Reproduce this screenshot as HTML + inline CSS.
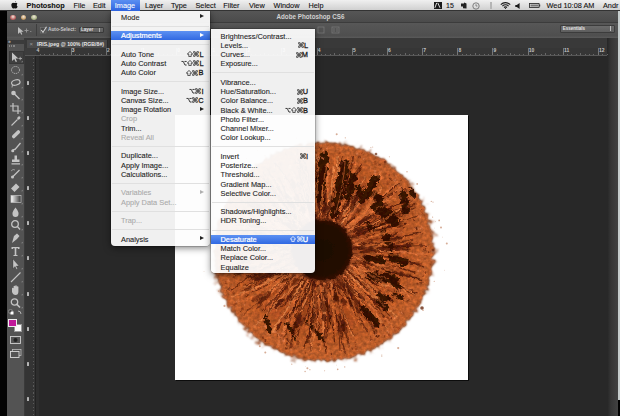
<!DOCTYPE html><html><head><meta charset="utf-8"><style>
*{margin:0;padding:0;box-sizing:border-box}
html,body{width:620px;height:416px;overflow:hidden;background:#282828;font-family:"Liberation Sans",sans-serif}
.a{position:absolute}
.mi{position:absolute;left:0;right:0;height:9.25px;line-height:9.25px;font-size:7.4px;color:#1e1e1e;white-space:nowrap;-webkit-text-stroke:0.1px #222}
.mi .t{position:absolute;left:10px;top:0.3px}
.mi .k{position:absolute;right:6.5px;top:0.3px;text-align:right}
.dis{color:#a9a9a9;-webkit-text-stroke:0.1px #b0b0b0}
.hl{background:linear-gradient(#5d91f2,#3169e2);color:#fff;-webkit-text-stroke:0.22px #fff}
.sep{position:absolute;left:1px;right:1px;height:1px;background:#e0e0e0}
.arr{position:absolute;right:5.8px;top:2.1px;width:0;height:0;border-left:4.3px solid #222;border-top:2.5px solid transparent;border-bottom:2.5px solid transparent}
.mb{position:absolute;top:0.6px;height:10px;line-height:10px;font-size:7.3px;color:#111;white-space:nowrap;-webkit-text-stroke:0.1px #111}
.ti{position:absolute;left:9px;width:14px;height:12px;filter:blur(0.25px)}
</style></head><body><div class="a" style="left:0;top:10px;width:7px;height:406px;background:#030303"></div>
<div class="a" style="left:607px;top:37px;width:11px;height:379px;background:linear-gradient(90deg,#262626,#353535 35%,#424242 100%)"></div>
<div class="a" style="left:617.5px;top:10px;width:2.5px;height:390px;background:#c6cdcd"></div>
<div class="a" style="left:617.5px;top:400px;width:2.5px;height:16px;background:#000"></div>
<div class="a" style="left:7px;top:10.5px;width:610.5px;height:12px;background:linear-gradient(#565656,#4a4a4a)"></div>
<div class="a" style="left:7px;top:22.3px;width:610.5px;height:15.7px;background:linear-gradient(#575757,#4f4f4f 85%,#5a5a5a);border-top:1px solid #3c3c3c"></div>
<div class="a" style="left:9.799999999999999px;top:14.5px;width:5.8px;height:5.8px;border-radius:50%;background:radial-gradient(circle at 50% 35%,#f4e8dc 0,#b86060 60%,#5a4a40 100%)"></div>
<div class="a" style="left:20.5px;top:14.5px;width:5.8px;height:5.8px;border-radius:50%;background:radial-gradient(circle at 50% 35%,#f4e8dc 0,#c8a06a 60%,#5a4a40 100%)"></div>
<div class="a" style="left:31.1px;top:14.5px;width:5.8px;height:5.8px;border-radius:50%;background:radial-gradient(circle at 50% 35%,#f4e8dc 0,#a8b486 60%,#5a4a40 100%)"></div>
<div class="a" style="left:276.5px;top:10.5px;height:12px;line-height:12px;font-size:6.27px;color:#d2d2d2;font-weight:bold;white-space:nowrap">Adobe Photoshop CS6</div>
<svg class="a" style="left:16px;top:25.5px" width="16" height="9" viewBox="0 0 16 9"><path d="M2,1V8L4,6.3L5.3,8.8L6.3,8.3L5.2,5.8H7.6Z" fill="#bdbdbd"/><path d="M8.5,4.5H12.5M10.5,2.5V6.5" stroke="#9a9a9a" stroke-width="0.9"/><path d="M14,5L15.6,5L14.8,6Z" fill="#aaa"/></svg>
<div class="a" style="left:36px;top:24px;width:1px;height:12px;background:#3e3e3e"></div>
<svg class="a" style="left:40px;top:25.5px" width="7" height="8" viewBox="0 0 7 8"><rect x="0.5" y="1.5" width="5.5" height="5.5" fill="#4a4a4a" stroke="#777" stroke-width="0.6"/><path d="M1.2,4L3,6.3L6.5,0.8" fill="none" stroke="#d0d0d0" stroke-width="1.1"/></svg>
<div class="a" style="left:48px;top:25.8px;line-height:8px;font-size:4.75px;color:#c8c8c8;white-space:nowrap;font-weight:bold">Auto-Select:</div>
<div class="a" style="left:78.5px;top:26.5px;width:25px;height:6.3px;background:linear-gradient(#6a6a6a,#5c5c5c);border:0.6px solid #3a3a3a;border-radius:1px"></div>
<div class="a" style="left:81px;top:26.5px;line-height:6.5px;font-size:4.6px;color:#dedede;white-space:nowrap;font-weight:bold">Layer</div>
<div class="a" style="left:98.5px;top:27.5px;width:1px;height:4.5px;background:#aaa"></div>
<svg class="a" style="left:316px;top:25px" width="40" height="10" viewBox="0 0 40 10"><rect x="2" y="2" width="6" height="6" fill="none" stroke="#777" stroke-width="0.8"/><rect x="16" y="2" width="7" height="6" fill="none" stroke="#777" stroke-width="0.8"/><path d="M18,3v4M21,3v4" stroke="#777" stroke-width="0.8"/></svg>
<div class="a" style="left:560.3px;top:24.8px;width:55px;height:8px;background:linear-gradient(#6b6b6b,#5e5e5e);border:0.6px solid #3c3c3c;border-radius:1px"></div>
<div class="a" style="left:562.7px;top:24.8px;line-height:8px;font-size:4.5px;color:#e6e6e6;font-weight:bold;white-space:nowrap">Essentials</div>
<div class="a" style="left:610px;top:26.3px;width:1px;height:5px;background:#bbb"></div>
<div class="a" style="left:25px;top:38px;width:582px;height:10px;background:#393939"></div>
<div class="a" style="left:27px;top:39.5px;width:80.5px;height:8.2px;background:#4b4b4b;border-right:1px solid #2e2e2e"></div>
<div class="a" style="left:37px;top:39.5px;height:8.2px;line-height:8.2px;font-size:5.2px;color:#e4e4e4;font-weight:bold;white-space:nowrap">IRIS.jpeg @ 100% (RGB/8#)</div>
<div class="a" style="left:29.6px;top:39.6px;height:8px;line-height:8px;font-size:6px;color:#9a9a9a">×</div>
<div class="a" style="left:25px;top:47.7px;width:582px;height:8.3px;background:#363636;border-bottom:1px solid #585858"></div>
<div class="a" style="left:36.6px;top:47.9px;font-size:5px;line-height:5px;color:#c4c4c4;font-weight:bold">4</div><div class="a" style="left:35.4px;top:48px;width:0.8px;height:7px;background:#777"></div><div class="a" style="left:39.8px;top:53.6px;width:0.8px;height:1.4px;background:#686868"></div><div class="a" style="left:44.2px;top:53.6px;width:0.8px;height:1.4px;background:#686868"></div><div class="a" style="left:48.6px;top:53.6px;width:0.8px;height:1.4px;background:#686868"></div><div class="a" style="left:53.0px;top:52.8px;width:0.8px;height:2.2px;background:#686868"></div><div class="a" style="left:57.4px;top:53.6px;width:0.8px;height:1.4px;background:#686868"></div><div class="a" style="left:61.8px;top:53.6px;width:0.8px;height:1.4px;background:#686868"></div><div class="a" style="left:66.2px;top:53.6px;width:0.8px;height:1.4px;background:#686868"></div><div class="a" style="left:71.8px;top:47.9px;font-size:5px;line-height:5px;color:#c4c4c4;font-weight:bold">3</div><div class="a" style="left:70.6px;top:48px;width:0.8px;height:7px;background:#777"></div><div class="a" style="left:74.9px;top:53.6px;width:0.8px;height:1.4px;background:#686868"></div><div class="a" style="left:79.3px;top:53.6px;width:0.8px;height:1.4px;background:#686868"></div><div class="a" style="left:83.7px;top:53.6px;width:0.8px;height:1.4px;background:#686868"></div><div class="a" style="left:88.1px;top:52.8px;width:0.8px;height:2.2px;background:#686868"></div><div class="a" style="left:92.5px;top:53.6px;width:0.8px;height:1.4px;background:#686868"></div><div class="a" style="left:96.9px;top:53.6px;width:0.8px;height:1.4px;background:#686868"></div><div class="a" style="left:101.3px;top:53.6px;width:0.8px;height:1.4px;background:#686868"></div><div class="a" style="left:106.9px;top:47.9px;font-size:5px;line-height:5px;color:#c4c4c4;font-weight:bold">2</div><div class="a" style="left:105.7px;top:48px;width:0.8px;height:7px;background:#777"></div><div class="a" style="left:110.1px;top:53.6px;width:0.8px;height:1.4px;background:#686868"></div><div class="a" style="left:114.5px;top:53.6px;width:0.8px;height:1.4px;background:#686868"></div><div class="a" style="left:118.9px;top:53.6px;width:0.8px;height:1.4px;background:#686868"></div><div class="a" style="left:123.3px;top:52.8px;width:0.8px;height:2.2px;background:#686868"></div><div class="a" style="left:127.7px;top:53.6px;width:0.8px;height:1.4px;background:#686868"></div><div class="a" style="left:132.1px;top:53.6px;width:0.8px;height:1.4px;background:#686868"></div><div class="a" style="left:136.5px;top:53.6px;width:0.8px;height:1.4px;background:#686868"></div><div class="a" style="left:142.0px;top:47.9px;font-size:5px;line-height:5px;color:#c4c4c4;font-weight:bold">1</div><div class="a" style="left:140.8px;top:48px;width:0.8px;height:7px;background:#777"></div><div class="a" style="left:145.2px;top:53.6px;width:0.8px;height:1.4px;background:#686868"></div><div class="a" style="left:149.6px;top:53.6px;width:0.8px;height:1.4px;background:#686868"></div><div class="a" style="left:154.0px;top:53.6px;width:0.8px;height:1.4px;background:#686868"></div><div class="a" style="left:158.4px;top:52.8px;width:0.8px;height:2.2px;background:#686868"></div><div class="a" style="left:162.8px;top:53.6px;width:0.8px;height:1.4px;background:#686868"></div><div class="a" style="left:167.2px;top:53.6px;width:0.8px;height:1.4px;background:#686868"></div><div class="a" style="left:171.6px;top:53.6px;width:0.8px;height:1.4px;background:#686868"></div><div class="a" style="left:177.2px;top:47.9px;font-size:5px;line-height:5px;color:#c4c4c4;font-weight:bold">0</div><div class="a" style="left:176.0px;top:48px;width:0.8px;height:7px;background:#777"></div><div class="a" style="left:180.4px;top:53.6px;width:0.8px;height:1.4px;background:#686868"></div><div class="a" style="left:184.8px;top:53.6px;width:0.8px;height:1.4px;background:#686868"></div><div class="a" style="left:189.2px;top:53.6px;width:0.8px;height:1.4px;background:#686868"></div><div class="a" style="left:193.6px;top:52.8px;width:0.8px;height:2.2px;background:#686868"></div><div class="a" style="left:198.0px;top:53.6px;width:0.8px;height:1.4px;background:#686868"></div><div class="a" style="left:202.4px;top:53.6px;width:0.8px;height:1.4px;background:#686868"></div><div class="a" style="left:206.8px;top:53.6px;width:0.8px;height:1.4px;background:#686868"></div><div class="a" style="left:212.3px;top:47.9px;font-size:5px;line-height:5px;color:#c4c4c4;font-weight:bold">1</div><div class="a" style="left:211.2px;top:48px;width:0.8px;height:7px;background:#777"></div><div class="a" style="left:215.5px;top:53.6px;width:0.8px;height:1.4px;background:#686868"></div><div class="a" style="left:219.9px;top:53.6px;width:0.8px;height:1.4px;background:#686868"></div><div class="a" style="left:224.3px;top:53.6px;width:0.8px;height:1.4px;background:#686868"></div><div class="a" style="left:228.7px;top:52.8px;width:0.8px;height:2.2px;background:#686868"></div><div class="a" style="left:233.1px;top:53.6px;width:0.8px;height:1.4px;background:#686868"></div><div class="a" style="left:237.5px;top:53.6px;width:0.8px;height:1.4px;background:#686868"></div><div class="a" style="left:241.9px;top:53.6px;width:0.8px;height:1.4px;background:#686868"></div><div class="a" style="left:247.5px;top:47.9px;font-size:5px;line-height:5px;color:#c4c4c4;font-weight:bold">2</div><div class="a" style="left:246.3px;top:48px;width:0.8px;height:7px;background:#777"></div><div class="a" style="left:250.7px;top:53.6px;width:0.8px;height:1.4px;background:#686868"></div><div class="a" style="left:255.1px;top:53.6px;width:0.8px;height:1.4px;background:#686868"></div><div class="a" style="left:259.5px;top:53.6px;width:0.8px;height:1.4px;background:#686868"></div><div class="a" style="left:263.9px;top:52.8px;width:0.8px;height:2.2px;background:#686868"></div><div class="a" style="left:268.3px;top:53.6px;width:0.8px;height:1.4px;background:#686868"></div><div class="a" style="left:272.7px;top:53.6px;width:0.8px;height:1.4px;background:#686868"></div><div class="a" style="left:277.1px;top:53.6px;width:0.8px;height:1.4px;background:#686868"></div><div class="a" style="left:282.6px;top:47.9px;font-size:5px;line-height:5px;color:#c4c4c4;font-weight:bold">3</div><div class="a" style="left:281.4px;top:48px;width:0.8px;height:7px;background:#777"></div><div class="a" style="left:285.8px;top:53.6px;width:0.8px;height:1.4px;background:#686868"></div><div class="a" style="left:290.2px;top:53.6px;width:0.8px;height:1.4px;background:#686868"></div><div class="a" style="left:294.6px;top:53.6px;width:0.8px;height:1.4px;background:#686868"></div><div class="a" style="left:299.0px;top:52.8px;width:0.8px;height:2.2px;background:#686868"></div><div class="a" style="left:303.4px;top:53.6px;width:0.8px;height:1.4px;background:#686868"></div><div class="a" style="left:307.8px;top:53.6px;width:0.8px;height:1.4px;background:#686868"></div><div class="a" style="left:312.2px;top:53.6px;width:0.8px;height:1.4px;background:#686868"></div><div class="a" style="left:317.8px;top:47.9px;font-size:5px;line-height:5px;color:#c4c4c4;font-weight:bold">4</div><div class="a" style="left:316.6px;top:48px;width:0.8px;height:7px;background:#777"></div><div class="a" style="left:321.0px;top:53.6px;width:0.8px;height:1.4px;background:#686868"></div><div class="a" style="left:325.4px;top:53.6px;width:0.8px;height:1.4px;background:#686868"></div><div class="a" style="left:329.8px;top:53.6px;width:0.8px;height:1.4px;background:#686868"></div><div class="a" style="left:334.2px;top:52.8px;width:0.8px;height:2.2px;background:#686868"></div><div class="a" style="left:338.6px;top:53.6px;width:0.8px;height:1.4px;background:#686868"></div><div class="a" style="left:343.0px;top:53.6px;width:0.8px;height:1.4px;background:#686868"></div><div class="a" style="left:347.4px;top:53.6px;width:0.8px;height:1.4px;background:#686868"></div><div class="a" style="left:352.9px;top:47.9px;font-size:5px;line-height:5px;color:#c4c4c4;font-weight:bold">5</div><div class="a" style="left:351.8px;top:48px;width:0.8px;height:7px;background:#777"></div><div class="a" style="left:356.1px;top:53.6px;width:0.8px;height:1.4px;background:#686868"></div><div class="a" style="left:360.5px;top:53.6px;width:0.8px;height:1.4px;background:#686868"></div><div class="a" style="left:364.9px;top:53.6px;width:0.8px;height:1.4px;background:#686868"></div><div class="a" style="left:369.3px;top:52.8px;width:0.8px;height:2.2px;background:#686868"></div><div class="a" style="left:373.7px;top:53.6px;width:0.8px;height:1.4px;background:#686868"></div><div class="a" style="left:378.1px;top:53.6px;width:0.8px;height:1.4px;background:#686868"></div><div class="a" style="left:382.5px;top:53.6px;width:0.8px;height:1.4px;background:#686868"></div><div class="a" style="left:388.1px;top:47.9px;font-size:5px;line-height:5px;color:#c4c4c4;font-weight:bold">6</div><div class="a" style="left:386.9px;top:48px;width:0.8px;height:7px;background:#777"></div><div class="a" style="left:391.3px;top:53.6px;width:0.8px;height:1.4px;background:#686868"></div><div class="a" style="left:395.7px;top:53.6px;width:0.8px;height:1.4px;background:#686868"></div><div class="a" style="left:400.1px;top:53.6px;width:0.8px;height:1.4px;background:#686868"></div><div class="a" style="left:404.5px;top:52.8px;width:0.8px;height:2.2px;background:#686868"></div><div class="a" style="left:408.9px;top:53.6px;width:0.8px;height:1.4px;background:#686868"></div><div class="a" style="left:413.3px;top:53.6px;width:0.8px;height:1.4px;background:#686868"></div><div class="a" style="left:417.7px;top:53.6px;width:0.8px;height:1.4px;background:#686868"></div><div class="a" style="left:423.2px;top:47.9px;font-size:5px;line-height:5px;color:#c4c4c4;font-weight:bold">7</div><div class="a" style="left:422.0px;top:48px;width:0.8px;height:7px;background:#777"></div><div class="a" style="left:426.4px;top:53.6px;width:0.8px;height:1.4px;background:#686868"></div><div class="a" style="left:430.8px;top:53.6px;width:0.8px;height:1.4px;background:#686868"></div><div class="a" style="left:435.2px;top:53.6px;width:0.8px;height:1.4px;background:#686868"></div><div class="a" style="left:439.6px;top:52.8px;width:0.8px;height:2.2px;background:#686868"></div><div class="a" style="left:444.0px;top:53.6px;width:0.8px;height:1.4px;background:#686868"></div><div class="a" style="left:448.4px;top:53.6px;width:0.8px;height:1.4px;background:#686868"></div><div class="a" style="left:452.8px;top:53.6px;width:0.8px;height:1.4px;background:#686868"></div><div class="a" style="left:458.4px;top:47.9px;font-size:5px;line-height:5px;color:#c4c4c4;font-weight:bold">8</div><div class="a" style="left:457.2px;top:48px;width:0.8px;height:7px;background:#777"></div><div class="a" style="left:461.6px;top:53.6px;width:0.8px;height:1.4px;background:#686868"></div><div class="a" style="left:466.0px;top:53.6px;width:0.8px;height:1.4px;background:#686868"></div><div class="a" style="left:470.4px;top:53.6px;width:0.8px;height:1.4px;background:#686868"></div><div class="a" style="left:474.8px;top:52.8px;width:0.8px;height:2.2px;background:#686868"></div><div class="a" style="left:479.2px;top:53.6px;width:0.8px;height:1.4px;background:#686868"></div><div class="a" style="left:483.6px;top:53.6px;width:0.8px;height:1.4px;background:#686868"></div><div class="a" style="left:488.0px;top:53.6px;width:0.8px;height:1.4px;background:#686868"></div><div class="a" style="left:493.5px;top:47.9px;font-size:5px;line-height:5px;color:#c4c4c4;font-weight:bold">9</div><div class="a" style="left:492.3px;top:48px;width:0.8px;height:7px;background:#777"></div><div class="a" style="left:496.7px;top:53.6px;width:0.8px;height:1.4px;background:#686868"></div><div class="a" style="left:501.1px;top:53.6px;width:0.8px;height:1.4px;background:#686868"></div><div class="a" style="left:505.5px;top:53.6px;width:0.8px;height:1.4px;background:#686868"></div><div class="a" style="left:509.9px;top:52.8px;width:0.8px;height:2.2px;background:#686868"></div><div class="a" style="left:514.3px;top:53.6px;width:0.8px;height:1.4px;background:#686868"></div><div class="a" style="left:518.7px;top:53.6px;width:0.8px;height:1.4px;background:#686868"></div><div class="a" style="left:523.1px;top:53.6px;width:0.8px;height:1.4px;background:#686868"></div><div class="a" style="left:528.7px;top:47.9px;font-size:5px;line-height:5px;color:#c4c4c4;font-weight:bold">10</div><div class="a" style="left:527.5px;top:48px;width:0.8px;height:7px;background:#777"></div><div class="a" style="left:531.9px;top:53.6px;width:0.8px;height:1.4px;background:#686868"></div><div class="a" style="left:536.3px;top:53.6px;width:0.8px;height:1.4px;background:#686868"></div><div class="a" style="left:540.7px;top:53.6px;width:0.8px;height:1.4px;background:#686868"></div><div class="a" style="left:545.1px;top:52.8px;width:0.8px;height:2.2px;background:#686868"></div><div class="a" style="left:549.5px;top:53.6px;width:0.8px;height:1.4px;background:#686868"></div><div class="a" style="left:553.9px;top:53.6px;width:0.8px;height:1.4px;background:#686868"></div><div class="a" style="left:558.3px;top:53.6px;width:0.8px;height:1.4px;background:#686868"></div><div class="a" style="left:563.9px;top:47.9px;font-size:5px;line-height:5px;color:#c4c4c4;font-weight:bold">11</div><div class="a" style="left:562.6px;top:48px;width:0.8px;height:7px;background:#777"></div><div class="a" style="left:567.0px;top:53.6px;width:0.8px;height:1.4px;background:#686868"></div><div class="a" style="left:571.4px;top:53.6px;width:0.8px;height:1.4px;background:#686868"></div><div class="a" style="left:575.8px;top:53.6px;width:0.8px;height:1.4px;background:#686868"></div><div class="a" style="left:580.2px;top:52.8px;width:0.8px;height:2.2px;background:#686868"></div><div class="a" style="left:584.6px;top:53.6px;width:0.8px;height:1.4px;background:#686868"></div><div class="a" style="left:589.0px;top:53.6px;width:0.8px;height:1.4px;background:#686868"></div><div class="a" style="left:593.4px;top:53.6px;width:0.8px;height:1.4px;background:#686868"></div><div class="a" style="left:599.0px;top:47.9px;font-size:5px;line-height:5px;color:#c4c4c4;font-weight:bold">12</div><div class="a" style="left:597.8px;top:48px;width:0.8px;height:7px;background:#777"></div><div class="a" style="left:602.2px;top:53.6px;width:0.8px;height:1.4px;background:#686868"></div><div class="a" style="left:606.6px;top:53.6px;width:0.8px;height:1.4px;background:#686868"></div>
<div class="a" style="left:25px;top:47.7px;width:10.5px;height:368.3px;background:#343434;border-right:0.8px solid #222"></div>
<div class="a" style="left:35.5px;top:56px;width:3px;height:360px;background:#2e2e2e"></div>
<div class="a" style="left:25px;top:47.7px;width:10.5px;height:8.3px;background:#3c3c3c;border-bottom:1px solid #585858"></div>
<div class="a" style="left:27px;top:80.7px;width:2.2px;height:4px;background:#b4b4b4;border-radius:0.5px"></div><div class="a" style="left:27px;top:115.8px;width:2.2px;height:4px;background:#b4b4b4;border-radius:0.5px"></div><div class="a" style="left:27px;top:150.9px;width:2.2px;height:4px;background:#b4b4b4;border-radius:0.5px"></div><div class="a" style="left:27px;top:186.1px;width:2.2px;height:4px;background:#b4b4b4;border-radius:0.5px"></div><div class="a" style="left:27px;top:221.2px;width:2.2px;height:4px;background:#b4b4b4;border-radius:0.5px"></div><div class="a" style="left:27px;top:256.4px;width:2.2px;height:4px;background:#b4b4b4;border-radius:0.5px"></div><div class="a" style="left:27px;top:291.6px;width:2.2px;height:4px;background:#b4b4b4;border-radius:0.5px"></div><div class="a" style="left:27px;top:326.7px;width:2.2px;height:4px;background:#b4b4b4;border-radius:0.5px"></div><div class="a" style="left:27px;top:361.8px;width:2.2px;height:4px;background:#b4b4b4;border-radius:0.5px"></div><div class="a" style="left:27px;top:397.0px;width:2.2px;height:4px;background:#b4b4b4;border-radius:0.5px"></div><div class="a" style="left:32.6px;top:58.0px;width:1px;height:1.2px;background:#5a5a5a"></div><div class="a" style="left:32.6px;top:61.5px;width:1px;height:1.2px;background:#5a5a5a"></div><div class="a" style="left:32.6px;top:65.0px;width:1px;height:1.2px;background:#5a5a5a"></div><div class="a" style="left:32.6px;top:68.6px;width:1px;height:1.2px;background:#5a5a5a"></div><div class="a" style="left:32.6px;top:72.1px;width:1px;height:1.2px;background:#5a5a5a"></div><div class="a" style="left:32.6px;top:75.6px;width:1px;height:1.2px;background:#5a5a5a"></div><div class="a" style="left:32.6px;top:79.1px;width:1px;height:1.2px;background:#5a5a5a"></div><div class="a" style="left:32.6px;top:82.6px;width:1px;height:1.2px;background:#5a5a5a"></div><div class="a" style="left:32.6px;top:86.2px;width:1px;height:1.2px;background:#5a5a5a"></div><div class="a" style="left:32.6px;top:89.7px;width:1px;height:1.2px;background:#5a5a5a"></div><div class="a" style="left:32.6px;top:93.2px;width:1px;height:1.2px;background:#5a5a5a"></div><div class="a" style="left:32.6px;top:96.7px;width:1px;height:1.2px;background:#5a5a5a"></div><div class="a" style="left:32.6px;top:100.2px;width:1px;height:1.2px;background:#5a5a5a"></div><div class="a" style="left:32.6px;top:103.8px;width:1px;height:1.2px;background:#5a5a5a"></div><div class="a" style="left:32.6px;top:107.3px;width:1px;height:1.2px;background:#5a5a5a"></div><div class="a" style="left:32.6px;top:110.8px;width:1px;height:1.2px;background:#5a5a5a"></div><div class="a" style="left:32.6px;top:114.3px;width:1px;height:1.2px;background:#5a5a5a"></div><div class="a" style="left:32.6px;top:117.8px;width:1px;height:1.2px;background:#5a5a5a"></div><div class="a" style="left:32.6px;top:121.4px;width:1px;height:1.2px;background:#5a5a5a"></div><div class="a" style="left:32.6px;top:124.9px;width:1px;height:1.2px;background:#5a5a5a"></div><div class="a" style="left:32.6px;top:128.4px;width:1px;height:1.2px;background:#5a5a5a"></div><div class="a" style="left:32.6px;top:131.9px;width:1px;height:1.2px;background:#5a5a5a"></div><div class="a" style="left:32.6px;top:135.4px;width:1px;height:1.2px;background:#5a5a5a"></div><div class="a" style="left:32.6px;top:139.0px;width:1px;height:1.2px;background:#5a5a5a"></div><div class="a" style="left:32.6px;top:142.5px;width:1px;height:1.2px;background:#5a5a5a"></div><div class="a" style="left:32.6px;top:146.0px;width:1px;height:1.2px;background:#5a5a5a"></div><div class="a" style="left:32.6px;top:149.5px;width:1px;height:1.2px;background:#5a5a5a"></div><div class="a" style="left:32.6px;top:153.0px;width:1px;height:1.2px;background:#5a5a5a"></div><div class="a" style="left:32.6px;top:156.6px;width:1px;height:1.2px;background:#5a5a5a"></div><div class="a" style="left:32.6px;top:160.1px;width:1px;height:1.2px;background:#5a5a5a"></div><div class="a" style="left:32.6px;top:163.6px;width:1px;height:1.2px;background:#5a5a5a"></div><div class="a" style="left:32.6px;top:167.1px;width:1px;height:1.2px;background:#5a5a5a"></div><div class="a" style="left:32.6px;top:170.6px;width:1px;height:1.2px;background:#5a5a5a"></div><div class="a" style="left:32.6px;top:174.2px;width:1px;height:1.2px;background:#5a5a5a"></div><div class="a" style="left:32.6px;top:177.7px;width:1px;height:1.2px;background:#5a5a5a"></div><div class="a" style="left:32.6px;top:181.2px;width:1px;height:1.2px;background:#5a5a5a"></div><div class="a" style="left:32.6px;top:184.7px;width:1px;height:1.2px;background:#5a5a5a"></div><div class="a" style="left:32.6px;top:188.2px;width:1px;height:1.2px;background:#5a5a5a"></div><div class="a" style="left:32.6px;top:191.8px;width:1px;height:1.2px;background:#5a5a5a"></div><div class="a" style="left:32.6px;top:195.3px;width:1px;height:1.2px;background:#5a5a5a"></div><div class="a" style="left:32.6px;top:198.8px;width:1px;height:1.2px;background:#5a5a5a"></div><div class="a" style="left:32.6px;top:202.3px;width:1px;height:1.2px;background:#5a5a5a"></div><div class="a" style="left:32.6px;top:205.8px;width:1px;height:1.2px;background:#5a5a5a"></div><div class="a" style="left:32.6px;top:209.4px;width:1px;height:1.2px;background:#5a5a5a"></div><div class="a" style="left:32.6px;top:212.9px;width:1px;height:1.2px;background:#5a5a5a"></div><div class="a" style="left:32.6px;top:216.4px;width:1px;height:1.2px;background:#5a5a5a"></div><div class="a" style="left:32.6px;top:219.9px;width:1px;height:1.2px;background:#5a5a5a"></div><div class="a" style="left:32.6px;top:223.4px;width:1px;height:1.2px;background:#5a5a5a"></div><div class="a" style="left:32.6px;top:227.0px;width:1px;height:1.2px;background:#5a5a5a"></div><div class="a" style="left:32.6px;top:230.5px;width:1px;height:1.2px;background:#5a5a5a"></div><div class="a" style="left:32.6px;top:234.0px;width:1px;height:1.2px;background:#5a5a5a"></div><div class="a" style="left:32.6px;top:237.5px;width:1px;height:1.2px;background:#5a5a5a"></div><div class="a" style="left:32.6px;top:241.0px;width:1px;height:1.2px;background:#5a5a5a"></div><div class="a" style="left:32.6px;top:244.6px;width:1px;height:1.2px;background:#5a5a5a"></div><div class="a" style="left:32.6px;top:248.1px;width:1px;height:1.2px;background:#5a5a5a"></div><div class="a" style="left:32.6px;top:251.6px;width:1px;height:1.2px;background:#5a5a5a"></div><div class="a" style="left:32.6px;top:255.1px;width:1px;height:1.2px;background:#5a5a5a"></div><div class="a" style="left:32.6px;top:258.6px;width:1px;height:1.2px;background:#5a5a5a"></div><div class="a" style="left:32.6px;top:262.2px;width:1px;height:1.2px;background:#5a5a5a"></div><div class="a" style="left:32.6px;top:265.7px;width:1px;height:1.2px;background:#5a5a5a"></div><div class="a" style="left:32.6px;top:269.2px;width:1px;height:1.2px;background:#5a5a5a"></div><div class="a" style="left:32.6px;top:272.7px;width:1px;height:1.2px;background:#5a5a5a"></div><div class="a" style="left:32.6px;top:276.2px;width:1px;height:1.2px;background:#5a5a5a"></div><div class="a" style="left:32.6px;top:279.8px;width:1px;height:1.2px;background:#5a5a5a"></div><div class="a" style="left:32.6px;top:283.3px;width:1px;height:1.2px;background:#5a5a5a"></div><div class="a" style="left:32.6px;top:286.8px;width:1px;height:1.2px;background:#5a5a5a"></div><div class="a" style="left:32.6px;top:290.3px;width:1px;height:1.2px;background:#5a5a5a"></div><div class="a" style="left:32.6px;top:293.8px;width:1px;height:1.2px;background:#5a5a5a"></div><div class="a" style="left:32.6px;top:297.4px;width:1px;height:1.2px;background:#5a5a5a"></div><div class="a" style="left:32.6px;top:300.9px;width:1px;height:1.2px;background:#5a5a5a"></div><div class="a" style="left:32.6px;top:304.4px;width:1px;height:1.2px;background:#5a5a5a"></div><div class="a" style="left:32.6px;top:307.9px;width:1px;height:1.2px;background:#5a5a5a"></div><div class="a" style="left:32.6px;top:311.4px;width:1px;height:1.2px;background:#5a5a5a"></div><div class="a" style="left:32.6px;top:315.0px;width:1px;height:1.2px;background:#5a5a5a"></div><div class="a" style="left:32.6px;top:318.5px;width:1px;height:1.2px;background:#5a5a5a"></div><div class="a" style="left:32.6px;top:322.0px;width:1px;height:1.2px;background:#5a5a5a"></div><div class="a" style="left:32.6px;top:325.5px;width:1px;height:1.2px;background:#5a5a5a"></div><div class="a" style="left:32.6px;top:329.0px;width:1px;height:1.2px;background:#5a5a5a"></div><div class="a" style="left:32.6px;top:332.6px;width:1px;height:1.2px;background:#5a5a5a"></div><div class="a" style="left:32.6px;top:336.1px;width:1px;height:1.2px;background:#5a5a5a"></div><div class="a" style="left:32.6px;top:339.6px;width:1px;height:1.2px;background:#5a5a5a"></div><div class="a" style="left:32.6px;top:343.1px;width:1px;height:1.2px;background:#5a5a5a"></div><div class="a" style="left:32.6px;top:346.6px;width:1px;height:1.2px;background:#5a5a5a"></div><div class="a" style="left:32.6px;top:350.2px;width:1px;height:1.2px;background:#5a5a5a"></div><div class="a" style="left:32.6px;top:353.7px;width:1px;height:1.2px;background:#5a5a5a"></div><div class="a" style="left:32.6px;top:357.2px;width:1px;height:1.2px;background:#5a5a5a"></div><div class="a" style="left:32.6px;top:360.7px;width:1px;height:1.2px;background:#5a5a5a"></div><div class="a" style="left:32.6px;top:364.2px;width:1px;height:1.2px;background:#5a5a5a"></div><div class="a" style="left:32.6px;top:367.8px;width:1px;height:1.2px;background:#5a5a5a"></div><div class="a" style="left:32.6px;top:371.3px;width:1px;height:1.2px;background:#5a5a5a"></div><div class="a" style="left:32.6px;top:374.8px;width:1px;height:1.2px;background:#5a5a5a"></div><div class="a" style="left:32.6px;top:378.3px;width:1px;height:1.2px;background:#5a5a5a"></div><div class="a" style="left:32.6px;top:381.8px;width:1px;height:1.2px;background:#5a5a5a"></div><div class="a" style="left:32.6px;top:385.4px;width:1px;height:1.2px;background:#5a5a5a"></div><div class="a" style="left:32.6px;top:388.9px;width:1px;height:1.2px;background:#5a5a5a"></div><div class="a" style="left:32.6px;top:392.4px;width:1px;height:1.2px;background:#5a5a5a"></div><div class="a" style="left:32.6px;top:395.9px;width:1px;height:1.2px;background:#5a5a5a"></div><div class="a" style="left:32.6px;top:399.4px;width:1px;height:1.2px;background:#5a5a5a"></div><div class="a" style="left:32.6px;top:403.0px;width:1px;height:1.2px;background:#5a5a5a"></div><div class="a" style="left:32.6px;top:406.5px;width:1px;height:1.2px;background:#5a5a5a"></div><div class="a" style="left:32.6px;top:410.0px;width:1px;height:1.2px;background:#5a5a5a"></div><div class="a" style="left:32.6px;top:413.5px;width:1px;height:1.2px;background:#5a5a5a"></div><div class="a" style="left:32.6px;top:417.0px;width:1px;height:1.2px;background:#5a5a5a"></div><div class="a" style="left:32.6px;top:420.6px;width:1px;height:1.2px;background:#5a5a5a"></div>
<div class="a" style="left:7px;top:38px;width:18px;height:378px;background:#535353;border-right:1px solid #3a3a3a"></div>
<div class="a" style="left:7px;top:39.5px;width:18px;height:4.6px;background:#3b3b3b"></div>
<div class="a" style="left:8px;top:39px;font-size:5px;line-height:5px;color:#bbb;font-weight:bold">»</div>
<div class="a" style="left:8.5px;top:45.2px;width:6px;height:1.6px;background:repeating-linear-gradient(90deg,#9a9a9a 0 1.2px,transparent 1.2px 2.2px);opacity:0.7"></div>
<div class="a" style="left:8.5px;top:50.5px;width:15.5px;height:13px;background:#404040;border:0.5px solid #383838"></div><svg width="0" height="0" style="position:absolute"><defs><linearGradient id="gr"><stop offset="0" stop-color="#fff"/><stop offset="1" stop-color="#333"/></linearGradient></defs></svg><svg class="ti" style="top:51.0px" width="14" height="12" viewBox="0 0 14 12"><path d="M3,1.5V10L5.2,8L6.8,11L8,10.4L6.6,7.4H9.4Z" fill="#c4c4c4"/><path d="M9.5,7.5H13M11.2,5.8V9.2" stroke="#aaa" stroke-width="0.9"/><path d="M12.2,11.2H13.6V9.8Z" fill="#999"/></svg><svg class="ti" style="top:64.0px" width="14" height="12" viewBox="0 0 14 12"><ellipse cx="6.5" cy="6" rx="4" ry="3.5" fill="none" stroke="#c4c4c4" stroke-width="0.9" stroke-dasharray="1.2 0.8"/><path d="M12.2,11.2H13.6V9.8Z" fill="#999"/></svg><svg class="ti" style="top:76.5px" width="14" height="12" viewBox="0 0 14 12"><ellipse cx="6.8" cy="5.5" rx="4.3" ry="2.6" fill="none" stroke="#c4c4c4" stroke-width="1.2" transform="rotate(-15 6.8 5.5)"/><path d="M3.5,7.5L3,10.5" stroke="#c4c4c4" stroke-width="0.8"/><path d="M12.2,11.2H13.6V9.8Z" fill="#999"/></svg><svg class="ti" style="top:89.0px" width="14" height="12" viewBox="0 0 14 12"><circle cx="4.5" cy="4" r="2.3" fill="#c4c4c4"/><path d="M5.5,5L10.5,10" stroke="#c4c4c4" stroke-width="1.4"/><path d="M12.2,11.2H13.6V9.8Z" fill="#999"/></svg><svg class="ti" style="top:102.0px" width="14" height="12" viewBox="0 0 14 12"><path d="M4,1V9H12M1,4H9V12" fill="none" stroke="#c4c4c4" stroke-width="1.2"/><path d="M12.2,11.2H13.6V9.8Z" fill="#999"/></svg><svg class="ti" style="top:115.0px" width="14" height="12" viewBox="0 0 14 12"><path d="M2.5,10.5L8.5,4.5" stroke="#c4c4c4" stroke-width="1.1"/><ellipse cx="9.8" cy="3" rx="1.8" ry="1.4" fill="#c4c4c4" transform="rotate(-45 9.8 3)"/><path d="M12.2,11.2H13.6V9.8Z" fill="#999"/></svg><svg class="ti" style="top:128.0px" width="14" height="12" viewBox="0 0 14 12"><rect x="2" y="4.5" width="10" height="3.5" rx="1.7" fill="#c4c4c4" transform="rotate(-45 7 6.2)"/><path d="M12.2,11.2H13.6V9.8Z" fill="#999"/></svg><svg class="ti" style="top:141.0px" width="14" height="12" viewBox="0 0 14 12"><path d="M3,10.5Q4.5,8 6,8.5L11.5,2" stroke="#c4c4c4" stroke-width="1.3" fill="none"/><circle cx="3.8" cy="9.8" r="1.5" fill="#c4c4c4"/><path d="M12.2,11.2H13.6V9.8Z" fill="#999"/></svg><svg class="ti" style="top:154.0px" width="14" height="12" viewBox="0 0 14 12"><path d="M5.5,1.5H8V5.5H10.5V8H3V5.5H5.5Z M2.5,9.2H11V10.5H2.5Z" fill="#c4c4c4"/><path d="M12.2,11.2H13.6V9.8Z" fill="#999"/></svg><svg class="ti" style="top:167.0px" width="14" height="12" viewBox="0 0 14 12"><path d="M3,10.5L10.5,3" stroke="#c4c4c4" stroke-width="1.3"/><circle cx="3.5" cy="10" r="1.5" fill="#c4c4c4"/><path d="M2,4Q4,1.5 6,3" stroke="#aaa" stroke-width="0.8" fill="none"/><path d="M12.2,11.2H13.6V9.8Z" fill="#999"/></svg><svg class="ti" style="top:180.0px" width="14" height="12" viewBox="0 0 14 12"><path d="M2,8.5L7,3.5L10.5,7L5.5,12Z" fill="#c4c4c4"/><path d="M12.2,11.2H13.6V9.8Z" fill="#999"/></svg><svg class="ti" style="top:193.0px" width="14" height="12" viewBox="0 0 14 12"><rect x="2" y="2.5" width="10" height="7" fill="url(#gr)" stroke="#c4c4c4" stroke-width="0.7"/><path d="M12.2,11.2H13.6V9.8Z" fill="#999"/></svg><svg class="ti" style="top:206.0px" width="14" height="12" viewBox="0 0 14 12"><path d="M6.5,1.5Q10,6 9.5,8A3,3 0 0 1 3.5,8Q3,6 6.5,1.5Z" fill="#c4c4c4"/><path d="M12.2,11.2H13.6V9.8Z" fill="#999"/></svg><svg class="ti" style="top:219.0px" width="14" height="12" viewBox="0 0 14 12"><circle cx="6" cy="5" r="3.3" fill="none" stroke="#c4c4c4" stroke-width="1.3"/><path d="M8.3,7.3L11,10.5" stroke="#c4c4c4" stroke-width="1.3"/><path d="M12.2,11.2H13.6V9.8Z" fill="#999"/></svg><svg class="ti" style="top:232.0px" width="14" height="12" viewBox="0 0 14 12"><path d="M3,11L5,4L8,1.5L10.5,4L8,7Z" fill="#c4c4c4"/><path d="M12.2,11.2H13.6V9.8Z" fill="#999"/></svg><svg class="ti" style="top:245.0px" width="14" height="12" viewBox="0 0 14 12"><path d="M2.5,2H10.5V4H9V3.2H7.3V10H8.5V11H4.5V10H5.7V3.2H4V4H2.5Z" fill="#c4c4c4"/><path d="M12.2,11.2H13.6V9.8Z" fill="#999"/></svg><svg class="ti" style="top:258.0px" width="14" height="12" viewBox="0 0 14 12"><path d="M4,1V10.5L6,8.5L7.5,11.5L8.7,11L7.3,8H10Z" fill="#c4c4c4" stroke="#222" stroke-width="0.3"/><path d="M12.2,11.2H13.6V9.8Z" fill="#999"/></svg><svg class="ti" style="top:271.0px" width="14" height="12" viewBox="0 0 14 12"><path d="M2,11L11.5,1.5" stroke="#c4c4c4" stroke-width="1.1"/><path d="M12.2,11.2H13.6V9.8Z" fill="#999"/></svg><svg class="ti" style="top:284.0px" width="14" height="12" viewBox="0 0 14 12"><path d="M3,6V4.5A0.8,0.8 0 0 1 4.6,4.5V6V2.5A0.8,0.8 0 0 1 6.2,2.5V6V2A0.8,0.8 0 0 1 7.8,2V6V3A0.8,0.8 0 0 1 9.4,3V7.5Q9.4,11 6.5,11Q4,11 3,8Z" fill="#c4c4c4"/><path d="M12.2,11.2H13.6V9.8Z" fill="#999"/></svg><svg class="ti" style="top:297.0px" width="14" height="12" viewBox="0 0 14 12"><circle cx="5.5" cy="5" r="3.2" fill="none" stroke="#c4c4c4" stroke-width="1.3"/><path d="M7.8,7.3L11,10.5" stroke="#c4c4c4" stroke-width="1.6"/><path d="M12.2,11.2H13.6V9.8Z" fill="#999"/></svg><svg class="a" style="left:8px;top:309px" width="15" height="8" viewBox="0 0 15 8"><rect x="1" y="1" width="3" height="3" fill="#111" stroke="#ddd" stroke-width="0.5"/><rect x="2.5" y="2.5" width="3" height="3" fill="#fff"/><path d="M10,2Q13,2 13,5" fill="none" stroke="#ccc" stroke-width="0.8"/></svg><div class="a" style="left:14.3px;top:324px;width:8px;height:8px;background:#fafafa;border:0.5px solid #999"></div><div class="a" style="left:8.4px;top:318.8px;width:8.2px;height:8.4px;background:#c0189a;border:0.6px solid #eee"></div><svg class="a" style="left:10px;top:335.5px" width="11" height="8" viewBox="0 0 11 8"><rect x="0.5" y="0.5" width="10" height="7" fill="none" stroke="#cfcfcf" stroke-width="0.9"/><circle cx="5.5" cy="4" r="2" fill="#222"/></svg><svg class="a" style="left:10px;top:349px" width="12" height="9" viewBox="0 0 12 9"><rect x="2.5" y="0.5" width="8.5" height="6" fill="none" stroke="#bbb" stroke-width="0.8"/><rect x="0.5" y="2.5" width="8.5" height="6" fill="#535353" stroke="#d8d8d8" stroke-width="0.9"/></svg>
<div class="a" style="left:175.2px;top:114.6px;width:293.2px;height:265.6px;background:#fff;box-shadow:1px 1px 0 #0c0c0c"></div>
<svg class="a" style="left:0;top:0" width="620" height="416" viewBox="0 0 620 416"><defs><radialGradient id="ig" cx="322.0" cy="250.0" r="108.5" gradientUnits="userSpaceOnUse"><stop offset="0" stop-color="#2a0c04"/><stop offset="0.27" stop-color="#3a1206"/><stop offset="0.3" stop-color="#9a4620"/><stop offset="0.42" stop-color="#a2461c"/><stop offset="0.72" stop-color="#ac4e20"/><stop offset="0.82" stop-color="#b45624"/><stop offset="0.9" stop-color="#b85a28"/><stop offset="1" stop-color="#bc5e2c"/></radialGradient><radialGradient id="pg" cx="322.0" cy="250.0" r="32.0" gradientUnits="userSpaceOnUse"><stop offset="0" stop-color="#1c0703"/><stop offset="0.8" stop-color="#240a04"/><stop offset="1" stop-color="#3a1407"/></radialGradient><filter id="rough" x="-10%" y="-10%" width="120%" height="120%"><feTurbulence type="fractalNoise" baseFrequency="0.22" numOctaves="2" seed="4" result="n"/><feDisplacementMap in="SourceGraphic" in2="n" scale="4" xChannelSelector="R" yChannelSelector="G"/><feGaussianBlur stdDeviation="0.6"/></filter><filter id="edge" x="-10%" y="-10%" width="120%" height="120%"><feTurbulence type="fractalNoise" baseFrequency="0.3" numOctaves="3" seed="2" result="n"/><feDisplacementMap in="SourceGraphic" in2="n" scale="8" xChannelSelector="R" yChannelSelector="G"/><feGaussianBlur stdDeviation="1.0"/></filter><filter id="tex" x="0" y="0" width="100%" height="100%" color-interpolation-filters="sRGB"><feTurbulence type="fractalNoise" baseFrequency="0.3" numOctaves="2" seed="8" result="n"/><feColorMatrix in="n" type="matrix" values="1 0 0 0 0  1 0 0 0 0  1 0 0 0 0  0 0 0 0 1" result="g"/><feComposite in="SourceGraphic" in2="g" operator="arithmetic" k1="0.55" k2="0.73" k3="0" k4="0" result="m"/><feComposite in="m" in2="SourceGraphic" operator="in"/></filter><filter id="cry" x="-20%" y="-20%" width="140%" height="140%"><feTurbulence type="fractalNoise" baseFrequency="0.28" numOctaves="2" seed="12" result="n"/><feDisplacementMap in="SourceGraphic" in2="n" scale="6" xChannelSelector="R" yChannelSelector="G"/><feGaussianBlur stdDeviation="0.6"/></filter><clipPath id="cc"><rect x="175.2" y="114.6" width="293.2" height="265.6"/></clipPath></defs><g clip-path="url(#cc)"><g filter="url(#tex)"><g filter="url(#edge)"><circle cx="324.0" cy="251.6" r="110.0" fill="#b65828"/><circle cx="243.8" cy="173.5" r="2.2" fill="#c46232" opacity="0.77"/><circle cx="316.8" cy="138.8" r="0.9" fill="#c46232" opacity="0.53"/><circle cx="428.4" cy="212.8" r="2.4" fill="#c46232" opacity="0.36"/><circle cx="217.1" cy="272.6" r="1.8" fill="#c46232" opacity="0.59"/><circle cx="432.4" cy="260.6" r="1.3" fill="#c46232" opacity="0.76"/><circle cx="334.7" cy="143.7" r="2.2" fill="#c46232" opacity="0.37"/><circle cx="243.9" cy="178.8" r="0.8" fill="#c46232" opacity="0.74"/><circle cx="351.4" cy="356.9" r="2.6" fill="#c46232" opacity="0.74"/><circle cx="296.3" cy="361.4" r="1.8" fill="#c46232" opacity="0.64"/><circle cx="355.7" cy="360.2" r="2.0" fill="#c46232" opacity="0.78"/><circle cx="409.8" cy="183.9" r="1.5" fill="#c46232" opacity="0.38"/><circle cx="389.8" cy="337.1" r="1.3" fill="#c46232" opacity="0.60"/><circle cx="435.5" cy="254.0" r="1.4" fill="#c46232" opacity="0.45"/><circle cx="370.1" cy="151.3" r="1.4" fill="#c46232" opacity="0.54"/><circle cx="293.7" cy="148.1" r="2.6" fill="#c46232" opacity="0.31"/><circle cx="323.9" cy="139.0" r="0.8" fill="#c46232" opacity="0.69"/><circle cx="250.0" cy="334.3" r="0.8" fill="#c46232" opacity="0.32"/><circle cx="371.6" cy="354.3" r="1.2" fill="#c46232" opacity="0.68"/><circle cx="426.3" cy="203.2" r="1.4" fill="#c46232" opacity="0.48"/><circle cx="213.2" cy="234.3" r="1.0" fill="#c46232" opacity="0.67"/><circle cx="356.9" cy="143.9" r="0.9" fill="#c46232" opacity="0.77"/><circle cx="416.1" cy="311.0" r="1.9" fill="#c46232" opacity="0.76"/><circle cx="263.5" cy="347.1" r="1.8" fill="#c46232" opacity="0.46"/><circle cx="279.8" cy="350.7" r="0.9" fill="#c46232" opacity="0.37"/><circle cx="281.7" cy="146.3" r="1.1" fill="#c46232" opacity="0.32"/><circle cx="434.3" cy="242.4" r="1.5" fill="#c46232" opacity="0.42"/><circle cx="230.6" cy="189.0" r="1.6" fill="#c46232" opacity="0.51"/><circle cx="430.1" cy="290.3" r="0.9" fill="#c46232" opacity="0.55"/><circle cx="381.1" cy="159.6" r="2.1" fill="#c46232" opacity="0.77"/><circle cx="247.4" cy="169.6" r="1.0" fill="#c46232" opacity="0.52"/><circle cx="390.6" cy="342.4" r="1.3" fill="#c46232" opacity="0.53"/><circle cx="436.6" cy="251.1" r="2.6" fill="#c46232" opacity="0.53"/><circle cx="212.4" cy="259.9" r="1.7" fill="#c46232" opacity="0.45"/><circle cx="234.8" cy="313.2" r="1.5" fill="#c46232" opacity="0.79"/><circle cx="431.7" cy="223.8" r="1.7" fill="#c46232" opacity="0.47"/><circle cx="416.5" cy="309.6" r="2.2" fill="#c46232" opacity="0.73"/><circle cx="251.8" cy="337.5" r="2.2" fill="#c46232" opacity="0.65"/><circle cx="266.4" cy="155.5" r="1.5" fill="#c46232" opacity="0.65"/><circle cx="302.7" cy="359.9" r="2.2" fill="#c46232" opacity="0.65"/><circle cx="293.2" cy="360.5" r="2.0" fill="#c46232" opacity="0.59"/><circle cx="434.5" cy="259.7" r="1.3" fill="#c46232" opacity="0.64"/><circle cx="214.6" cy="277.5" r="2.0" fill="#c46232" opacity="0.70"/><circle cx="259.7" cy="342.6" r="2.1" fill="#c46232" opacity="0.71"/><circle cx="257.8" cy="342.6" r="2.4" fill="#c46232" opacity="0.64"/><circle cx="436.0" cy="234.7" r="1.7" fill="#c46232" opacity="0.56"/><circle cx="380.6" cy="348.9" r="2.5" fill="#c46232" opacity="0.54"/><circle cx="283.8" cy="147.3" r="2.1" fill="#c46232" opacity="0.39"/><circle cx="345.1" cy="142.6" r="2.0" fill="#c46232" opacity="0.51"/><circle cx="244.1" cy="172.9" r="1.9" fill="#c46232" opacity="0.66"/><circle cx="430.8" cy="270.3" r="1.6" fill="#c46232" opacity="0.63"/><circle cx="345.6" cy="361.1" r="1.9" fill="#c46232" opacity="0.32"/><circle cx="216.9" cy="270.9" r="0.9" fill="#c46232" opacity="0.37"/><circle cx="279.4" cy="350.6" r="1.1" fill="#c46232" opacity="0.32"/><circle cx="216.8" cy="275.3" r="1.9" fill="#c46232" opacity="0.60"/><circle cx="332.6" cy="364.2" r="0.8" fill="#c46232" opacity="0.50"/><circle cx="304.4" cy="359.8" r="1.0" fill="#c46232" opacity="0.72"/><circle cx="248.4" cy="328.3" r="1.9" fill="#c46232" opacity="0.35"/><circle cx="218.9" cy="220.9" r="1.8" fill="#c46232" opacity="0.78"/><circle cx="369.9" cy="151.6" r="2.3" fill="#c46232" opacity="0.62"/><circle cx="250.1" cy="330.8" r="1.9" fill="#c46232" opacity="0.58"/><circle cx="433.2" cy="221.5" r="1.9" fill="#c46232" opacity="0.48"/><circle cx="408.3" cy="184.9" r="1.0" fill="#c46232" opacity="0.58"/><circle cx="242.8" cy="179.9" r="1.9" fill="#c46232" opacity="0.75"/><circle cx="245.7" cy="329.0" r="1.2" fill="#c46232" opacity="0.45"/><circle cx="432.1" cy="232.7" r="2.5" fill="#c46232" opacity="0.76"/><circle cx="234.1" cy="189.8" r="2.6" fill="#c46232" opacity="0.55"/><circle cx="229.7" cy="307.0" r="2.6" fill="#c46232" opacity="0.55"/><circle cx="299.0" cy="359.1" r="1.0" fill="#c46232" opacity="0.61"/><circle cx="221.6" cy="289.6" r="2.2" fill="#c46232" opacity="0.71"/><circle cx="434.3" cy="260.8" r="1.3" fill="#c46232" opacity="0.77"/><circle cx="345.7" cy="144.8" r="1.3" fill="#c46232" opacity="0.38"/><circle cx="433.0" cy="243.9" r="1.9" fill="#c46232" opacity="0.54"/><circle cx="255.8" cy="163.8" r="2.1" fill="#c46232" opacity="0.36"/><circle cx="331.1" cy="142.5" r="1.8" fill="#c46232" opacity="0.47"/><circle cx="291.9" cy="357.5" r="1.6" fill="#c46232" opacity="0.48"/><circle cx="320.5" cy="140.6" r="0.9" fill="#c46232" opacity="0.43"/><circle cx="215.4" cy="282.7" r="2.4" fill="#c46232" opacity="0.57"/><circle cx="435.7" cy="261.8" r="1.6" fill="#c46232" opacity="0.59"/><circle cx="295.1" cy="144.1" r="1.7" fill="#c46232" opacity="0.76"/><circle cx="241.4" cy="324.0" r="2.3" fill="#c46232" opacity="0.40"/><circle cx="291.6" cy="359.3" r="0.9" fill="#c46232" opacity="0.72"/><circle cx="286.5" cy="148.1" r="1.3" fill="#c46232" opacity="0.69"/><circle cx="415.7" cy="193.9" r="1.7" fill="#c46232" opacity="0.57"/><circle cx="214.5" cy="253.2" r="1.1" fill="#c46232" opacity="0.59"/><circle cx="364.9" cy="151.7" r="1.2" fill="#c46232" opacity="0.71"/><circle cx="352.9" cy="143.9" r="0.8" fill="#c46232" opacity="0.66"/><circle cx="436.5" cy="236.4" r="2.1" fill="#c46232" opacity="0.32"/><circle cx="383.5" cy="160.5" r="2.0" fill="#c46232" opacity="0.78"/><circle cx="298.7" cy="146.3" r="1.3" fill="#c46232" opacity="0.76"/><circle cx="389.5" cy="341.4" r="1.5" fill="#c46232" opacity="0.38"/><circle cx="246.6" cy="176.7" r="1.0" fill="#c46232" opacity="0.49"/><circle cx="421.0" cy="298.7" r="1.8" fill="#c46232" opacity="0.67"/><circle cx="402.2" cy="176.7" r="1.6" fill="#c46232" opacity="0.46"/><circle cx="234.7" cy="186.6" r="2.5" fill="#c46232" opacity="0.49"/><circle cx="428.9" cy="289.9" r="1.1" fill="#c46232" opacity="0.62"/><circle cx="211.1" cy="247.5" r="1.8" fill="#c46232" opacity="0.61"/><circle cx="314.8" cy="362.0" r="1.3" fill="#c46232" opacity="0.68"/><circle cx="216.3" cy="240.1" r="1.2" fill="#c46232" opacity="0.49"/><circle cx="315.0" cy="143.4" r="2.1" fill="#c46232" opacity="0.63"/><circle cx="419.9" cy="308.5" r="1.0" fill="#c46232" opacity="0.36"/><circle cx="233.5" cy="191.0" r="2.4" fill="#c46232" opacity="0.54"/><circle cx="274.1" cy="352.2" r="0.9" fill="#c46232" opacity="0.66"/><circle cx="426.3" cy="287.5" r="2.5" fill="#c46232" opacity="0.64"/><circle cx="342.2" cy="358.3" r="2.6" fill="#c46232" opacity="0.63"/><circle cx="370.5" cy="153.7" r="1.9" fill="#c46232" opacity="0.48"/><circle cx="334.3" cy="360.6" r="1.9" fill="#c46232" opacity="0.47"/><circle cx="242.4" cy="322.8" r="2.3" fill="#c46232" opacity="0.62"/><circle cx="361.0" cy="147.9" r="2.3" fill="#c46232" opacity="0.56"/><circle cx="231.3" cy="190.6" r="2.1" fill="#c46232" opacity="0.50"/><circle cx="412.3" cy="313.2" r="1.2" fill="#c46232" opacity="0.32"/><circle cx="408.7" cy="180.8" r="2.2" fill="#c46232" opacity="0.30"/><circle cx="213.1" cy="272.6" r="1.9" fill="#c46232" opacity="0.51"/><circle cx="218.4" cy="274.8" r="1.1" fill="#c46232" opacity="0.38"/><circle cx="246.5" cy="329.4" r="2.4" fill="#c46232" opacity="0.38"/><circle cx="321.2" cy="360.7" r="1.1" fill="#c46232" opacity="0.44"/><circle cx="334.3" cy="361.5" r="0.9" fill="#c46232" opacity="0.76"/><circle cx="247.1" cy="334.6" r="2.0" fill="#c46232" opacity="0.64"/><circle cx="212.6" cy="271.6" r="1.0" fill="#c46232" opacity="0.63"/><circle cx="295.5" cy="359.4" r="2.1" fill="#c46232" opacity="0.38"/><circle cx="356.6" cy="354.2" r="1.2" fill="#c46232" opacity="0.34"/><circle cx="231.9" cy="317.6" r="1.5" fill="#c46232" opacity="0.46"/><circle cx="217.0" cy="273.4" r="2.1" fill="#c46232" opacity="0.66"/><circle cx="380.4" cy="344.8" r="2.0" fill="#c46232" opacity="0.77"/><circle cx="257.0" cy="164.2" r="2.6" fill="#c46232" opacity="0.30"/><circle cx="428.1" cy="293.5" r="1.5" fill="#c46232" opacity="0.32"/><circle cx="215.8" cy="217.6" r="1.7" fill="#c46232" opacity="0.48"/><circle cx="413.7" cy="311.6" r="2.4" fill="#c46232" opacity="0.55"/><circle cx="423.2" cy="209.2" r="1.2" fill="#c46232" opacity="0.33"/><circle cx="237.8" cy="316.5" r="1.3" fill="#c46232" opacity="0.50"/><circle cx="286.9" cy="352.8" r="0.9" fill="#c46232" opacity="0.79"/><circle cx="371.5" cy="351.4" r="1.5" fill="#c46232" opacity="0.57"/><circle cx="418.4" cy="306.9" r="1.0" fill="#c46232" opacity="0.57"/><circle cx="421.8" cy="198.9" r="2.3" fill="#c46232" opacity="0.41"/><circle cx="434.1" cy="263.7" r="1.7" fill="#c46232" opacity="0.59"/><circle cx="244.5" cy="329.5" r="2.1" fill="#c46232" opacity="0.76"/><circle cx="285.0" cy="354.7" r="2.3" fill="#c46232" opacity="0.41"/><circle cx="405.7" cy="324.3" r="1.0" fill="#c46232" opacity="0.69"/><circle cx="370.2" cy="152.5" r="1.0" fill="#c46232" opacity="0.34"/><circle cx="327.5" cy="359.5" r="1.6" fill="#c46232" opacity="0.59"/><circle cx="327.1" cy="359.4" r="2.1" fill="#c46232" opacity="0.32"/><circle cx="357.8" cy="355.4" r="1.5" fill="#c46232" opacity="0.35"/><circle cx="228.0" cy="303.9" r="2.2" fill="#c46232" opacity="0.58"/><circle cx="412.5" cy="183.9" r="2.2" fill="#c46232" opacity="0.59"/><circle cx="218.9" cy="291.5" r="2.0" fill="#c46232" opacity="0.78"/><circle cx="308.6" cy="141.0" r="1.3" fill="#c46232" opacity="0.71"/><circle cx="244.0" cy="324.5" r="0.9" fill="#c46232" opacity="0.38"/><circle cx="315.2" cy="362.8" r="1.3" fill="#c46232" opacity="0.33"/><circle cx="333.6" cy="141.2" r="0.8" fill="#c46232" opacity="0.33"/><circle cx="399.0" cy="331.6" r="2.3" fill="#c46232" opacity="0.77"/><circle cx="241.0" cy="181.1" r="1.6" fill="#c46232" opacity="0.48"/><circle cx="272.0" cy="345.7" r="1.9" fill="#c46232" opacity="0.71"/><circle cx="308.3" cy="144.7" r="1.8" fill="#c46232" opacity="0.39"/><circle cx="296.2" cy="145.0" r="2.5" fill="#c46232" opacity="0.70"/><circle cx="404.6" cy="325.6" r="2.4" fill="#c46232" opacity="0.53"/><circle cx="223.1" cy="295.9" r="2.2" fill="#c46232" opacity="0.77"/><circle cx="213.1" cy="228.6" r="1.9" fill="#c46232" opacity="0.35"/><circle cx="367.2" cy="150.4" r="0.9" fill="#c46232" opacity="0.79"/><circle cx="432.6" cy="274.4" r="1.7" fill="#c46232" opacity="0.74"/><circle cx="239.0" cy="319.5" r="1.3" fill="#c46232" opacity="0.40"/><circle cx="222.7" cy="209.7" r="2.2" fill="#c46232" opacity="0.42"/></g><g filter="url(#rough)"><circle cx="324.0" cy="251.6" r="106.5" fill="url(#ig)"/><path d="M302.3,276.5Q277.9,301.7 253.8,327.2" stroke="#e4864a" stroke-width="1.4" fill="none" opacity="0.67"/><path d="M342.5,275.7Q361.1,291.2 378.4,304.1" stroke="#4a1606" stroke-width="1.4" fill="none" opacity="0.60"/><path d="M356.8,231.1Q381.9,219.6 405.2,206.8" stroke="#e4864a" stroke-width="1.5" fill="none" opacity="0.83"/><path d="M300.5,271.1Q285.4,291.9 264.3,307.1" stroke="#4a1606" stroke-width="1.1" fill="none" opacity="0.61"/><path d="M355.3,255.7Q377.6,262.2 398.6,263.8" stroke="#c8622c" stroke-width="1.3" fill="none" opacity="0.83"/><path d="M285.8,230.3Q266.0,228.5 245.7,222.3" stroke="#4a1606" stroke-width="1.1" fill="none" opacity="0.84"/><path d="M360.9,255.0Q377.4,253.0 391.4,255.5" stroke="#c8622c" stroke-width="1.5" fill="none" opacity="0.85"/><path d="M354.6,237.3Q387.6,225.6 412.7,200.1" stroke="#4a1606" stroke-width="1.0" fill="none" opacity="0.51"/><path d="M357.3,271.9Q371.6,282.4 386.8,286.5" stroke="#e4864a" stroke-width="1.5" fill="none" opacity="0.75"/><path d="M291.1,253.3Q276.9,255.9 261.2,261.5" stroke="#4a1606" stroke-width="1.1" fill="none" opacity="0.84"/><path d="M305.6,219.6Q291.8,196.8 280.8,169.8" stroke="#e4864a" stroke-width="1.5" fill="none" opacity="0.69"/><path d="M351.7,274.2Q370.5,290.9 384.9,308.7" stroke="#4a1606" stroke-width="1.5" fill="none" opacity="0.57"/><path d="M310.6,281.2Q302.5,307.5 284.3,328.6" stroke="#e4864a" stroke-width="1.3" fill="none" opacity="0.61"/><path d="M301.5,219.4Q291.0,199.3 278.9,177.4" stroke="#4a1606" stroke-width="1.1" fill="none" opacity="0.58"/><path d="M285.1,253.9Q271.6,260.9 255.4,260.7" stroke="#c8622c" stroke-width="1.1" fill="none" opacity="0.56"/><path d="M349.5,274.4Q373.4,287.8 393.5,301.8" stroke="#4a1606" stroke-width="1.3" fill="none" opacity="0.73"/><path d="M307.8,214.0Q307.8,204.5 301.4,195.1" stroke="#d8703a" stroke-width="1.2" fill="none" opacity="0.85"/><path d="M296.8,217.5Q294.0,205.7 285.5,194.9" stroke="#4a1606" stroke-width="1.2" fill="none" opacity="0.54"/><path d="M333.1,279.9Q342.1,295.1 352.0,307.2" stroke="#d8703a" stroke-width="1.5" fill="none" opacity="0.70"/><path d="M304.7,285.2Q297.4,297.3 287.4,307.0" stroke="#4a1606" stroke-width="1.3" fill="none" opacity="0.80"/><path d="M345.6,225.0Q365.0,201.3 382.5,176.2" stroke="#d8703a" stroke-width="1.4" fill="none" opacity="0.79"/><path d="M320.6,219.0Q321.0,197.9 321.7,175.1" stroke="#4a1606" stroke-width="0.9" fill="none" opacity="0.71"/><path d="M295.1,277.1Q276.7,287.7 259.2,299.9" stroke="#d8703a" stroke-width="1.4" fill="none" opacity="0.88"/><path d="M314.9,220.7Q316.4,189.3 316.7,156.6" stroke="#4a1606" stroke-width="1.0" fill="none" opacity="0.62"/><path d="M347.7,281.8Q365.2,300.9 373.1,324.1" stroke="#d8703a" stroke-width="1.2" fill="none" opacity="0.67"/><path d="M342.9,220.4Q349.9,210.9 357.6,201.5" stroke="#4a1606" stroke-width="1.3" fill="none" opacity="0.53"/><path d="M317.9,280.9Q312.1,305.9 301.3,328.3" stroke="#c8622c" stroke-width="1.8" fill="none" opacity="0.64"/><path d="M291.8,259.3Q279.4,265.3 263.3,263.7" stroke="#4a1606" stroke-width="1.4" fill="none" opacity="0.51"/><path d="M283.7,234.2Q259.5,225.1 229.3,226.7" stroke="#d8703a" stroke-width="1.9" fill="none" opacity="0.70"/><path d="M291.5,255.5Q273.2,255.6 253.2,253.8" stroke="#4a1606" stroke-width="1.2" fill="none" opacity="0.52"/><path d="M291.3,274.6Q275.7,284.9 261.6,298.4" stroke="#e4864a" stroke-width="1.5" fill="none" opacity="0.76"/><path d="M329.5,284.2Q331.6,314.3 334.6,342.3" stroke="#4a1606" stroke-width="1.1" fill="none" opacity="0.81"/><path d="M361.6,253.7Q376.7,253.7 389.6,254.4" stroke="#d8703a" stroke-width="1.3" fill="none" opacity="0.89"/><path d="M354.6,248.8Q378.8,247.3 400.9,243.1" stroke="#4a1606" stroke-width="1.0" fill="none" opacity="0.73"/><path d="M344.9,272.4Q366.8,287.0 387.5,298.7" stroke="#c8622c" stroke-width="1.8" fill="none" opacity="0.62"/><path d="M361.7,254.6Q394.8,257.4 425.1,266.6" stroke="#4a1606" stroke-width="1.0" fill="none" opacity="0.82"/><path d="M350.1,238.4Q367.9,231.1 384.9,224.8" stroke="#e4864a" stroke-width="1.3" fill="none" opacity="0.82"/><path d="M342.9,279.6Q365.6,307.3 377.9,339.2" stroke="#4a1606" stroke-width="0.9" fill="none" opacity="0.73"/><path d="M297.7,274.3Q280.5,288.8 266.0,306.7" stroke="#d8703a" stroke-width="1.9" fill="none" opacity="0.60"/><path d="M352.0,253.3Q376.7,256.4 399.7,253.6" stroke="#4a1606" stroke-width="0.8" fill="none" opacity="0.51"/><path d="M329.9,281.8Q343.0,310.5 353.3,337.7" stroke="#e4864a" stroke-width="1.1" fill="none" opacity="0.79"/><path d="M351.3,223.8Q367.1,207.8 385.4,194.7" stroke="#4a1606" stroke-width="0.9" fill="none" opacity="0.82"/><path d="M291.7,236.1Q270.3,226.9 248.1,213.8" stroke="#c8622c" stroke-width="1.2" fill="none" opacity="0.61"/><path d="M350.1,237.2Q374.8,231.0 397.8,224.5" stroke="#4a1606" stroke-width="1.1" fill="none" opacity="0.82"/><path d="M310.9,284.9Q308.8,316.2 305.5,346.0" stroke="#c8622c" stroke-width="0.9" fill="none" opacity="0.75"/><path d="M294.1,237.6Q267.8,227.0 235.9,224.6" stroke="#4a1606" stroke-width="1.1" fill="none" opacity="0.62"/><path d="M336.2,217.1Q339.5,203.8 342.4,189.7" stroke="#d8703a" stroke-width="1.5" fill="none" opacity="0.69"/><path d="M299.3,226.2Q290.4,212.5 282.1,195.4" stroke="#4a1606" stroke-width="1.5" fill="none" opacity="0.56"/><path d="M341.9,273.3Q366.6,295.8 382.5,322.7" stroke="#d8703a" stroke-width="1.6" fill="none" opacity="0.76"/><path d="M304.6,216.4Q300.6,209.1 295.3,199.8" stroke="#4a1606" stroke-width="1.2" fill="none" opacity="0.65"/><path d="M289.8,233.0Q270.0,218.7 247.3,204.5" stroke="#e4864a" stroke-width="1.0" fill="none" opacity="0.57"/><path d="M285.4,259.3Q258.1,270.1 226.5,269.2" stroke="#4a1606" stroke-width="1.3" fill="none" opacity="0.80"/><path d="M350.4,276.8Q367.2,284.8 377.8,296.2" stroke="#c8622c" stroke-width="1.4" fill="none" opacity="0.87"/><path d="M290.9,256.8Q275.0,261.1 258.9,271.2" stroke="#4a1606" stroke-width="1.0" fill="none" opacity="0.53"/><path d="M303.4,274.7Q289.6,293.6 275.0,311.7" stroke="#d8703a" stroke-width="1.1" fill="none" opacity="0.87"/><path d="M339.4,281.5Q362.5,308.3 377.1,337.5" stroke="#4a1606" stroke-width="1.1" fill="none" opacity="0.70"/><path d="M280.6,249.3Q269.5,255.5 256.2,256.1" stroke="#e4864a" stroke-width="1.7" fill="none" opacity="0.84"/><path d="M313.5,280.1Q308.8,299.9 308.2,319.7" stroke="#4a1606" stroke-width="1.0" fill="none" opacity="0.72"/><path d="M295.7,217.9Q291.6,210.4 288.2,199.3" stroke="#d8703a" stroke-width="1.8" fill="none" opacity="0.65"/><path d="M323.2,217.9Q323.8,188.7 328.7,158.0" stroke="#4a1606" stroke-width="1.1" fill="none" opacity="0.77"/><path d="M354.6,273.7Q382.5,289.0 407.2,304.6" stroke="#c8622c" stroke-width="1.3" fill="none" opacity="0.85"/><path d="M353.0,262.9Q367.7,275.8 381.0,285.4" stroke="#4a1606" stroke-width="1.5" fill="none" opacity="0.68"/><path d="M349.8,271.3Q367.0,280.3 383.9,284.6" stroke="#c8622c" stroke-width="1.6" fill="none" opacity="0.79"/><path d="M306.7,280.8Q305.6,295.8 298.8,307.7" stroke="#4a1606" stroke-width="1.0" fill="none" opacity="0.72"/><path d="M353.3,271.3Q378.7,283.2 399.1,298.6" stroke="#c8622c" stroke-width="1.5" fill="none" opacity="0.89"/><path d="M292.8,264.2Q271.5,274.0 246.5,277.2" stroke="#4a1606" stroke-width="1.3" fill="none" opacity="0.82"/><path d="M303.8,285.3Q302.8,308.8 295.0,328.7" stroke="#e4864a" stroke-width="1.4" fill="none" opacity="0.71"/><path d="M354.1,231.7Q375.2,222.4 391.5,206.7" stroke="#4a1606" stroke-width="1.0" fill="none" opacity="0.66"/><path d="M324.0,212.8Q325.7,200.9 321.3,187.5" stroke="#e4864a" stroke-width="1.7" fill="none" opacity="0.71"/><path d="M325.3,282.8Q330.0,311.6 326.7,339.1" stroke="#4a1606" stroke-width="1.2" fill="none" opacity="0.74"/><path d="M333.5,216.1Q345.2,202.2 355.1,187.0" stroke="#e4864a" stroke-width="1.0" fill="none" opacity="0.80"/><path d="M350.2,277.2Q363.1,292.1 375.3,304.2" stroke="#4a1606" stroke-width="1.2" fill="none" opacity="0.81"/><path d="M351.2,233.8Q370.9,226.1 392.0,224.0" stroke="#c8622c" stroke-width="1.2" fill="none" opacity="0.68"/><path d="M326.8,216.9Q331.6,202.0 343.1,187.4" stroke="#4a1606" stroke-width="1.2" fill="none" opacity="0.56"/><path d="M356.1,242.1Q376.3,242.9 394.4,242.7" stroke="#c8622c" stroke-width="1.2" fill="none" opacity="0.81"/><path d="M283.5,248.8Q261.6,249.6 238.4,240.7" stroke="#4a1606" stroke-width="1.2" fill="none" opacity="0.50"/><path d="M332.0,212.0Q336.7,184.9 334.6,155.7" stroke="#c8622c" stroke-width="1.9" fill="none" opacity="0.81"/><path d="M337.6,278.0Q351.0,301.4 359.8,324.6" stroke="#4a1606" stroke-width="0.9" fill="none" opacity="0.65"/><path d="M346.7,221.4Q364.6,195.8 382.2,169.8" stroke="#d8703a" stroke-width="1.6" fill="none" opacity="0.73"/><path d="M291.1,263.4Q266.6,277.0 241.3,291.5" stroke="#4a1606" stroke-width="1.4" fill="none" opacity="0.66"/><path d="M310.0,221.7Q304.6,205.1 303.8,184.6" stroke="#d8703a" stroke-width="1.4" fill="none" opacity="0.62"/><path d="M333.8,279.8Q344.5,313.8 348.5,347.4" stroke="#4a1606" stroke-width="1.0" fill="none" opacity="0.53"/><path d="M326.6,211.9Q332.2,189.9 333.5,165.9" stroke="#e4864a" stroke-width="1.6" fill="none" opacity="0.85"/><path d="M299.6,229.7Q277.9,206.5 262.2,174.7" stroke="#4a1606" stroke-width="0.9" fill="none" opacity="0.62"/><path d="M349.8,270.3Q366.0,275.4 377.3,283.5" stroke="#c8622c" stroke-width="1.0" fill="none" opacity="0.62"/><path d="M346.0,224.9Q364.6,202.0 379.9,176.6" stroke="#4a1606" stroke-width="1.0" fill="none" opacity="0.55"/><path d="M347.7,231.3Q376.9,210.5 402.2,185.8" stroke="#d8703a" stroke-width="1.6" fill="none" opacity="0.85"/><path d="M306.0,214.3Q302.8,186.3 296.2,157.6" stroke="#4a1606" stroke-width="1.1" fill="none" opacity="0.73"/><path d="M299.9,216.0Q285.4,198.5 273.1,176.4" stroke="#c8622c" stroke-width="1.5" fill="none" opacity="0.80"/><path d="M342.5,227.3Q367.6,205.9 398.1,191.0" stroke="#4a1606" stroke-width="1.3" fill="none" opacity="0.75"/><path d="M285.7,266.3Q267.4,280.0 248.7,295.0" stroke="#e4864a" stroke-width="1.3" fill="none" opacity="0.59"/><path d="M358.6,251.4Q393.2,256.2 425.0,266.3" stroke="#4a1606" stroke-width="1.5" fill="none" opacity="0.53"/><path d="M339.6,274.4Q348.6,289.7 357.9,301.9" stroke="#c8622c" stroke-width="1.2" fill="none" opacity="0.75"/><path d="M347.6,227.7Q374.2,205.3 399.5,182.1" stroke="#4a1606" stroke-width="1.2" fill="none" opacity="0.84"/><path d="M357.6,253.7Q372.9,258.7 386.7,258.4" stroke="#c8622c" stroke-width="1.1" fill="none" opacity="0.78"/><path d="M296.2,232.6Q271.8,219.4 246.6,202.7" stroke="#4a1606" stroke-width="1.5" fill="none" opacity="0.77"/><path d="M308.1,285.5Q308.1,299.9 300.4,310.7" stroke="#e4864a" stroke-width="1.8" fill="none" opacity="0.79"/><path d="M352.8,268.3Q384.1,281.5 412.9,293.9" stroke="#4a1606" stroke-width="1.1" fill="none" opacity="0.72"/><path d="M284.6,231.7Q271.8,218.7 255.5,207.0" stroke="#e4864a" stroke-width="1.2" fill="none" opacity="0.88"/><path d="M313.9,280.1Q309.7,302.1 294.9,319.5" stroke="#4a1606" stroke-width="1.1" fill="none" opacity="0.57"/><path d="M307.2,217.7Q305.2,206.3 304.8,192.1" stroke="#e4864a" stroke-width="1.9" fill="none" opacity="0.80"/><path d="M355.7,234.3Q384.6,220.7 411.0,204.5" stroke="#4a1606" stroke-width="1.5" fill="none" opacity="0.68"/><path d="M291.0,247.4Q268.2,244.1 244.2,234.9" stroke="#d8703a" stroke-width="1.5" fill="none" opacity="0.69"/><path d="M293.7,264.1Q274.1,274.5 250.3,277.8" stroke="#4a1606" stroke-width="1.1" fill="none" opacity="0.71"/><path d="M294.9,232.7Q276.6,223.1 261.2,204.5" stroke="#d8703a" stroke-width="1.5" fill="none" opacity="0.79"/><path d="M361.2,262.1Q378.5,265.9 393.6,268.2" stroke="#4a1606" stroke-width="1.0" fill="none" opacity="0.65"/><path d="M310.9,286.7Q301.6,307.6 288.1,325.6" stroke="#c8622c" stroke-width="1.7" fill="none" opacity="0.77"/><path d="M340.5,223.7Q355.7,205.4 366.1,183.8" stroke="#4a1606" stroke-width="0.9" fill="none" opacity="0.81"/><path d="M294.9,278.6Q272.9,300.0 244.7,314.8" stroke="#c8622c" stroke-width="1.9" fill="none" opacity="0.60"/><path d="M321.4,211.3Q318.3,193.0 317.1,172.8" stroke="#4a1606" stroke-width="1.1" fill="none" opacity="0.83"/><path d="M295.0,269.1Q275.0,285.8 254.4,303.0" stroke="#c8622c" stroke-width="1.0" fill="none" opacity="0.68"/><path d="M333.1,280.3Q338.4,304.1 345.9,325.1" stroke="#4a1606" stroke-width="1.3" fill="none" opacity="0.51"/><path d="M349.7,274.0Q363.0,282.2 373.4,290.0" stroke="#d8703a" stroke-width="0.9" fill="none" opacity="0.72"/><path d="M316.7,285.9Q315.8,299.1 320.5,311.6" stroke="#4a1606" stroke-width="1.4" fill="none" opacity="0.58"/><path d="M292.8,258.3Q278.6,263.6 264.8,274.9" stroke="#c8622c" stroke-width="1.0" fill="none" opacity="0.86"/><path d="M295.9,220.7Q281.9,196.7 260.1,175.7" stroke="#4a1606" stroke-width="1.1" fill="none" opacity="0.62"/><path d="M288.7,270.9Q278.5,283.7 264.3,292.0" stroke="#c8622c" stroke-width="1.7" fill="none" opacity="0.82"/><path d="M289.8,256.2Q277.6,256.9 263.8,258.3" stroke="#4a1606" stroke-width="1.6" fill="none" opacity="0.58"/><path d="M306.2,223.2Q293.8,204.8 287.4,180.1" stroke="#d8703a" stroke-width="1.0" fill="none" opacity="0.58"/><path d="M322.6,284.4Q322.1,319.8 326.2,353.6" stroke="#4a1606" stroke-width="1.4" fill="none" opacity="0.71"/><path d="M306.8,281.2Q297.1,298.0 289.4,315.4" stroke="#e4864a" stroke-width="1.2" fill="none" opacity="0.60"/><path d="M359.0,252.1Q376.7,248.9 392.1,244.6" stroke="#4a1606" stroke-width="1.0" fill="none" opacity="0.57"/><path d="M303.0,218.2Q296.1,205.4 292.2,188.1" stroke="#d8703a" stroke-width="1.0" fill="none" opacity="0.76"/><path d="M311.2,212.8Q311.8,193.3 310.8,172.3" stroke="#4a1606" stroke-width="1.4" fill="none" opacity="0.53"/><path d="M335.8,282.8Q348.7,305.6 365.8,323.4" stroke="#c8622c" stroke-width="1.5" fill="none" opacity="0.88"/><path d="M352.1,248.4Q367.9,244.8 381.9,242.3" stroke="#4a1606" stroke-width="1.4" fill="none" opacity="0.63"/><path d="M343.2,215.8Q353.4,195.8 365.3,176.3" stroke="#e4864a" stroke-width="1.5" fill="none" opacity="0.62"/><path d="M355.0,274.6Q364.9,280.4 371.2,286.9" stroke="#4a1606" stroke-width="0.8" fill="none" opacity="0.59"/><path d="M340.4,279.6Q364.5,305.4 387.6,328.5" stroke="#e4864a" stroke-width="1.0" fill="none" opacity="0.64"/><path d="M289.1,224.9Q270.8,209.0 246.2,196.9" stroke="#4a1606" stroke-width="0.9" fill="none" opacity="0.64"/><path d="M356.6,245.4Q390.9,252.2 423.0,254.0" stroke="#d8703a" stroke-width="1.7" fill="none" opacity="0.88"/><path d="M298.8,230.1Q281.7,215.1 265.2,195.6" stroke="#4a1606" stroke-width="1.3" fill="none" opacity="0.63"/><path d="M294.2,225.0Q281.4,205.1 266.6,183.8" stroke="#e4864a" stroke-width="1.8" fill="none" opacity="0.87"/><path d="M285.9,234.1Q266.4,224.0 240.9,221.7" stroke="#4a1606" stroke-width="1.1" fill="none" opacity="0.67"/><path d="M340.9,224.1Q361.3,200.0 379.7,174.3" stroke="#e4864a" stroke-width="1.5" fill="none" opacity="0.90"/><path d="M304.8,284.5Q294.3,315.3 290.9,348.1" stroke="#4a1606" stroke-width="1.3" fill="none" opacity="0.69"/><path d="M331.9,210.9Q337.6,200.9 339.7,188.8" stroke="#e4864a" stroke-width="1.0" fill="none" opacity="0.59"/><path d="M359.5,261.4Q390.0,267.8 417.1,277.9" stroke="#4a1606" stroke-width="0.9" fill="none" opacity="0.51"/><path d="M330.4,215.8Q343.2,184.9 349.4,151.3" stroke="#c8622c" stroke-width="1.6" fill="none" opacity="0.89"/><path d="M286.1,251.5Q262.2,257.4 235.8,253.4" stroke="#4a1606" stroke-width="1.6" fill="none" opacity="0.61"/><path d="M291.5,250.1Q275.4,249.9 257.8,242.6" stroke="#c8622c" stroke-width="1.1" fill="none" opacity="0.78"/><path d="M293.1,260.7Q271.1,269.5 245.1,269.3" stroke="#4a1606" stroke-width="1.1" fill="none" opacity="0.58"/><path d="M290.9,263.2Q266.9,280.8 240.5,295.6" stroke="#d8703a" stroke-width="1.8" fill="none" opacity="0.67"/><path d="M322.0,283.5Q327.5,311.7 324.7,338.5" stroke="#4a1606" stroke-width="1.2" fill="none" opacity="0.59"/><path d="M346.4,281.0Q354.5,292.7 363.8,300.3" stroke="#e4864a" stroke-width="1.8" fill="none" opacity="0.63"/><path d="M307.2,278.6Q298.3,300.3 284.9,318.9" stroke="#4a1606" stroke-width="0.9" fill="none" opacity="0.79"/><path d="M287.8,244.5Q275.8,248.2 262.0,249.7" stroke="#e4864a" stroke-width="1.4" fill="none" opacity="0.87"/><path d="M348.6,232.6Q379.9,213.6 411.6,196.6" stroke="#4a1606" stroke-width="0.9" fill="none" opacity="0.65"/><path d="M286.9,245.4Q271.2,241.0 254.4,232.1" stroke="#c8622c" stroke-width="1.4" fill="none" opacity="0.58"/><path d="M353.3,248.4Q382.0,250.0 408.8,251.1" stroke="#4a1606" stroke-width="1.1" fill="none" opacity="0.57"/><path d="M305.3,218.5Q295.5,200.1 278.9,183.1" stroke="#d8703a" stroke-width="1.0" fill="none" opacity="0.69"/><path d="M360.0,252.4Q379.8,251.3 397.5,250.1" stroke="#4a1606" stroke-width="1.2" fill="none" opacity="0.57"/><path d="M343.5,221.4Q352.6,212.5 353.9,198.2" stroke="#e4864a" stroke-width="1.4" fill="none" opacity="0.90"/><path d="M287.3,265.7Q273.6,281.9 256.9,294.3" stroke="#4a1606" stroke-width="1.0" fill="none" opacity="0.68"/><path d="M343.9,226.9Q363.0,215.7 378.1,200.9" stroke="#c8622c" stroke-width="1.1" fill="none" opacity="0.71"/><path d="M354.3,225.1Q371.9,214.3 392.1,208.4" stroke="#4a1606" stroke-width="1.6" fill="none" opacity="0.80"/><path d="M281.6,254.4Q267.9,254.8 252.4,248.4" stroke="#c8622c" stroke-width="1.7" fill="none" opacity="0.88"/><path d="M317.5,219.4Q320.8,200.8 317.3,181.1" stroke="#4a1606" stroke-width="1.3" fill="none" opacity="0.51"/><path d="M302.3,277.9Q296.9,293.7 291.0,308.6" stroke="#c8622c" stroke-width="1.5" fill="none" opacity="0.70"/><path d="M338.8,222.0Q353.3,211.7 361.9,197.2" stroke="#4a1606" stroke-width="1.1" fill="none" opacity="0.52"/><path d="M328.9,209.7Q337.4,193.8 337.7,175.2" stroke="#e4864a" stroke-width="1.6" fill="none" opacity="0.70"/><path d="M333.2,280.7Q340.9,296.4 354.2,307.1" stroke="#4a1606" stroke-width="1.6" fill="none" opacity="0.62"/><path d="M293.6,267.4Q271.4,287.4 244.0,300.9" stroke="#d8703a" stroke-width="1.7" fill="none" opacity="0.66"/><path d="M352.7,268.7Q386.8,280.6 417.7,293.0" stroke="#4a1606" stroke-width="1.1" fill="none" opacity="0.74"/><path d="M324.9,218.1Q331.0,202.6 327.9,184.6" stroke="#c8622c" stroke-width="1.8" fill="none" opacity="0.77"/><path d="M288.6,229.0Q266.9,220.3 242.8,211.0" stroke="#4a1606" stroke-width="0.9" fill="none" opacity="0.51"/><path d="M309.0,218.7Q297.5,207.1 287.8,192.0" stroke="#e4864a" stroke-width="1.5" fill="none" opacity="0.88"/><path d="M306.3,212.5Q305.3,203.1 300.1,193.0" stroke="#4a1606" stroke-width="1.4" fill="none" opacity="0.74"/><path d="M355.6,246.4Q385.1,241.2 412.3,233.6" stroke="#d8703a" stroke-width="1.0" fill="none" opacity="0.84"/><path d="M313.3,286.4Q312.9,315.3 307.8,342.1" stroke="#4a1606" stroke-width="1.1" fill="none" opacity="0.84"/><path d="M302.4,220.2Q290.8,201.9 281.5,179.3" stroke="#d8703a" stroke-width="1.7" fill="none" opacity="0.58"/><path d="M349.7,271.2Q375.6,284.8 399.8,295.8" stroke="#4a1606" stroke-width="0.9" fill="none" opacity="0.81"/><path d="M358.2,258.5Q377.7,263.7 393.9,271.8" stroke="#e4864a" stroke-width="1.7" fill="none" opacity="0.77"/><path d="M336.0,288.9Q342.8,314.9 354.8,336.9" stroke="#4a1606" stroke-width="0.9" fill="none" opacity="0.60"/><path d="M295.8,223.6Q282.3,219.0 269.1,210.2" stroke="#c8622c" stroke-width="1.7" fill="none" opacity="0.63"/><path d="M303.1,216.6Q294.1,206.1 280.0,196.4" stroke="#4a1606" stroke-width="1.4" fill="none" opacity="0.71"/><path d="M354.6,246.8Q385.9,245.6 415.0,240.7" stroke="#c8622c" stroke-width="1.0" fill="none" opacity="0.60"/><path d="M287.7,253.3Q263.2,258.3 236.1,250.4" stroke="#4a1606" stroke-width="0.9" fill="none" opacity="0.80"/><path d="M300.4,226.9Q293.9,217.4 287.1,204.9" stroke="#c8622c" stroke-width="1.5" fill="none" opacity="0.71"/><path d="M287.2,254.4Q272.4,255.6 255.6,253.2" stroke="#4a1606" stroke-width="1.6" fill="none" opacity="0.84"/><path d="M350.2,276.5Q371.8,302.8 392.3,326.5" stroke="#d8703a" stroke-width="1.1" fill="none" opacity="0.83"/><path d="M281.7,241.5Q268.7,237.2 253.4,232.8" stroke="#4a1606" stroke-width="1.6" fill="none" opacity="0.62"/><path d="M297.8,270.1Q278.3,291.2 263.7,317.7" stroke="#d8703a" stroke-width="1.0" fill="none" opacity="0.86"/><path d="M353.0,233.1Q381.7,219.8 406.9,202.3" stroke="#4a1606" stroke-width="1.0" fill="none" opacity="0.85"/><path d="M354.8,269.1Q387.9,281.1 415.8,297.9" stroke="#c8622c" stroke-width="1.8" fill="none" opacity="0.76"/><path d="M329.0,286.7Q339.4,319.5 340.2,352.3" stroke="#4a1606" stroke-width="1.0" fill="none" opacity="0.72"/><path d="M350.7,258.9Q374.8,265.2 397.3,268.3" stroke="#d8703a" stroke-width="1.4" fill="none" opacity="0.58"/><path d="M344.0,226.7Q366.8,204.5 378.5,173.7" stroke="#4a1606" stroke-width="0.9" fill="none" opacity="0.51"/><path d="M302.8,287.1Q289.2,311.0 280.6,337.1" stroke="#d8703a" stroke-width="1.4" fill="none" opacity="0.63"/><path d="M292.6,257.3Q277.1,267.7 258.0,271.2" stroke="#4a1606" stroke-width="0.9" fill="none" opacity="0.57"/><path d="M308.1,279.6Q293.9,312.1 278.5,343.5" stroke="#d8703a" stroke-width="1.9" fill="none" opacity="0.89"/><path d="M336.4,279.0Q352.7,306.5 367.6,332.1" stroke="#4a1606" stroke-width="1.3" fill="none" opacity="0.60"/><path d="M295.1,231.9Q282.2,223.6 268.0,212.7" stroke="#d8703a" stroke-width="1.0" fill="none" opacity="0.87"/><path d="M319.5,284.0Q318.6,299.8 323.0,314.5" stroke="#4a1606" stroke-width="1.1" fill="none" opacity="0.79"/><path d="M359.9,244.3Q375.3,240.9 389.5,240.3" stroke="#d8703a" stroke-width="1.7" fill="none" opacity="0.57"/><path d="M362.7,242.4Q386.2,247.6 407.2,249.3" stroke="#4a1606" stroke-width="1.6" fill="none" opacity="0.82"/><path d="M352.9,243.9Q370.9,243.2 387.3,244.0" stroke="#d8703a" stroke-width="1.8" fill="none" opacity="0.88"/><path d="M351.6,236.0Q385.6,226.1 414.7,207.7" stroke="#4a1606" stroke-width="1.2" fill="none" opacity="0.69"/><path d="M319.9,289.0Q315.7,308.0 310.8,325.3" stroke="#c8622c" stroke-width="1.8" fill="none" opacity="0.57"/><path d="M304.4,277.6Q294.7,289.5 283.8,300.3" stroke="#4a1606" stroke-width="1.4" fill="none" opacity="0.70"/><path d="M305.9,282.3Q299.2,313.8 291.3,343.7" stroke="#c8622c" stroke-width="1.6" fill="none" opacity="0.69"/><path d="M325.8,219.3Q335.4,191.6 344.7,162.8" stroke="#4a1606" stroke-width="1.5" fill="none" opacity="0.57"/><path d="M292.4,264.7Q264.9,277.8 233.0,283.0" stroke="#c8622c" stroke-width="1.7" fill="none" opacity="0.75"/><path d="M320.7,281.2Q327.4,301.8 329.3,320.9" stroke="#4a1606" stroke-width="1.4" fill="none" opacity="0.57"/><path d="M340.7,282.5Q346.0,297.3 349.8,310.2" stroke="#c8622c" stroke-width="1.6" fill="none" opacity="0.81"/><path d="M318.2,284.9Q315.8,306.3 318.4,326.9" stroke="#4a1606" stroke-width="1.1" fill="none" opacity="0.78"/><path d="M300.9,227.3Q292.4,213.7 279.2,200.9" stroke="#d8703a" stroke-width="1.4" fill="none" opacity="0.64"/><path d="M339.8,279.2Q361.7,304.7 377.0,331.7" stroke="#4a1606" stroke-width="1.4" fill="none" opacity="0.53"/><path d="M303.2,283.0Q288.2,308.0 271.8,331.7" stroke="#e4864a" stroke-width="1.8" fill="none" opacity="0.76"/><path d="M294.5,274.3Q280.9,293.5 267.5,313.2" stroke="#4a1606" stroke-width="1.2" fill="none" opacity="0.57"/><path d="M284.5,264.1Q265.9,277.8 243.9,286.8" stroke="#e4864a" stroke-width="1.3" fill="none" opacity="0.55"/><path d="M339.1,276.1Q358.6,303.5 379.1,327.2" stroke="#4a1606" stroke-width="1.5" fill="none" opacity="0.55"/><path d="M346.6,227.9Q368.9,211.7 382.4,187.2" stroke="#e4864a" stroke-width="1.6" fill="none" opacity="0.64"/><path d="M286.6,252.0Q271.8,253.9 255.9,262.5" stroke="#4a1606" stroke-width="0.8" fill="none" opacity="0.55"/><path d="M319.6,215.6Q326.1,200.9 325.2,184.6" stroke="#d8703a" stroke-width="1.8" fill="none" opacity="0.89"/><path d="M292.2,220.7Q277.3,207.8 268.0,185.9" stroke="#4a1606" stroke-width="1.3" fill="none" opacity="0.59"/><path d="M344.4,215.9Q358.5,195.5 372.9,174.9" stroke="#d8703a" stroke-width="1.0" fill="none" opacity="0.80"/><path d="M361.3,247.2Q389.0,247.6 414.5,243.5" stroke="#4a1606" stroke-width="1.5" fill="none" opacity="0.67"/><path d="M350.3,264.3Q380.5,287.2 411.6,303.5" stroke="#d8703a" stroke-width="1.0" fill="none" opacity="0.58"/><path d="M319.4,290.3Q314.1,305.1 310.3,318.6" stroke="#4a1606" stroke-width="1.3" fill="none" opacity="0.67"/><path d="M334.5,221.8Q346.0,191.5 357.8,160.6" stroke="#d8703a" stroke-width="1.9" fill="none" opacity="0.83"/><path d="M347.1,278.6Q366.6,303.1 390.7,320.3" stroke="#4a1606" stroke-width="1.6" fill="none" opacity="0.52"/><path d="M297.6,225.5Q286.1,209.0 268.7,194.5" stroke="#e4864a" stroke-width="1.7" fill="none" opacity="0.72"/><path d="M304.1,280.4Q300.1,297.2 292.4,311.6" stroke="#4a1606" stroke-width="1.5" fill="none" opacity="0.82"/><path d="M333.1,284.6Q334.6,299.3 334.1,312.2" stroke="#c8622c" stroke-width="1.4" fill="none" opacity="0.65"/><path d="M281.4,241.2Q259.5,238.4 234.8,239.1" stroke="#4a1606" stroke-width="1.3" fill="none" opacity="0.63"/><path d="M305.6,219.6Q295.1,194.3 276.4,170.6" stroke="#c8622c" stroke-width="1.8" fill="none" opacity="0.55"/><path d="M309.8,279.2Q297.3,313.4 289.4,348.5" stroke="#4a1606" stroke-width="1.1" fill="none" opacity="0.64"/><path d="M322.7,286.8Q319.7,320.6 310.1,352.2" stroke="#e4864a" stroke-width="1.3" fill="none" opacity="0.59"/><path d="M344.9,279.4Q351.7,298.6 360.3,313.6" stroke="#4a1606" stroke-width="1.3" fill="none" opacity="0.60"/><path d="M324.1,216.0Q329.0,185.7 327.6,153.6" stroke="#d8703a" stroke-width="1.6" fill="none" opacity="0.81"/><path d="M304.6,276.6Q294.4,296.0 274.2,307.6" stroke="#4a1606" stroke-width="1.0" fill="none" opacity="0.61"/><path d="M284.4,264.8Q277.5,277.4 266.2,283.3" stroke="#c8622c" stroke-width="1.5" fill="none" opacity="0.70"/><path d="M289.5,242.4Q266.9,235.7 240.4,234.8" stroke="#4a1606" stroke-width="1.4" fill="none" opacity="0.60"/><path d="M345.0,227.7Q363.6,215.2 383.0,204.5" stroke="#d8703a" stroke-width="1.7" fill="none" opacity="0.60"/><path d="M336.3,220.9Q348.8,210.1 356.8,196.2" stroke="#4a1606" stroke-width="1.0" fill="none" opacity="0.63"/><path d="M318.7,216.6Q320.0,195.8 328.6,173.3" stroke="#d8703a" stroke-width="1.8" fill="none" opacity="0.90"/><path d="M323.0,282.4Q325.3,306.8 334.5,329.0" stroke="#4a1606" stroke-width="1.3" fill="none" opacity="0.79"/><path d="M286.1,251.9Q255.8,262.1 223.6,269.3" stroke="#e4864a" stroke-width="1.7" fill="none" opacity="0.60"/><path d="M315.9,210.4Q311.6,184.8 303.6,158.0" stroke="#4a1606" stroke-width="1.5" fill="none" opacity="0.69"/><path d="M293.2,264.6Q266.8,283.3 241.0,304.8" stroke="#c8622c" stroke-width="1.4" fill="none" opacity="0.71"/><path d="M296.5,222.6Q289.2,204.0 277.2,186.1" stroke="#4a1606" stroke-width="1.4" fill="none" opacity="0.75"/><path d="M315.7,218.3Q308.7,197.3 302.4,174.0" stroke="#d8703a" stroke-width="1.1" fill="none" opacity="0.67"/><path d="M335.9,282.7Q350.8,299.5 361.0,315.8" stroke="#4a1606" stroke-width="1.3" fill="none" opacity="0.74"/><path d="M294.3,271.4Q280.4,280.2 267.6,291.7" stroke="#e4864a" stroke-width="1.5" fill="none" opacity="0.55"/><path d="M318.4,284.7Q319.3,299.5 326.0,312.9" stroke="#4a1606" stroke-width="1.3" fill="none" opacity="0.70"/><path d="M307.0,212.5Q298.7,193.0 289.7,171.4" stroke="#c8622c" stroke-width="1.1" fill="none" opacity="0.84"/><path d="M300.7,223.3Q285.2,203.2 262.9,185.6" stroke="#4a1606" stroke-width="1.2" fill="none" opacity="0.70"/><path d="M360.3,264.2Q390.6,277.3 416.3,294.9" stroke="#e4864a" stroke-width="1.0" fill="none" opacity="0.60"/><path d="M362.2,238.6Q389.9,224.9 417.7,215.6" stroke="#4a1606" stroke-width="1.0" fill="none" opacity="0.68"/><path d="M351.7,224.6Q359.9,218.2 363.2,207.6" stroke="#c8622c" stroke-width="1.8" fill="none" opacity="0.70"/><path d="M347.5,274.2Q368.8,288.8 390.4,298.5" stroke="#4a1606" stroke-width="0.8" fill="none" opacity="0.60"/><path d="M312.3,211.1Q313.6,199.5 306.0,187.9" stroke="#c8622c" stroke-width="1.3" fill="none" opacity="0.74"/><path d="M337.0,212.5Q340.9,201.6 346.8,190.5" stroke="#4a1606" stroke-width="1.5" fill="none" opacity="0.68"/><path d="M320.6,285.4Q324.6,312.6 323.0,338.1" stroke="#c8622c" stroke-width="1.4" fill="none" opacity="0.83"/><path d="M289.7,248.6Q263.5,253.6 235.2,254.2" stroke="#4a1606" stroke-width="1.1" fill="none" opacity="0.67"/><path d="M355.6,256.9Q391.1,264.2 424.1,272.5" stroke="#c8622c" stroke-width="1.5" fill="none" opacity="0.87"/><path d="M361.1,244.6Q388.1,243.2 413.0,240.3" stroke="#4a1606" stroke-width="1.2" fill="none" opacity="0.60"/><path d="M352.9,224.2Q374.4,210.0 396.2,197.1" stroke="#d8703a" stroke-width="1.0" fill="none" opacity="0.71"/><path d="M325.8,210.4Q338.2,184.8 342.6,156.6" stroke="#4a1606" stroke-width="1.0" fill="none" opacity="0.55"/><path d="M347.4,280.2Q361.3,289.4 369.9,300.0" stroke="#c8622c" stroke-width="1.1" fill="none" opacity="0.63"/><path d="M290.1,228.5Q283.8,223.5 275.3,216.9" stroke="#4a1606" stroke-width="1.2" fill="none" opacity="0.68"/><path d="M333.8,211.9Q338.2,184.4 347.7,156.9" stroke="#c8622c" stroke-width="1.8" fill="none" opacity="0.62"/><path d="M350.5,238.0Q378.8,229.6 406.6,223.4" stroke="#4a1606" stroke-width="1.4" fill="none" opacity="0.79"/><path d="M338.1,213.0Q342.6,203.7 349.7,194.7" stroke="#d8703a" stroke-width="1.4" fill="none" opacity="0.78"/><path d="M302.4,226.5Q285.9,197.8 266.6,168.1" stroke="#4a1606" stroke-width="1.2" fill="none" opacity="0.62"/><path d="M332.6,220.5Q339.9,205.1 339.8,186.5" stroke="#c8622c" stroke-width="1.3" fill="none" opacity="0.67"/><path d="M324.2,289.2Q326.0,313.6 317.4,336.1" stroke="#4a1606" stroke-width="1.1" fill="none" opacity="0.72"/><path d="M327.0,215.2Q330.8,201.2 331.1,185.4" stroke="#e4864a" stroke-width="1.6" fill="none" opacity="0.57"/><path d="M302.7,217.0Q288.0,200.8 270.4,183.9" stroke="#4a1606" stroke-width="0.9" fill="none" opacity="0.67"/><path d="M294.8,227.7Q278.9,214.4 257.7,203.6" stroke="#e4864a" stroke-width="1.8" fill="none" opacity="0.76"/><path d="M281.6,254.2Q271.5,252.7 259.8,256.4" stroke="#4a1606" stroke-width="1.1" fill="none" opacity="0.55"/><path d="M344.9,269.9Q368.8,293.0 394.9,309.7" stroke="#d8703a" stroke-width="1.6" fill="none" opacity="0.59"/><path d="M283.7,233.1Q263.3,217.0 241.0,199.9" stroke="#4a1606" stroke-width="1.0" fill="none" opacity="0.75"/><path d="M280.6,255.6Q261.9,259.6 242.3,268.4" stroke="#c8622c" stroke-width="1.2" fill="none" opacity="0.86"/><path d="M355.7,235.2Q369.6,232.1 380.0,224.3" stroke="#4a1606" stroke-width="1.3" fill="none" opacity="0.60"/><path d="M297.5,268.5Q280.1,282.4 258.5,291.2" stroke="#c8622c" stroke-width="1.6" fill="none" opacity="0.89"/><path d="M361.2,259.9Q392.8,262.7 422.3,263.1" stroke="#4a1606" stroke-width="1.5" fill="none" opacity="0.51"/><path d="M346.0,225.5Q363.9,214.7 380.8,203.4" stroke="#d8703a" stroke-width="1.0" fill="none" opacity="0.65"/><path d="M287.0,228.7Q270.9,214.6 256.1,194.8" stroke="#4a1606" stroke-width="0.9" fill="none" opacity="0.62"/><path d="M301.5,272.8Q289.2,282.0 277.1,291.8" stroke="#d8703a" stroke-width="1.9" fill="none" opacity="0.60"/><path d="M330.3,212.1Q335.9,194.1 348.5,177.0" stroke="#4a1606" stroke-width="1.4" fill="none" opacity="0.59"/><path d="M350.5,223.8Q370.2,211.5 387.1,196.9" stroke="#d8703a" stroke-width="1.4" fill="none" opacity="0.60"/><path d="M315.7,219.8Q312.7,190.4 299.0,161.3" stroke="#4a1606" stroke-width="1.0" fill="none" opacity="0.76"/><path d="M289.1,251.0Q267.5,256.6 243.5,255.8" stroke="#e4864a" stroke-width="1.3" fill="none" opacity="0.71"/><path d="M282.3,242.8Q258.2,247.6 232.6,244.9" stroke="#4a1606" stroke-width="1.5" fill="none" opacity="0.75"/><path d="M287.4,239.3Q277.5,239.1 265.1,239.8" stroke="#e4864a" stroke-width="1.0" fill="none" opacity="0.86"/><path d="M309.9,280.3Q299.4,300.2 288.1,319.0" stroke="#4a1606" stroke-width="1.5" fill="none" opacity="0.69"/><path d="M303.7,281.0Q296.3,291.3 290.2,302.0" stroke="#e4864a" stroke-width="1.7" fill="none" opacity="0.78"/><path d="M333.2,218.4Q344.0,196.4 343.3,170.0" stroke="#4a1606" stroke-width="1.2" fill="none" opacity="0.56"/><path d="M359.3,246.3Q376.6,250.2 391.8,252.4" stroke="#e4864a" stroke-width="1.3" fill="none" opacity="0.71"/><path d="M311.9,209.5Q306.1,192.0 302.0,171.9" stroke="#4a1606" stroke-width="1.0" fill="none" opacity="0.63"/><path d="M342.9,216.4Q346.1,201.5 352.1,187.4" stroke="#e4864a" stroke-width="1.5" fill="none" opacity="0.83"/><path d="M305.4,280.1Q292.9,310.9 282.7,342.2" stroke="#4a1606" stroke-width="1.3" fill="none" opacity="0.52"/><path d="M285.8,234.0Q261.9,220.9 232.5,214.0" stroke="#d8703a" stroke-width="1.2" fill="none" opacity="0.69"/><path d="M352.7,232.0Q371.3,220.1 386.4,204.7" stroke="#4a1606" stroke-width="0.9" fill="none" opacity="0.83"/><path d="M324.0,289.7Q324.7,320.7 320.3,350.0" stroke="#d8703a" stroke-width="1.2" fill="none" opacity="0.82"/><path d="M295.0,266.6Q271.2,292.9 243.5,314.6" stroke="#4a1606" stroke-width="0.8" fill="none" opacity="0.62"/><path d="M353.4,255.3Q389.7,262.1 424.9,260.6" stroke="#d8703a" stroke-width="1.4" fill="none" opacity="0.64"/><path d="M354.1,249.6Q381.3,248.1 406.5,246.7" stroke="#4a1606" stroke-width="1.5" fill="none" opacity="0.62"/><path d="M292.5,222.2Q270.7,204.6 253.9,178.2" stroke="#c8622c" stroke-width="1.1" fill="none" opacity="0.75"/><path d="M361.6,260.8Q392.3,270.7 420.5,280.3" stroke="#4a1606" stroke-width="1.1" fill="none" opacity="0.76"/><path d="M288.1,231.7Q273.0,223.1 253.8,216.7" stroke="#d8703a" stroke-width="1.4" fill="none" opacity="0.63"/><path d="M283.7,258.4Q266.6,267.9 249.3,280.6" stroke="#4a1606" stroke-width="1.3" fill="none" opacity="0.51"/><path d="M308.4,215.4Q305.4,186.4 296.5,157.1" stroke="#d8703a" stroke-width="1.4" fill="none" opacity="0.77"/><path d="M336.2,222.5Q345.3,210.5 348.7,195.1" stroke="#4a1606" stroke-width="0.8" fill="none" opacity="0.66"/><path d="M300.8,227.1Q284.1,202.0 267.7,173.8" stroke="#d8703a" stroke-width="1.1" fill="none" opacity="0.81"/><path d="M357.0,231.8Q379.2,226.3 395.4,211.2" stroke="#4a1606" stroke-width="1.6" fill="none" opacity="0.78"/><path d="M281.3,248.3Q254.5,252.3 225.9,247.5" stroke="#e4864a" stroke-width="1.6" fill="none" opacity="0.78"/><path d="M361.2,252.7Q388.5,265.3 414.3,272.3" stroke="#4a1606" stroke-width="1.4" fill="none" opacity="0.83"/><path d="M289.6,232.6Q274.8,227.0 257.8,220.5" stroke="#d8703a" stroke-width="1.7" fill="none" opacity="0.66"/><path d="M291.5,222.3Q286.6,218.2 275.9,217.5" stroke="#4a1606" stroke-width="1.3" fill="none" opacity="0.65"/><path d="M331.5,216.0Q338.0,203.7 338.3,188.8" stroke="#e4864a" stroke-width="1.1" fill="none" opacity="0.86"/><path d="M319.5,219.5Q318.0,194.8 322.3,167.9" stroke="#4a1606" stroke-width="1.1" fill="none" opacity="0.77"/><path d="M285.2,233.4Q259.4,228.1 234.3,214.8" stroke="#e4864a" stroke-width="1.4" fill="none" opacity="0.64"/><path d="M327.4,219.2Q330.1,205.2 337.3,190.7" stroke="#4a1606" stroke-width="1.5" fill="none" opacity="0.57"/><path d="M289.6,256.8Q268.9,264.6 245.0,265.1" stroke="#e4864a" stroke-width="1.6" fill="none" opacity="0.64"/><path d="M294.9,223.4Q275.0,206.4 255.6,185.3" stroke="#4a1606" stroke-width="1.4" fill="none" opacity="0.52"/><path d="M363.1,247.4Q388.2,247.2 410.0,235.1" stroke="#c8622c" stroke-width="1.5" fill="none" opacity="0.79"/><path d="M311.6,218.8Q308.2,205.4 306.1,189.3" stroke="#4a1606" stroke-width="1.3" fill="none" opacity="0.76"/><path d="M359.9,257.8Q393.5,265.6 425.5,269.4" stroke="#c8622c" stroke-width="1.8" fill="none" opacity="0.80"/><path d="M316.4,209.6Q308.8,183.6 298.7,156.5" stroke="#4a1606" stroke-width="0.8" fill="none" opacity="0.78"/><path d="M303.5,216.6Q289.8,198.5 274.5,178.6" stroke="#e4864a" stroke-width="1.2" fill="none" opacity="0.71"/><path d="M360.3,259.6Q391.4,274.5 422.9,279.6" stroke="#4a1606" stroke-width="1.2" fill="none" opacity="0.80"/><path d="M344.8,215.8Q354.1,199.6 368.1,185.9" stroke="#c8622c" stroke-width="1.0" fill="none" opacity="0.75"/><path d="M296.4,230.7Q278.6,224.1 262.1,210.9" stroke="#4a1606" stroke-width="1.1" fill="none" opacity="0.63"/><path d="M314.4,212.4Q311.8,182.7 315.8,150.3" stroke="#e4864a" stroke-width="1.2" fill="none" opacity="0.73"/><path d="M336.2,221.1Q350.3,193.4 361.4,163.8" stroke="#4a1606" stroke-width="1.4" fill="none" opacity="0.70"/><path d="M339.7,213.1Q350.5,187.9 356.3,160.0" stroke="#c8622c" stroke-width="1.7" fill="none" opacity="0.89"/><path d="M346.2,269.2Q370.3,289.4 383.8,316.9" stroke="#4a1606" stroke-width="1.5" fill="none" opacity="0.73"/><path d="M290.7,255.0Q268.6,262.8 243.7,264.3" stroke="#c8622c" stroke-width="1.6" fill="none" opacity="0.61"/><path d="M295.1,224.3Q280.7,197.6 262.5,171.3" stroke="#4a1606" stroke-width="0.8" fill="none" opacity="0.65"/><path d="M344.2,282.1Q349.8,294.9 353.6,305.8" stroke="#e4864a" stroke-width="1.4" fill="none" opacity="0.66"/><path d="M334.8,288.8Q339.8,319.3 349.9,346.4" stroke="#4a1606" stroke-width="1.6" fill="none" opacity="0.54"/><path d="M349.7,265.6Q374.7,273.3 395.4,284.4" stroke="#e4864a" stroke-width="1.7" fill="none" opacity="0.63"/><path d="M294.2,227.7Q273.1,219.3 251.2,207.7" stroke="#4a1606" stroke-width="1.0" fill="none" opacity="0.77"/><path d="M329.2,216.2Q336.2,192.6 340.2,167.3" stroke="#c8622c" stroke-width="1.7" fill="none" opacity="0.79"/><path d="M290.7,226.7Q282.8,216.1 273.6,203.3" stroke="#4a1606" stroke-width="1.2" fill="none" opacity="0.57"/><path d="M361.0,264.0Q379.9,269.8 398.6,267.0" stroke="#c8622c" stroke-width="1.0" fill="none" opacity="0.65"/><path d="M282.5,246.3Q262.3,243.8 241.8,231.1" stroke="#4a1606" stroke-width="1.1" fill="none" opacity="0.70"/><path d="M289.7,229.3Q272.9,220.5 250.6,216.8" stroke="#c8622c" stroke-width="1.0" fill="none" opacity="0.83"/><path d="M360.2,251.4Q386.3,248.3 410.6,249.2" stroke="#4a1606" stroke-width="1.0" fill="none" opacity="0.72"/><path d="M283.1,241.6Q272.3,240.9 260.2,235.3" stroke="#d8703a" stroke-width="1.2" fill="none" opacity="0.79"/><path d="M356.3,259.8Q381.4,275.0 404.5,288.3" stroke="#4a1606" stroke-width="1.3" fill="none" opacity="0.52"/><path d="M331.0,290.6Q338.5,305.9 341.9,320.2" stroke="#c8622c" stroke-width="1.8" fill="none" opacity="0.58"/><path d="M359.7,246.8Q385.0,246.7 408.5,246.4" stroke="#4a1606" stroke-width="1.6" fill="none" opacity="0.84"/><path d="M352.3,240.6Q378.3,234.1 404.1,232.4" stroke="#d8703a" stroke-width="1.0" fill="none" opacity="0.65"/><path d="M304.9,213.2Q294.3,185.8 273.5,160.8" stroke="#4a1606" stroke-width="1.3" fill="none" opacity="0.63"/><path d="M323.9,281.2Q329.7,296.7 329.0,311.0" stroke="#d8703a" stroke-width="1.2" fill="none" opacity="0.67"/><path d="M291.7,261.6Q270.5,277.3 244.4,285.1" stroke="#4a1606" stroke-width="1.1" fill="none" opacity="0.63"/><path d="M352.0,276.3Q375.1,298.0 397.2,317.0" stroke="#e4864a" stroke-width="1.2" fill="none" opacity="0.76"/><path d="M302.0,285.9Q294.8,299.0 280.4,306.8" stroke="#4a1606" stroke-width="1.1" fill="none" opacity="0.76"/><path d="M292.7,235.8Q281.0,229.7 270.3,217.0" stroke="#e4864a" stroke-width="1.8" fill="none" opacity="0.80"/><path d="M350.9,270.3Q371.8,297.0 393.1,319.0" stroke="#4a1606" stroke-width="1.5" fill="none" opacity="0.69"/><path d="M289.9,233.5Q269.3,225.6 248.9,211.6" stroke="#e4864a" stroke-width="1.4" fill="none" opacity="0.78"/><path d="M356.6,234.9Q388.8,224.3 414.8,203.1" stroke="#4a1606" stroke-width="1.4" fill="none" opacity="0.70"/><path d="M295.2,232.4Q285.6,227.4 270.6,227.0" stroke="#c8622c" stroke-width="1.7" fill="none" opacity="0.87"/><path d="M296.0,223.7Q287.8,218.6 281.7,207.6" stroke="#4a1606" stroke-width="1.4" fill="none" opacity="0.78"/><path d="M319.4,284.7Q319.6,298.5 314.9,310.3" stroke="#e4864a" stroke-width="0.9" fill="none" opacity="0.81"/><path d="M345.4,272.5Q369.7,286.0 389.7,300.6" stroke="#4a1606" stroke-width="1.3" fill="none" opacity="0.63"/><path d="M284.8,238.8Q261.4,223.5 234.4,210.9" stroke="#c8622c" stroke-width="0.9" fill="none" opacity="0.80"/><path d="M362.9,250.7Q376.0,254.0 387.1,251.3" stroke="#4a1606" stroke-width="0.9" fill="none" opacity="0.62"/><path d="M291.9,267.4Q264.4,286.8 230.8,297.1" stroke="#e4864a" stroke-width="1.3" fill="none" opacity="0.73"/><path d="M353.0,255.9Q373.1,256.2 390.7,257.5" stroke="#4a1606" stroke-width="0.9" fill="none" opacity="0.82"/><path d="M291.4,231.3Q273.4,219.5 249.6,212.9" stroke="#e4864a" stroke-width="1.5" fill="none" opacity="0.66"/><path d="M355.5,275.0Q369.0,281.2 379.7,286.9" stroke="#4a1606" stroke-width="0.9" fill="none" opacity="0.74"/><path d="M284.9,261.9Q268.9,269.7 252.8,281.0" stroke="#d8703a" stroke-width="1.9" fill="none" opacity="0.80"/><path d="M325.8,281.5Q333.5,298.9 339.7,314.4" stroke="#4a1606" stroke-width="1.3" fill="none" opacity="0.57"/><path d="M351.7,266.7Q369.8,284.8 387.7,298.4" stroke="#d8703a" stroke-width="1.2" fill="none" opacity="0.84"/><path d="M314.9,286.3Q314.7,310.7 315.1,333.7" stroke="#4a1606" stroke-width="1.0" fill="none" opacity="0.78"/><path d="M325.7,289.2Q333.5,303.8 340.5,316.2" stroke="#c8622c" stroke-width="1.5" fill="none" opacity="0.64"/><path d="M288.0,248.8Q262.8,254.3 235.6,254.4" stroke="#4a1606" stroke-width="1.6" fill="none" opacity="0.51"/><path d="M344.2,275.5Q358.9,292.3 371.2,307.7" stroke="#d8703a" stroke-width="1.4" fill="none" opacity="0.74"/><path d="M283.4,247.5Q262.9,252.1 240.5,250.8" stroke="#4a1606" stroke-width="1.0" fill="none" opacity="0.70"/><path d="M298.6,230.8Q286.1,222.7 275.3,208.5" stroke="#e4864a" stroke-width="1.6" fill="none" opacity="0.57"/><path d="M294.6,222.8Q286.3,220.6 277.7,215.1" stroke="#4a1606" stroke-width="1.2" fill="none" opacity="0.80"/><path d="M332.4,216.9Q336.4,206.7 342.4,196.0" stroke="#c8622c" stroke-width="1.0" fill="none" opacity="0.59"/><path d="M322.6,213.7Q330.7,204.7 333.8,193.9" stroke="#4a1606" stroke-width="0.8" fill="none" opacity="0.73"/><path d="M326.0,287.5Q326.0,309.0 322.2,328.7" stroke="#e4864a" stroke-width="1.4" fill="none" opacity="0.57"/><path d="M314.9,280.8Q309.2,316.3 310.1,351.8" stroke="#4a1606" stroke-width="1.1" fill="none" opacity="0.74"/><path d="M352.7,255.9Q369.4,261.7 383.5,267.9" stroke="#d8703a" stroke-width="1.8" fill="none" opacity="0.81"/><path d="M282.0,260.9Q254.9,270.1 230.5,291.1" stroke="#4a1606" stroke-width="0.9" fill="none" opacity="0.81"/><path d="M297.3,219.3Q285.1,210.4 273.8,197.3" stroke="#d8703a" stroke-width="1.1" fill="none" opacity="0.59"/><path d="M326.9,217.4Q329.6,204.8 330.6,190.6" stroke="#4a1606" stroke-width="1.3" fill="none" opacity="0.67"/><path d="M290.5,241.3Q276.3,233.3 260.1,224.1" stroke="#e4864a" stroke-width="1.7" fill="none" opacity="0.65"/><path d="M336.3,276.6Q347.4,295.2 363.7,307.8" stroke="#4a1606" stroke-width="1.5" fill="none" opacity="0.62"/><path d="M312.2,210.8Q299.3,188.9 288.8,164.1" stroke="#e4864a" stroke-width="1.5" fill="none" opacity="0.63"/><path d="M292.3,268.5Q270.8,284.6 245.5,295.9" stroke="#4a1606" stroke-width="1.0" fill="none" opacity="0.77"/><path d="M355.9,264.7Q384.0,274.4 406.3,291.4" stroke="#d8703a" stroke-width="0.9" fill="none" opacity="0.81"/><path d="M295.2,227.0Q284.6,219.2 268.3,214.8" stroke="#4a1606" stroke-width="0.8" fill="none" opacity="0.54"/><path d="M303.0,221.0Q294.4,207.0 285.8,190.2" stroke="#e4864a" stroke-width="1.5" fill="none" opacity="0.71"/><path d="M309.6,212.5Q301.3,188.5 299.6,160.0" stroke="#4a1606" stroke-width="1.3" fill="none" opacity="0.73"/><path d="M333.6,282.5Q348.7,304.3 357.1,326.6" stroke="#c8622c" stroke-width="1.2" fill="none" opacity="0.79"/><path d="M344.7,273.6Q358.7,294.5 370.6,313.7" stroke="#4a1606" stroke-width="1.0" fill="none" opacity="0.83"/><path d="M348.4,268.8Q367.5,284.4 383.7,299.6" stroke="#e4864a" stroke-width="1.3" fill="none" opacity="0.71"/><path d="M329.1,289.8Q337.3,321.5 344.8,351.3" stroke="#4a1606" stroke-width="1.0" fill="none" opacity="0.75"/><path d="M292.6,222.6Q290.1,215.5 281.1,211.4" stroke="#d8703a" stroke-width="1.1" fill="none" opacity="0.83"/><path d="M331.5,218.9Q341.5,192.3 359.3,167.5" stroke="#4a1606" stroke-width="1.3" fill="none" opacity="0.55"/><path d="M347.7,232.1Q365.8,221.6 382.4,210.4" stroke="#d8703a" stroke-width="1.7" fill="none" opacity="0.76"/><path d="M323.8,291.0Q321.7,306.2 316.1,319.3" stroke="#4a1606" stroke-width="1.5" fill="none" opacity="0.69"/><path d="M289.5,224.5Q278.3,213.1 259.7,207.2" stroke="#d8703a" stroke-width="1.0" fill="none" opacity="0.85"/><path d="M324.2,217.6Q326.3,201.0 319.0,183.0" stroke="#4a1606" stroke-width="0.9" fill="none" opacity="0.79"/><path d="M333.8,209.9Q338.4,201.1 347.7,193.1" stroke="#d8703a" stroke-width="1.5" fill="none" opacity="0.72"/><path d="M317.4,284.9Q314.7,310.1 307.7,333.3" stroke="#4a1606" stroke-width="1.3" fill="none" opacity="0.51"/><path d="M351.6,222.3Q367.8,209.0 377.5,189.9" stroke="#d8703a" stroke-width="1.8" fill="none" opacity="0.59"/><path d="M292.7,229.2Q272.1,213.3 252.5,192.1" stroke="#4a1606" stroke-width="0.9" fill="none" opacity="0.77"/><path d="M315.8,287.9Q318.4,304.7 322.0,320.0" stroke="#d8703a" stroke-width="1.2" fill="none" opacity="0.58"/><path d="M286.3,231.9Q268.0,227.9 247.0,224.6" stroke="#4a1606" stroke-width="0.9" fill="none" opacity="0.71"/><path d="M346.4,271.1Q363.5,290.7 382.8,304.3" stroke="#e4864a" stroke-width="1.7" fill="none" opacity="0.65"/><path d="M359.6,263.3Q377.7,267.9 394.5,268.3" stroke="#4a1606" stroke-width="1.1" fill="none" opacity="0.68"/><path d="M286.7,259.4Q271.7,262.1 256.1,269.7" stroke="#d8703a" stroke-width="1.6" fill="none" opacity="0.80"/><path d="M293.4,274.9Q279.2,294.5 261.7,311.1" stroke="#4a1606" stroke-width="1.0" fill="none" opacity="0.84"/><path d="M355.4,245.0Q374.1,248.7 390.1,244.7" stroke="#e4864a" stroke-width="1.2" fill="none" opacity="0.57"/><path d="M295.2,217.8Q288.8,202.6 282.4,184.5" stroke="#4a1606" stroke-width="1.3" fill="none" opacity="0.73"/><path d="M326.0,212.4Q330.8,188.3 339.6,163.4" stroke="#e4864a" stroke-width="0.9" fill="none" opacity="0.66"/><path d="M294.7,266.8Q276.5,275.5 255.5,280.5" stroke="#4a1606" stroke-width="1.1" fill="none" opacity="0.60"/><path d="M358.1,265.9Q382.5,275.3 401.7,290.5" stroke="#d8703a" stroke-width="1.0" fill="none" opacity="0.73"/><path d="M336.2,289.1Q347.2,301.8 355.0,313.2" stroke="#4a1606" stroke-width="0.9" fill="none" opacity="0.77"/><path d="M304.7,284.2Q296.4,309.6 288.5,334.4" stroke="#c8622c" stroke-width="1.2" fill="none" opacity="0.62"/><path d="M319.3,209.7Q321.8,192.3 314.5,173.9" stroke="#4a1606" stroke-width="0.9" fill="none" opacity="0.77"/><path d="M305.0,287.2Q295.7,299.2 287.7,311.2" stroke="#c8622c" stroke-width="1.5" fill="none" opacity="0.79"/><path d="M322.5,212.0Q324.0,189.1 324.5,164.6" stroke="#4a1606" stroke-width="1.1" fill="none" opacity="0.73"/><path d="M312.5,217.4Q312.6,205.3 314.8,190.8" stroke="#d8703a" stroke-width="1.6" fill="none" opacity="0.86"/><path d="M356.1,256.4Q376.7,264.8 394.6,274.0" stroke="#4a1606" stroke-width="1.1" fill="none" opacity="0.56"/><path d="M290.0,261.7Q279.2,264.3 267.8,269.6" stroke="#c8622c" stroke-width="1.1" fill="none" opacity="0.89"/><path d="M317.7,291.3Q315.6,321.2 303.5,348.2" stroke="#4a1606" stroke-width="1.5" fill="none" opacity="0.76"/><path d="M316.7,210.8Q315.5,199.1 315.8,185.3" stroke="#c8622c" stroke-width="1.8" fill="none" opacity="0.73"/><path d="M288.6,247.1Q261.7,247.1 233.2,241.9" stroke="#4a1606" stroke-width="1.2" fill="none" opacity="0.68"/><path d="M353.3,266.4Q384.1,279.6 410.0,296.8" stroke="#d8703a" stroke-width="1.6" fill="none" opacity="0.82"/><path d="M354.1,227.6Q380.0,210.5 409.6,200.1" stroke="#4a1606" stroke-width="1.0" fill="none" opacity="0.82"/><path d="M356.3,271.3Q379.9,286.1 406.3,290.5" stroke="#e4864a" stroke-width="1.2" fill="none" opacity="0.70"/><path d="M340.8,276.0Q358.7,297.6 381.3,312.0" stroke="#4a1606" stroke-width="1.0" fill="none" opacity="0.57"/><path d="M286.9,236.7Q262.3,223.9 233.9,213.7" stroke="#e4864a" stroke-width="1.6" fill="none" opacity="0.58"/><path d="M313.7,280.0Q312.5,297.6 310.8,313.9" stroke="#4a1606" stroke-width="1.4" fill="none" opacity="0.63"/><path d="M349.3,226.6Q374.0,204.1 397.8,181.2" stroke="#d8703a" stroke-width="1.8" fill="none" opacity="0.80"/><path d="M358.1,244.5Q390.5,239.3 420.9,232.7" stroke="#4a1606" stroke-width="1.5" fill="none" opacity="0.76"/><path d="M294.1,264.2Q278.8,274.1 265.1,288.8" stroke="#c8622c" stroke-width="1.5" fill="none" opacity="0.72"/><path d="M300.1,223.2Q280.6,202.9 263.2,177.5" stroke="#4a1606" stroke-width="1.3" fill="none" opacity="0.57"/><path d="M287.4,237.9Q273.0,232.0 259.1,219.0" stroke="#e4864a" stroke-width="1.4" fill="none" opacity="0.55"/><path d="M292.2,263.4Q274.1,271.1 255.0,279.8" stroke="#4a1606" stroke-width="1.2" fill="none" opacity="0.65"/><path d="M313.4,286.3Q315.1,315.7 310.3,342.7" stroke="#e4864a" stroke-width="1.2" fill="none" opacity="0.60"/><path d="M290.6,252.7Q262.1,256.4 231.3,253.7" stroke="#4a1606" stroke-width="1.3" fill="none" opacity="0.72"/><path d="M298.8,220.4Q292.7,208.3 285.1,194.3" stroke="#e4864a" stroke-width="1.2" fill="none" opacity="0.88"/><path d="M361.6,245.3Q394.9,247.1 426.0,245.6" stroke="#4a1606" stroke-width="0.9" fill="none" opacity="0.75"/><path d="M356.8,271.2Q378.4,292.2 398.6,310.5" stroke="#c8622c" stroke-width="1.2" fill="none" opacity="0.72"/><path d="M336.1,213.5Q346.4,185.7 353.6,155.9" stroke="#4a1606" stroke-width="1.5" fill="none" opacity="0.65"/><path d="M359.3,256.0Q392.3,258.0 422.9,262.7" stroke="#c8622c" stroke-width="1.4" fill="none" opacity="0.59"/><path d="M325.3,213.1Q332.2,201.6 333.9,188.0" stroke="#4a1606" stroke-width="0.8" fill="none" opacity="0.76"/><path d="M281.8,256.6Q253.9,258.8 224.6,264.1" stroke="#d8703a" stroke-width="1.1" fill="none" opacity="0.59"/><path d="M288.0,268.7Q270.5,276.1 253.7,287.3" stroke="#4a1606" stroke-width="1.3" fill="none" opacity="0.71"/><path d="M350.0,280.9Q370.2,304.1 392.8,321.6" stroke="#c8622c" stroke-width="1.5" fill="none" opacity="0.61"/><path d="M314.5,282.9Q311.6,303.2 303.8,321.1" stroke="#4a1606" stroke-width="1.0" fill="none" opacity="0.83"/><path d="M286.2,230.2Q269.0,229.3 251.8,222.5" stroke="#d8703a" stroke-width="0.9" fill="none" opacity="0.58"/><path d="M293.4,229.9Q284.9,224.9 273.4,219.8" stroke="#4a1606" stroke-width="0.9" fill="none" opacity="0.63"/><path d="M323.1,286.0Q322.7,319.0 324.3,350.4" stroke="#e4864a" stroke-width="0.9" fill="none" opacity="0.58"/><path d="M337.1,217.4Q348.9,200.9 364.3,185.8" stroke="#4a1606" stroke-width="1.2" fill="none" opacity="0.78"/><path d="M314.1,220.2Q314.7,202.1 313.9,182.3" stroke="#c8622c" stroke-width="1.5" fill="none" opacity="0.79"/><path d="M322.4,290.8Q330.8,308.1 330.8,324.3" stroke="#4a1606" stroke-width="1.5" fill="none" opacity="0.76"/><path d="M333.7,211.0Q340.4,185.4 337.0,156.7" stroke="#e4864a" stroke-width="1.6" fill="none" opacity="0.88"/><path d="M311.9,278.6Q308.2,296.6 295.8,310.3" stroke="#4a1606" stroke-width="1.4" fill="none" opacity="0.85"/><ellipse cx="338.6" cy="189.8" rx="4.8" ry="2.7" fill="#4a1606" opacity="0.45" transform="rotate(276 338.6 189.8)"/><ellipse cx="240.5" cy="262.9" rx="6.0" ry="1.3" fill="#4a1606" opacity="0.64" transform="rotate(161 240.5 262.9)"/><ellipse cx="257.9" cy="278.6" rx="6.0" ry="2.0" fill="#4a1606" opacity="0.77" transform="rotate(166 257.9 278.6)"/><ellipse cx="323.9" cy="317.8" rx="3.8" ry="2.1" fill="#4a1606" opacity="0.70" transform="rotate(78 323.9 317.8)"/><ellipse cx="259.4" cy="306.4" rx="4.1" ry="0.9" fill="#4a1606" opacity="0.61" transform="rotate(146 259.4 306.4)"/><ellipse cx="253.7" cy="225.9" rx="6.1" ry="2.2" fill="#4a1606" opacity="0.57" transform="rotate(189 253.7 225.9)"/><ellipse cx="381.3" cy="279.8" rx="6.6" ry="1.6" fill="#4a1606" opacity="0.45" transform="rotate(23 381.3 279.8)"/><ellipse cx="401.4" cy="225.7" rx="5.5" ry="3.0" fill="#4a1606" opacity="0.65" transform="rotate(347 401.4 225.7)"/><ellipse cx="298.5" cy="320.7" rx="8.9" ry="2.6" fill="#4a1606" opacity="0.80" transform="rotate(109 298.5 320.7)"/><ellipse cx="339.9" cy="328.0" rx="9.9" ry="1.3" fill="#4a1606" opacity="0.72" transform="rotate(70 339.9 328.0)"/><ellipse cx="302.8" cy="210.0" rx="3.6" ry="2.9" fill="#4a1606" opacity="0.81" transform="rotate(255 302.8 210.0)"/><ellipse cx="393.9" cy="280.8" rx="6.4" ry="1.9" fill="#4a1606" opacity="0.73" transform="rotate(18 393.9 280.8)"/><ellipse cx="285.6" cy="280.3" rx="3.7" ry="1.3" fill="#4a1606" opacity="0.74" transform="rotate(141 285.6 280.3)"/><ellipse cx="247.1" cy="212.5" rx="5.6" ry="1.7" fill="#4a1606" opacity="0.66" transform="rotate(208 247.1 212.5)"/><ellipse cx="299.7" cy="185.5" rx="4.6" ry="2.2" fill="#4a1606" opacity="0.65" transform="rotate(249 299.7 185.5)"/><ellipse cx="259.8" cy="256.2" rx="7.4" ry="1.8" fill="#4a1606" opacity="0.85" transform="rotate(168 259.8 256.2)"/><ellipse cx="324.6" cy="198.1" rx="8.9" ry="2.6" fill="#4a1606" opacity="0.56" transform="rotate(267 324.6 198.1)"/><ellipse cx="337.6" cy="290.1" rx="5.1" ry="2.8" fill="#4a1606" opacity="0.70" transform="rotate(82 337.6 290.1)"/><ellipse cx="366.0" cy="244.9" rx="7.1" ry="2.9" fill="#4a1606" opacity="0.46" transform="rotate(345 366.0 244.9)"/><ellipse cx="387.0" cy="222.9" rx="9.6" ry="1.4" fill="#4a1606" opacity="0.68" transform="rotate(343 387.0 222.9)"/><ellipse cx="360.8" cy="210.6" rx="3.7" ry="2.4" fill="#4a1606" opacity="0.51" transform="rotate(308 360.8 210.6)"/><ellipse cx="349.0" cy="288.3" rx="7.4" ry="2.6" fill="#4a1606" opacity="0.53" transform="rotate(46 349.0 288.3)"/><ellipse cx="346.9" cy="205.2" rx="7.3" ry="1.6" fill="#4a1606" opacity="0.68" transform="rotate(304 346.9 205.2)"/><ellipse cx="371.7" cy="281.3" rx="7.9" ry="1.7" fill="#4a1606" opacity="0.61" transform="rotate(23 371.7 281.3)"/><ellipse cx="366.4" cy="257.4" rx="4.2" ry="1.8" fill="#4a1606" opacity="0.81" transform="rotate(15 366.4 257.4)"/><ellipse cx="264.3" cy="297.9" rx="8.9" ry="3.0" fill="#4a1606" opacity="0.73" transform="rotate(136 264.3 297.9)"/><ellipse cx="384.4" cy="205.8" rx="3.8" ry="2.7" fill="#4a1606" opacity="0.69" transform="rotate(329 384.4 205.8)"/><ellipse cx="366.4" cy="262.8" rx="3.5" ry="2.2" fill="#4a1606" opacity="0.49" transform="rotate(17 366.4 262.8)"/><ellipse cx="354.3" cy="200.3" rx="4.4" ry="2.3" fill="#4a1606" opacity="0.54" transform="rotate(295 354.3 200.3)"/><ellipse cx="342.9" cy="327.1" rx="4.1" ry="1.7" fill="#4a1606" opacity="0.72" transform="rotate(67 342.9 327.1)"/><ellipse cx="297.3" cy="197.2" rx="4.5" ry="1.3" fill="#4a1606" opacity="0.69" transform="rotate(254 297.3 197.2)"/><ellipse cx="389.6" cy="277.7" rx="8.9" ry="1.6" fill="#4a1606" opacity="0.52" transform="rotate(32 389.6 277.7)"/><ellipse cx="267.3" cy="274.1" rx="9.8" ry="2.1" fill="#4a1606" opacity="0.74" transform="rotate(164 267.3 274.1)"/><ellipse cx="311.4" cy="312.4" rx="6.5" ry="1.8" fill="#4a1606" opacity="0.52" transform="rotate(94 311.4 312.4)"/><ellipse cx="408.3" cy="245.6" rx="2.7" ry="1.8" fill="#4a1606" opacity="0.75" transform="rotate(352 408.3 245.6)"/><ellipse cx="262.6" cy="264.3" rx="6.3" ry="1.3" fill="#4a1606" opacity="0.55" transform="rotate(169 262.6 264.3)"/><ellipse cx="385.6" cy="217.7" rx="5.3" ry="2.7" fill="#4a1606" opacity="0.70" transform="rotate(333 385.6 217.7)"/><ellipse cx="317.9" cy="176.8" rx="4.9" ry="2.8" fill="#4a1606" opacity="0.75" transform="rotate(271 317.9 176.8)"/><ellipse cx="321.9" cy="200.4" rx="9.9" ry="2.5" fill="#4a1606" opacity="0.56" transform="rotate(278 321.9 200.4)"/><ellipse cx="295.2" cy="328.7" rx="6.0" ry="1.5" fill="#4a1606" opacity="0.57" transform="rotate(102 295.2 328.7)"/><ellipse cx="285.0" cy="240.9" rx="5.7" ry="2.2" fill="#4a1606" opacity="0.73" transform="rotate(206 285.0 240.9)"/><ellipse cx="362.9" cy="220.3" rx="9.2" ry="1.6" fill="#4a1606" opacity="0.71" transform="rotate(315 362.9 220.3)"/><ellipse cx="325.3" cy="292.2" rx="8.1" ry="1.4" fill="#4a1606" opacity="0.49" transform="rotate(91 325.3 292.2)"/><ellipse cx="240.9" cy="248.3" rx="3.7" ry="1.0" fill="#4a1606" opacity="0.82" transform="rotate(192 240.9 248.3)"/><ellipse cx="249.5" cy="263.6" rx="5.1" ry="1.3" fill="#4a1606" opacity="0.69" transform="rotate(164 249.5 263.6)"/><ellipse cx="334.0" cy="205.7" rx="4.4" ry="1.8" fill="#4a1606" opacity="0.59" transform="rotate(277 334.0 205.7)"/><ellipse cx="323.8" cy="194.1" rx="8.3" ry="2.4" fill="#4a1606" opacity="0.69" transform="rotate(280 323.8 194.1)"/><ellipse cx="381.0" cy="241.6" rx="7.1" ry="1.6" fill="#4a1606" opacity="0.59" transform="rotate(343 381.0 241.6)"/><ellipse cx="374.5" cy="185.3" rx="3.9" ry="1.1" fill="#4a1606" opacity="0.68" transform="rotate(303 374.5 185.3)"/><ellipse cx="239.2" cy="273.7" rx="4.8" ry="1.1" fill="#4a1606" opacity="0.64" transform="rotate(167 239.2 273.7)"/><ellipse cx="371.3" cy="239.3" rx="8.7" ry="1.7" fill="#4a1606" opacity="0.47" transform="rotate(343 371.3 239.3)"/><ellipse cx="323.9" cy="306.9" rx="5.2" ry="2.4" fill="#4a1606" opacity="0.57" transform="rotate(81 323.9 306.9)"/><ellipse cx="260.8" cy="234.1" rx="7.3" ry="1.6" fill="#4a1606" opacity="0.76" transform="rotate(190 260.8 234.1)"/><ellipse cx="372.0" cy="248.7" rx="4.1" ry="2.8" fill="#4a1606" opacity="0.61" transform="rotate(369 372.0 248.7)"/><ellipse cx="390.7" cy="235.9" rx="9.4" ry="1.3" fill="#4a1606" opacity="0.79" transform="rotate(335 390.7 235.9)"/><ellipse cx="279.8" cy="260.9" rx="8.5" ry="1.3" fill="#4a1606" opacity="0.75" transform="rotate(161 279.8 260.9)"/><ellipse cx="320.9" cy="187.0" rx="7.5" ry="2.3" fill="#4a1606" opacity="0.59" transform="rotate(261 320.9 187.0)"/><ellipse cx="287.1" cy="216.1" rx="8.6" ry="2.9" fill="#4a1606" opacity="0.52" transform="rotate(227 287.1 216.1)"/><ellipse cx="309.5" cy="318.3" rx="6.4" ry="1.9" fill="#4a1606" opacity="0.61" transform="rotate(91 309.5 318.3)"/><ellipse cx="291.9" cy="283.8" rx="9.9" ry="2.6" fill="#4a1606" opacity="0.55" transform="rotate(146 291.9 283.8)"/><ellipse cx="293.2" cy="183.8" rx="5.1" ry="2.3" fill="#4a1606" opacity="0.69" transform="rotate(251 293.2 183.8)"/><ellipse cx="274.0" cy="236.9" rx="5.2" ry="1.8" fill="#4a1606" opacity="0.62" transform="rotate(196 274.0 236.9)"/><ellipse cx="335.6" cy="292.7" rx="9.9" ry="1.9" fill="#4a1606" opacity="0.81" transform="rotate(84 335.6 292.7)"/><ellipse cx="349.6" cy="293.4" rx="5.0" ry="1.3" fill="#4a1606" opacity="0.70" transform="rotate(52 349.6 293.4)"/><ellipse cx="309.3" cy="205.6" rx="6.9" ry="2.4" fill="#4a1606" opacity="0.72" transform="rotate(258 309.3 205.6)"/><ellipse cx="325.8" cy="207.5" rx="4.3" ry="2.5" fill="#4a1606" opacity="0.73" transform="rotate(271 325.8 207.5)"/><ellipse cx="313.1" cy="175.3" rx="8.1" ry="2.0" fill="#4a1606" opacity="0.72" transform="rotate(271 313.1 175.3)"/><ellipse cx="244.9" cy="260.5" rx="5.7" ry="1.9" fill="#4a1606" opacity="0.84" transform="rotate(176 244.9 260.5)"/><ellipse cx="343.7" cy="301.8" rx="4.2" ry="2.4" fill="#4a1606" opacity="0.64" transform="rotate(68 343.7 301.8)"/><ellipse cx="288.0" cy="296.6" rx="7.3" ry="1.5" fill="#4a1606" opacity="0.51" transform="rotate(128 288.0 296.6)"/><ellipse cx="260.3" cy="247.5" rx="6.2" ry="1.8" fill="#4a1606" opacity="0.54" transform="rotate(191 260.3 247.5)"/><ellipse cx="238.9" cy="236.9" rx="3.5" ry="1.2" fill="#4a1606" opacity="0.65" transform="rotate(194 238.9 236.9)"/><ellipse cx="340.1" cy="170.6" rx="3.0" ry="1.3" fill="#4a1606" opacity="0.63" transform="rotate(281 340.1 170.6)"/><ellipse cx="292.0" cy="214.3" rx="5.3" ry="1.7" fill="#4a1606" opacity="0.58" transform="rotate(228 292.0 214.3)"/><ellipse cx="298.1" cy="333.0" rx="4.5" ry="1.1" fill="#4a1606" opacity="0.70" transform="rotate(98 298.1 333.0)"/><ellipse cx="270.0" cy="211.3" rx="3.8" ry="2.3" fill="#4a1606" opacity="0.68" transform="rotate(224 270.0 211.3)"/><ellipse cx="296.2" cy="201.8" rx="6.0" ry="1.7" fill="#4a1606" opacity="0.75" transform="rotate(247 296.2 201.8)"/><ellipse cx="261.6" cy="235.5" rx="5.4" ry="3.0" fill="#4a1606" opacity="0.68" transform="rotate(183 261.6 235.5)"/><ellipse cx="295.8" cy="324.9" rx="9.8" ry="2.3" fill="#4a1606" opacity="0.53" transform="rotate(116 295.8 324.9)"/><ellipse cx="385.5" cy="247.5" rx="9.2" ry="1.3" fill="#4a1606" opacity="0.73" transform="rotate(352 385.5 247.5)"/><ellipse cx="343.0" cy="287.3" rx="5.6" ry="2.5" fill="#4a1606" opacity="0.53" transform="rotate(71 343.0 287.3)"/><ellipse cx="256.0" cy="206.2" rx="8.5" ry="2.4" fill="#4a1606" opacity="0.54" transform="rotate(214 256.0 206.2)"/><ellipse cx="313.3" cy="317.8" rx="5.5" ry="2.5" fill="#4a1606" opacity="0.70" transform="rotate(93 313.3 317.8)"/><ellipse cx="341.8" cy="322.3" rx="9.2" ry="2.8" fill="#4a1606" opacity="0.82" transform="rotate(74 341.8 322.3)"/><ellipse cx="361.6" cy="296.8" rx="5.4" ry="1.9" fill="#4a1606" opacity="0.59" transform="rotate(40 361.6 296.8)"/><ellipse cx="261.5" cy="208.3" rx="6.4" ry="2.9" fill="#4a1606" opacity="0.75" transform="rotate(219 261.5 208.3)"/><ellipse cx="354.1" cy="203.1" rx="8.5" ry="2.1" fill="#4a1606" opacity="0.72" transform="rotate(297 354.1 203.1)"/><ellipse cx="312.5" cy="210.8" rx="8.1" ry="2.9" fill="#4a1606" opacity="0.83" transform="rotate(243 312.5 210.8)"/><ellipse cx="248.4" cy="289.8" rx="3.6" ry="1.2" fill="#4a1606" opacity="0.57" transform="rotate(157 248.4 289.8)"/><ellipse cx="331.4" cy="322.7" rx="5.7" ry="1.3" fill="#4a1606" opacity="0.81" transform="rotate(79 331.4 322.7)"/><ellipse cx="319.8" cy="205.4" rx="6.8" ry="2.3" fill="#4a1606" opacity="0.78" transform="rotate(257 319.8 205.4)"/><ellipse cx="394.6" cy="240.1" rx="8.6" ry="2.0" fill="#4a1606" opacity="0.72" transform="rotate(345 394.6 240.1)"/><ellipse cx="377.1" cy="198.3" rx="4.5" ry="3.0" fill="#4a1606" opacity="0.73" transform="rotate(325 377.1 198.3)"/><ellipse cx="334.8" cy="298.6" rx="4.3" ry="2.6" fill="#4a1606" opacity="0.85" transform="rotate(78 334.8 298.6)"/><ellipse cx="350.3" cy="302.5" rx="5.3" ry="2.7" fill="#4a1606" opacity="0.74" transform="rotate(69 350.3 302.5)"/><ellipse cx="271.1" cy="253.0" rx="6.1" ry="1.4" fill="#4a1606" opacity="0.69" transform="rotate(184 271.1 253.0)"/><ellipse cx="244.7" cy="231.3" rx="4.4" ry="2.4" fill="#4a1606" opacity="0.55" transform="rotate(185 244.7 231.3)"/><ellipse cx="286.8" cy="198.8" rx="9.2" ry="1.6" fill="#4a1606" opacity="0.60" transform="rotate(231 286.8 198.8)"/><ellipse cx="303.1" cy="320.9" rx="5.7" ry="2.0" fill="#4a1606" opacity="0.48" transform="rotate(114 303.1 320.9)"/><ellipse cx="287.7" cy="199.1" rx="6.2" ry="2.0" fill="#4a1606" opacity="0.50" transform="rotate(227 287.7 199.1)"/><ellipse cx="313.1" cy="197.1" rx="5.1" ry="1.6" fill="#4a1606" opacity="0.73" transform="rotate(262 313.1 197.1)"/><ellipse cx="291.8" cy="225.9" rx="6.4" ry="2.0" fill="#4a1606" opacity="0.75" transform="rotate(211 291.8 225.9)"/><ellipse cx="258.0" cy="297.6" rx="6.7" ry="1.7" fill="#4a1606" opacity="0.47" transform="rotate(154 258.0 297.6)"/><ellipse cx="290.6" cy="298.3" rx="4.2" ry="2.4" fill="#4a1606" opacity="0.83" transform="rotate(121 290.6 298.3)"/><ellipse cx="359.6" cy="229.4" rx="4.8" ry="2.4" fill="#4a1606" opacity="0.54" transform="rotate(333 359.6 229.4)"/><ellipse cx="278.7" cy="326.3" rx="5.7" ry="1.1" fill="#4a1606" opacity="0.84" transform="rotate(126 278.7 326.3)"/><ellipse cx="290.6" cy="201.6" rx="9.6" ry="2.3" fill="#4a1606" opacity="0.81" transform="rotate(240 290.6 201.6)"/><ellipse cx="366.7" cy="266.6" rx="3.9" ry="1.7" fill="#4a1606" opacity="0.74" transform="rotate(31 366.7 266.6)"/><ellipse cx="279.1" cy="303.8" rx="6.4" ry="2.1" fill="#4a1606" opacity="0.82" transform="rotate(127 279.1 303.8)"/><ellipse cx="323.3" cy="208.8" rx="7.5" ry="2.9" fill="#4a1606" opacity="0.50" transform="rotate(266 323.3 208.8)"/><g filter="url(#cry)" opacity="0.92"><path d="M324,156L319,199" stroke="#2e0e04" stroke-width="8.8" stroke-linecap="round"/><path d="M345,164L337,200" stroke="#2e0e04" stroke-width="9.5" stroke-linecap="round"/><path d="M337,203L333,215" stroke="#2e0e04" stroke-width="6.8" stroke-linecap="round"/><path d="M353,176L348,197" stroke="#2e0e04" stroke-width="7.4" stroke-linecap="round"/><path d="M375,178L366,196" stroke="#2e0e04" stroke-width="7.4" stroke-linecap="round"/><path d="M358,187L362,200" stroke="#2e0e04" stroke-width="6.8" stroke-linecap="round"/><path d="M371,193L381,199" stroke="#2e0e04" stroke-width="6.8" stroke-linecap="round"/><path d="M377,206L394,221" stroke="#2e0e04" stroke-width="12.2" stroke-linecap="round"/><path d="M403,194L406,211" stroke="#2e0e04" stroke-width="7.4" stroke-linecap="round"/><path d="M412,190L414,196" stroke="#2e0e04" stroke-width="4.7" stroke-linecap="round"/><path d="M368,224L373,229" stroke="#2e0e04" stroke-width="5.4" stroke-linecap="round"/><path d="M383,232L391,247" stroke="#2e0e04" stroke-width="6.8" stroke-linecap="round"/><path d="M371,276L393,279" stroke="#2e0e04" stroke-width="10.8" stroke-linecap="round"/><path d="M392,257L405,262" stroke="#2e0e04" stroke-width="7.4" stroke-linecap="round"/><path d="M368,258L382,261" stroke="#2e0e04" stroke-width="6.8" stroke-linecap="round"/><path d="M380,296L388,299" stroke="#2e0e04" stroke-width="6.8" stroke-linecap="round"/><path d="M395,295L401,298" stroke="#2e0e04" stroke-width="5.4" stroke-linecap="round"/><path d="M387,274L398,287" stroke="#2e0e04" stroke-width="6.8" stroke-linecap="round"/><path d="M363,309L377,324" stroke="#2e0e04" stroke-width="6.8" stroke-linecap="round"/><path d="M378,300L386,307" stroke="#2e0e04" stroke-width="5.4" stroke-linecap="round"/><path d="M265,316L270,332" stroke="#2e0e04" stroke-width="3.5" stroke-linecap="round"/><path d="M287,324L295,338" stroke="#2e0e04" stroke-width="3.5" stroke-linecap="round"/><path d="M307,322L323,340" stroke="#2e0e04" stroke-width="4.1" stroke-linecap="round"/></g><path d="M365.9,264.4Q380.7,270.6 393.4,275.4" stroke="#d06a30" stroke-width="1.3" fill="none" opacity="0.57"/><path d="M285.1,220.4Q274.2,211.5 261.4,200.9" stroke="#d06a30" stroke-width="1.0" fill="none" opacity="0.51"/><path d="M297.5,202.1Q293.8,201.1 287.6,199.2" stroke="#d06a30" stroke-width="1.2" fill="none" opacity="0.78"/><path d="M351.4,222.6Q365.9,207.1 376.3,188.4" stroke="#d06a30" stroke-width="1.4" fill="none" opacity="0.43"/><path d="M362.1,235.1Q376.9,230.5 389.4,223.7" stroke="#d06a30" stroke-width="0.9" fill="none" opacity="0.54"/><path d="M330.9,285.5Q335.0,307.3 335.0,327.7" stroke="#d06a30" stroke-width="1.4" fill="none" opacity="0.62"/><path d="M354.2,281.0Q365.3,290.8 374.4,298.9" stroke="#d06a30" stroke-width="1.5" fill="none" opacity="0.48"/><path d="M278.1,240.7Q264.2,242.9 248.3,245.6" stroke="#d06a30" stroke-width="1.5" fill="none" opacity="0.76"/><path d="M332.9,301.3Q334.0,315.2 331.7,327.6" stroke="#d06a30" stroke-width="1.0" fill="none" opacity="0.42"/><path d="M364.7,246.6Q375.8,245.3 384.7,241.7" stroke="#d06a30" stroke-width="1.1" fill="none" opacity="0.73"/><path d="M362.3,241.5Q375.0,237.7 385.1,231.1" stroke="#d06a30" stroke-width="1.6" fill="none" opacity="0.59"/><path d="M350.5,280.6Q364.2,296.4 375.3,311.0" stroke="#d06a30" stroke-width="1.2" fill="none" opacity="0.71"/><path d="M272.9,267.0Q259.1,273.0 243.2,276.8" stroke="#d06a30" stroke-width="0.9" fill="none" opacity="0.53"/><path d="M312.8,301.8Q309.3,322.1 302.7,340.4" stroke="#d06a30" stroke-width="1.3" fill="none" opacity="0.45"/><path d="M359.3,253.9Q380.6,255.7 400.0,254.7" stroke="#d06a30" stroke-width="1.6" fill="none" opacity="0.44"/><path d="M291.9,220.9Q286.9,212.1 280.7,201.0" stroke="#d06a30" stroke-width="1.5" fill="none" opacity="0.59"/><path d="M284.0,253.9Q264.2,255.5 242.4,253.9" stroke="#d06a30" stroke-width="1.5" fill="none" opacity="0.73"/><path d="M335.7,212.8Q343.1,188.0 345.2,160.9" stroke="#d06a30" stroke-width="1.0" fill="none" opacity="0.62"/><path d="M310.6,203.2Q310.6,187.9 309.7,170.7" stroke="#d06a30" stroke-width="1.1" fill="none" opacity="0.42"/><path d="M311.9,295.9Q310.6,316.7 307.9,335.9" stroke="#d06a30" stroke-width="1.2" fill="none" opacity="0.74"/><path d="M288.4,219.9Q277.1,214.4 262.9,208.8" stroke="#d06a30" stroke-width="1.1" fill="none" opacity="0.79"/><path d="M277.3,247.8Q259.8,251.0 240.3,254.3" stroke="#d06a30" stroke-width="1.2" fill="none" opacity="0.50"/><path d="M277.0,242.5Q258.2,238.0 237.9,230.3" stroke="#d06a30" stroke-width="1.1" fill="none" opacity="0.80"/><path d="M282.2,232.6Q272.5,233.4 260.5,234.3" stroke="#d06a30" stroke-width="1.1" fill="none" opacity="0.65"/><path d="M317.1,288.1Q319.8,309.2 322.7,328.7" stroke="#d06a30" stroke-width="1.0" fill="none" opacity="0.60"/><path d="M314.7,208.2Q311.3,189.3 304.8,169.0" stroke="#d06a30" stroke-width="0.9" fill="none" opacity="0.72"/><path d="M292.9,211.2Q283.5,197.4 272.2,182.0" stroke="#d06a30" stroke-width="0.9" fill="none" opacity="0.46"/><path d="M275.1,237.6Q271.5,235.7 266.0,231.8" stroke="#d06a30" stroke-width="1.5" fill="none" opacity="0.64"/><path d="M355.8,219.9Q370.2,204.1 380.1,185.0" stroke="#d06a30" stroke-width="1.2" fill="none" opacity="0.70"/><path d="M335.2,198.1Q335.5,188.6 332.4,177.5" stroke="#d06a30" stroke-width="1.4" fill="none" opacity="0.79"/><path d="M371.0,231.3Q377.4,232.9 381.9,233.1" stroke="#d06a30" stroke-width="1.5" fill="none" opacity="0.52"/><path d="M287.2,218.1Q282.0,208.0 276.3,195.3" stroke="#d06a30" stroke-width="0.9" fill="none" opacity="0.47"/><path d="M321.3,199.5Q326.6,187.7 331.5,174.6" stroke="#d06a30" stroke-width="1.0" fill="none" opacity="0.50"/><path d="M372.3,262.9Q383.2,267.9 392.0,271.5" stroke="#d06a30" stroke-width="1.2" fill="none" opacity="0.62"/><path d="M316.7,287.9Q315.7,314.7 313.2,339.8" stroke="#d06a30" stroke-width="1.1" fill="none" opacity="0.62"/><path d="M369.9,264.9Q382.9,268.2 394.0,269.4" stroke="#d06a30" stroke-width="1.0" fill="none" opacity="0.42"/><path d="M316.0,201.7Q315.2,183.4 312.3,163.4" stroke="#d06a30" stroke-width="1.5" fill="none" opacity="0.56"/><path d="M271.8,238.5Q264.3,238.2 254.7,236.4" stroke="#d06a30" stroke-width="1.1" fill="none" opacity="0.42"/><path d="M372.9,238.9Q391.2,231.7 406.5,220.5" stroke="#d06a30" stroke-width="1.5" fill="none" opacity="0.45"/><path d="M358.0,226.5Q368.5,225.0 377.2,222.5" stroke="#d06a30" stroke-width="0.8" fill="none" opacity="0.73"/><path d="M356.5,288.6Q364.1,291.7 370.0,292.6" stroke="#d06a30" stroke-width="1.3" fill="none" opacity="0.64"/><path d="M315.3,212.2Q316.8,192.7 318.4,171.5" stroke="#d06a30" stroke-width="1.4" fill="none" opacity="0.74"/><path d="M305.2,201.3Q302.5,190.3 297.8,177.8" stroke="#d06a30" stroke-width="1.3" fill="none" opacity="0.73"/><path d="M338.1,287.9Q352.0,310.9 365.6,331.3" stroke="#d06a30" stroke-width="0.9" fill="none" opacity="0.72"/><path d="M360.1,245.1Q373.6,245.3 385.0,244.0" stroke="#d06a30" stroke-width="1.3" fill="none" opacity="0.66"/><path d="M287.9,220.3Q282.1,216.7 274.2,211.9" stroke="#d06a30" stroke-width="1.2" fill="none" opacity="0.80"/><path d="M273.7,251.2Q258.0,252.0 240.3,250.7" stroke="#d06a30" stroke-width="1.3" fill="none" opacity="0.44"/><path d="M328.5,289.3Q335.1,308.2 340.7,325.2" stroke="#d06a30" stroke-width="1.5" fill="none" opacity="0.44"/><path d="M368.6,268.3Q377.6,268.6 384.5,266.4" stroke="#d06a30" stroke-width="1.0" fill="none" opacity="0.56"/><path d="M274.8,249.9Q257.0,247.1 237.7,240.3" stroke="#d06a30" stroke-width="1.0" fill="none" opacity="0.58"/><path d="M292.4,276.3Q277.2,288.9 258.8,298.2" stroke="#d06a30" stroke-width="1.0" fill="none" opacity="0.46"/><path d="M359.7,272.0Q383.6,288.0 404.9,303.3" stroke="#d06a30" stroke-width="0.9" fill="none" opacity="0.79"/><path d="M331.9,293.4Q333.6,313.9 330.6,332.8" stroke="#d06a30" stroke-width="1.5" fill="none" opacity="0.54"/><path d="M367.7,238.1Q389.6,232.5 409.1,224.1" stroke="#d06a30" stroke-width="1.3" fill="none" opacity="0.69"/><path d="M374.0,247.9Q390.5,244.7 404.5,238.1" stroke="#d06a30" stroke-width="1.4" fill="none" opacity="0.45"/><path d="M371.4,227.9Q388.4,218.0 402.2,204.7" stroke="#d06a30" stroke-width="1.3" fill="none" opacity="0.65"/><path d="M332.3,198.7Q332.9,193.8 331.0,187.4" stroke="#d06a30" stroke-width="0.8" fill="none" opacity="0.79"/><path d="M274.9,254.9Q255.5,261.9 234.5,269.4" stroke="#d06a30" stroke-width="1.1" fill="none" opacity="0.66"/><path d="M294.5,291.9Q289.1,303.3 281.5,312.9" stroke="#d06a30" stroke-width="1.2" fill="none" opacity="0.55"/><path d="M372.9,241.5Q384.2,242.0 393.4,241.1" stroke="#d06a30" stroke-width="1.3" fill="none" opacity="0.49"/><path d="M345.6,287.1Q354.8,306.1 360.4,324.2" stroke="#d06a30" stroke-width="1.2" fill="none" opacity="0.60"/><path d="M286.3,258.7Q271.0,262.2 253.6,262.8" stroke="#d06a30" stroke-width="1.3" fill="none" opacity="0.43"/><path d="M362.2,215.9Q380.4,207.3 397.4,198.4" stroke="#d06a30" stroke-width="1.1" fill="none" opacity="0.51"/><path d="M291.3,281.5Q288.8,291.1 285.0,299.7" stroke="#d06a30" stroke-width="1.3" fill="none" opacity="0.74"/><path d="M357.8,266.2Q372.0,276.3 383.5,286.0" stroke="#d06a30" stroke-width="1.2" fill="none" opacity="0.52"/><path d="M284.1,217.5Q275.0,208.4 264.2,197.3" stroke="#d06a30" stroke-width="1.4" fill="none" opacity="0.62"/><path d="M293.7,216.2Q284.0,197.0 275.0,174.7" stroke="#d06a30" stroke-width="1.2" fill="none" opacity="0.65"/><path d="M350.4,224.4Q364.2,213.5 375.4,200.4" stroke="#d06a30" stroke-width="1.3" fill="none" opacity="0.71"/><path d="M282.5,225.0Q266.3,216.8 247.7,207.7" stroke="#d06a30" stroke-width="1.3" fill="none" opacity="0.71"/><path d="M272.7,260.2Q269.5,261.8 264.2,261.7" stroke="#d06a30" stroke-width="1.4" fill="none" opacity="0.68"/><path d="M358.0,278.4Q373.2,293.1 385.6,307.0" stroke="#d06a30" stroke-width="1.6" fill="none" opacity="0.44"/><path d="M332.6,297.5Q336.5,305.3 338.5,311.4" stroke="#d06a30" stroke-width="0.8" fill="none" opacity="0.65"/><path d="M296.2,222.0Q288.1,214.5 277.6,205.8" stroke="#d06a30" stroke-width="1.0" fill="none" opacity="0.60"/><path d="M286.1,227.8Q278.5,227.5 268.6,226.8" stroke="#d06a30" stroke-width="1.5" fill="none" opacity="0.48"/><path d="M363.2,234.4Q375.7,232.6 386.3,229.4" stroke="#d06a30" stroke-width="0.9" fill="none" opacity="0.50"/><path d="M285.8,226.9Q280.0,222.1 272.5,215.3" stroke="#d06a30" stroke-width="1.0" fill="none" opacity="0.78"/><path d="M335.8,286.7Q340.9,303.6 342.6,319.3" stroke="#d06a30" stroke-width="1.5" fill="none" opacity="0.72"/><path d="M328.8,293.0Q333.4,312.4 335.8,330.1" stroke="#d06a30" stroke-width="1.5" fill="none" opacity="0.71"/><path d="M283.3,248.9Q257.1,244.7 229.6,234.7" stroke="#d06a30" stroke-width="1.5" fill="none" opacity="0.70"/><path d="M321.6,196.2Q324.4,181.2 325.5,164.6" stroke="#d06a30" stroke-width="1.2" fill="none" opacity="0.64"/><path d="M367.1,265.5Q375.5,272.6 381.4,278.8" stroke="#d06a30" stroke-width="0.9" fill="none" opacity="0.51"/><path d="M321.1,211.1Q322.7,198.7 322.3,184.7" stroke="#d06a30" stroke-width="1.6" fill="none" opacity="0.79"/><path d="M353.2,268.6Q366.8,279.8 377.6,290.4" stroke="#d06a30" stroke-width="1.3" fill="none" opacity="0.74"/><path d="M277.9,247.9Q257.0,249.7 234.1,250.8" stroke="#d06a30" stroke-width="1.5" fill="none" opacity="0.63"/><path d="M350.8,272.5Q369.7,285.6 387.3,296.2" stroke="#d06a30" stroke-width="1.6" fill="none" opacity="0.42"/><path d="M272.2,256.2Q263.5,257.5 252.8,256.6" stroke="#d06a30" stroke-width="1.1" fill="none" opacity="0.49"/><path d="M364.1,271.3Q382.3,281.7 398.5,290.9" stroke="#d06a30" stroke-width="1.1" fill="none" opacity="0.44"/><path d="M345.4,297.0Q351.2,308.5 354.8,318.6" stroke="#d06a30" stroke-width="0.9" fill="none" opacity="0.50"/><path d="M372.0,272.4Q381.0,276.4 388.0,278.7" stroke="#d06a30" stroke-width="0.9" fill="none" opacity="0.58"/><path d="M364.6,242.6Q374.8,242.1 383.0,239.7" stroke="#d06a30" stroke-width="1.3" fill="none" opacity="0.54"/><circle cx="423.0" cy="276.1" r="1.0" fill="#8a3a18" opacity="0.78"/><circle cx="318.3" cy="158.2" r="1.2" fill="#d4784a" opacity="0.69"/><circle cx="320.3" cy="147.9" r="1.4" fill="#8a3a18" opacity="0.88"/><circle cx="305.5" cy="353.1" r="0.9" fill="#6a2810" opacity="0.44"/><circle cx="230.7" cy="236.3" r="1.0" fill="#d4784a" opacity="0.63"/><circle cx="234.9" cy="277.3" r="1.2" fill="#8a3a18" opacity="0.85"/><circle cx="248.9" cy="319.9" r="0.6" fill="#c4602c" opacity="0.55"/><circle cx="424.4" cy="248.7" r="1.1" fill="#6a2810" opacity="0.84"/><circle cx="420.3" cy="234.8" r="1.1" fill="#c4602c" opacity="0.58"/><circle cx="318.8" cy="346.6" r="0.7" fill="#d4784a" opacity="0.79"/><circle cx="278.4" cy="344.9" r="1.3" fill="#d4784a" opacity="0.56"/><circle cx="387.4" cy="173.1" r="1.5" fill="#c4602c" opacity="0.82"/><circle cx="422.0" cy="234.2" r="1.1" fill="#8a3a18" opacity="0.71"/><circle cx="219.5" cy="244.8" r="0.6" fill="#8a3a18" opacity="0.68"/><circle cx="219.5" cy="266.9" r="0.9" fill="#c4602c" opacity="0.65"/><circle cx="232.8" cy="284.8" r="0.6" fill="#d4784a" opacity="0.83"/><circle cx="344.0" cy="161.0" r="1.1" fill="#d4784a" opacity="0.66"/><circle cx="331.1" cy="357.2" r="1.4" fill="#c4602c" opacity="0.41"/><circle cx="238.3" cy="292.3" r="1.4" fill="#c4602c" opacity="0.65"/><circle cx="403.5" cy="302.4" r="0.7" fill="#8a3a18" opacity="0.55"/><circle cx="416.6" cy="229.0" r="1.2" fill="#6a2810" opacity="0.61"/><circle cx="230.8" cy="248.4" r="0.9" fill="#c4602c" opacity="0.55"/><circle cx="394.5" cy="180.6" r="1.4" fill="#d4784a" opacity="0.54"/><circle cx="222.2" cy="267.4" r="1.1" fill="#6a2810" opacity="0.49"/><circle cx="224.0" cy="222.8" r="0.6" fill="#8a3a18" opacity="0.60"/><circle cx="276.1" cy="331.5" r="0.8" fill="#c4602c" opacity="0.83"/><circle cx="375.4" cy="342.6" r="0.5" fill="#8a3a18" opacity="0.74"/><circle cx="274.2" cy="331.7" r="1.4" fill="#d4784a" opacity="0.72"/><circle cx="416.0" cy="203.7" r="1.2" fill="#6a2810" opacity="0.40"/><circle cx="232.9" cy="292.2" r="1.3" fill="#8a3a18" opacity="0.66"/><circle cx="393.1" cy="185.0" r="0.5" fill="#d4784a" opacity="0.63"/><circle cx="416.3" cy="229.0" r="1.4" fill="#6a2810" opacity="0.82"/><circle cx="389.8" cy="178.5" r="0.7" fill="#6a2810" opacity="0.89"/><circle cx="307.0" cy="153.4" r="1.2" fill="#c4602c" opacity="0.42"/><circle cx="387.8" cy="323.2" r="0.9" fill="#d4784a" opacity="0.59"/><circle cx="414.2" cy="206.1" r="1.5" fill="#8a3a18" opacity="0.55"/><circle cx="375.7" cy="174.8" r="1.3" fill="#d4784a" opacity="0.67"/><circle cx="315.2" cy="349.6" r="0.5" fill="#d4784a" opacity="0.48"/><circle cx="405.4" cy="190.1" r="1.3" fill="#6a2810" opacity="0.89"/><circle cx="228.5" cy="239.7" r="1.3" fill="#d4784a" opacity="0.48"/><circle cx="369.6" cy="168.6" r="1.2" fill="#d4784a" opacity="0.69"/><circle cx="244.8" cy="180.7" r="0.5" fill="#6a2810" opacity="0.84"/><circle cx="265.2" cy="326.3" r="1.4" fill="#d4784a" opacity="0.87"/><circle cx="391.0" cy="317.1" r="1.0" fill="#d4784a" opacity="0.74"/><circle cx="232.7" cy="205.2" r="1.3" fill="#8a3a18" opacity="0.48"/><circle cx="426.1" cy="251.5" r="0.9" fill="#6a2810" opacity="0.50"/><circle cx="357.3" cy="350.4" r="0.9" fill="#d4784a" opacity="0.73"/><circle cx="345.1" cy="352.4" r="1.5" fill="#6a2810" opacity="0.61"/><circle cx="408.9" cy="207.0" r="0.5" fill="#6a2810" opacity="0.82"/><circle cx="291.7" cy="152.5" r="0.6" fill="#8a3a18" opacity="0.72"/><circle cx="326.7" cy="352.2" r="0.6" fill="#c4602c" opacity="0.86"/><circle cx="405.3" cy="199.3" r="0.6" fill="#6a2810" opacity="0.77"/><circle cx="283.4" cy="341.0" r="1.4" fill="#d4784a" opacity="0.87"/><circle cx="399.6" cy="190.8" r="1.0" fill="#d4784a" opacity="0.62"/><circle cx="344.6" cy="342.1" r="1.1" fill="#c4602c" opacity="0.60"/><circle cx="417.5" cy="283.8" r="1.0" fill="#6a2810" opacity="0.68"/><circle cx="387.8" cy="331.3" r="1.3" fill="#d4784a" opacity="0.69"/><circle cx="246.3" cy="180.8" r="1.6" fill="#c4602c" opacity="0.59"/><circle cx="421.3" cy="230.0" r="1.0" fill="#c4602c" opacity="0.62"/><circle cx="238.8" cy="300.5" r="1.5" fill="#d4784a" opacity="0.42"/><circle cx="392.0" cy="328.8" r="1.4" fill="#c4602c" opacity="0.60"/><circle cx="376.6" cy="332.6" r="0.9" fill="#6a2810" opacity="0.82"/><circle cx="388.1" cy="334.9" r="0.5" fill="#6a2810" opacity="0.67"/><circle cx="333.0" cy="158.8" r="1.5" fill="#c4602c" opacity="0.82"/><circle cx="383.5" cy="326.4" r="1.2" fill="#6a2810" opacity="0.52"/><circle cx="375.7" cy="343.2" r="0.6" fill="#c4602c" opacity="0.86"/><circle cx="248.7" cy="323.1" r="0.7" fill="#8a3a18" opacity="0.60"/><circle cx="380.5" cy="176.1" r="0.7" fill="#c4602c" opacity="0.76"/><circle cx="424.9" cy="266.2" r="0.7" fill="#d4784a" opacity="0.65"/><circle cx="314.4" cy="153.9" r="1.4" fill="#d4784a" opacity="0.65"/><circle cx="426.9" cy="246.7" r="0.8" fill="#d4784a" opacity="0.75"/><circle cx="281.8" cy="335.6" r="1.3" fill="#8a3a18" opacity="0.70"/><circle cx="354.3" cy="342.8" r="1.0" fill="#8a3a18" opacity="0.71"/><circle cx="370.7" cy="339.7" r="1.3" fill="#d4784a" opacity="0.59"/><circle cx="421.3" cy="282.6" r="1.2" fill="#6a2810" opacity="0.64"/><circle cx="418.7" cy="223.9" r="1.1" fill="#c4602c" opacity="0.84"/><circle cx="250.3" cy="183.3" r="1.5" fill="#d4784a" opacity="0.87"/><circle cx="235.9" cy="302.2" r="1.4" fill="#d4784a" opacity="0.75"/><circle cx="268.4" cy="333.9" r="1.1" fill="#d4784a" opacity="0.74"/><circle cx="234.2" cy="304.3" r="1.5" fill="#8a3a18" opacity="0.62"/><circle cx="237.4" cy="294.4" r="1.2" fill="#c4602c" opacity="0.56"/><circle cx="376.6" cy="341.5" r="0.6" fill="#c4602c" opacity="0.87"/><circle cx="262.7" cy="338.0" r="1.3" fill="#6a2810" opacity="0.73"/><circle cx="275.7" cy="332.0" r="1.2" fill="#d4784a" opacity="0.58"/><circle cx="230.2" cy="289.4" r="1.4" fill="#d4784a" opacity="0.83"/><circle cx="426.7" cy="238.2" r="0.8" fill="#c4602c" opacity="0.68"/><circle cx="323.4" cy="151.0" r="1.2" fill="#d4784a" opacity="0.68"/><circle cx="249.8" cy="186.4" r="0.8" fill="#8a3a18" opacity="0.61"/><circle cx="417.5" cy="266.1" r="0.6" fill="#d4784a" opacity="0.89"/><circle cx="271.3" cy="334.5" r="0.7" fill="#c4602c" opacity="0.52"/><circle cx="330.1" cy="356.8" r="0.7" fill="#d4784a" opacity="0.75"/><circle cx="410.8" cy="190.1" r="0.9" fill="#d4784a" opacity="0.83"/><circle cx="342.7" cy="347.3" r="0.6" fill="#c4602c" opacity="0.47"/><circle cx="289.1" cy="163.5" r="1.4" fill="#c4602c" opacity="0.51"/><circle cx="275.2" cy="340.8" r="0.8" fill="#c4602c" opacity="0.59"/><circle cx="383.0" cy="335.0" r="0.8" fill="#d4784a" opacity="0.48"/><circle cx="428.2" cy="262.3" r="0.6" fill="#8a3a18" opacity="0.68"/><circle cx="279.4" cy="166.8" r="0.6" fill="#6a2810" opacity="0.60"/><circle cx="399.7" cy="192.2" r="0.7" fill="#8a3a18" opacity="0.72"/><circle cx="268.7" cy="168.8" r="1.0" fill="#8a3a18" opacity="0.54"/><circle cx="371.4" cy="338.4" r="1.5" fill="#8a3a18" opacity="0.88"/><circle cx="297.2" cy="343.8" r="1.2" fill="#6a2810" opacity="0.41"/><circle cx="405.6" cy="298.3" r="0.9" fill="#c4602c" opacity="0.70"/><circle cx="398.0" cy="327.8" r="1.3" fill="#8a3a18" opacity="0.71"/><circle cx="403.0" cy="313.0" r="0.9" fill="#8a3a18" opacity="0.67"/><circle cx="402.3" cy="189.6" r="0.8" fill="#c4602c" opacity="0.46"/><circle cx="226.4" cy="273.0" r="0.6" fill="#8a3a18" opacity="0.65"/><circle cx="295.7" cy="163.1" r="1.1" fill="#6a2810" opacity="0.80"/><circle cx="352.5" cy="157.3" r="0.8" fill="#8a3a18" opacity="0.66"/><circle cx="403.2" cy="203.4" r="1.5" fill="#8a3a18" opacity="0.43"/><circle cx="388.0" cy="181.6" r="1.5" fill="#8a3a18" opacity="0.42"/><circle cx="428.6" cy="252.1" r="0.8" fill="#6a2810" opacity="0.86"/><circle cx="249.5" cy="309.9" r="0.6" fill="#c4602c" opacity="0.56"/><circle cx="419.5" cy="281.0" r="1.2" fill="#c4602c" opacity="0.55"/><circle cx="262.8" cy="337.3" r="1.2" fill="#8a3a18" opacity="0.43"/><circle cx="306.9" cy="151.0" r="1.4" fill="#6a2810" opacity="0.65"/><circle cx="418.0" cy="250.0" r="1.2" fill="#c4602c" opacity="0.51"/><circle cx="418.0" cy="298.2" r="1.2" fill="#c4602c" opacity="0.81"/><circle cx="287.2" cy="347.3" r="0.9" fill="#8a3a18" opacity="0.44"/><circle cx="241.0" cy="311.1" r="1.1" fill="#6a2810" opacity="0.87"/><circle cx="323.0" cy="158.7" r="1.6" fill="#d4784a" opacity="0.61"/><circle cx="382.9" cy="176.5" r="0.7" fill="#d4784a" opacity="0.45"/><circle cx="291.0" cy="349.9" r="0.9" fill="#d4784a" opacity="0.88"/><circle cx="295.5" cy="154.4" r="1.2" fill="#d4784a" opacity="0.66"/><circle cx="302.6" cy="149.3" r="0.8" fill="#c4602c" opacity="0.57"/><circle cx="383.8" cy="336.1" r="1.2" fill="#6a2810" opacity="0.49"/><circle cx="370.7" cy="334.5" r="1.1" fill="#c4602c" opacity="0.58"/><circle cx="402.3" cy="312.7" r="1.0" fill="#d4784a" opacity="0.90"/><circle cx="228.1" cy="241.7" r="0.7" fill="#c4602c" opacity="0.59"/><circle cx="355.6" cy="346.2" r="0.9" fill="#8a3a18" opacity="0.81"/><circle cx="396.1" cy="176.1" r="1.2" fill="#d4784a" opacity="0.56"/><circle cx="264.8" cy="164.3" r="0.9" fill="#d4784a" opacity="0.53"/><circle cx="353.8" cy="163.0" r="1.6" fill="#8a3a18" opacity="0.75"/><circle cx="318.7" cy="344.8" r="1.5" fill="#6a2810" opacity="0.52"/><circle cx="299.7" cy="159.0" r="1.3" fill="#6a2810" opacity="0.63"/><circle cx="266.3" cy="165.2" r="1.5" fill="#d4784a" opacity="0.43"/><circle cx="220.5" cy="269.5" r="1.3" fill="#8a3a18" opacity="0.59"/><circle cx="227.4" cy="236.8" r="1.0" fill="#d4784a" opacity="0.51"/><circle cx="427.7" cy="263.6" r="1.5" fill="#c4602c" opacity="0.52"/><circle cx="414.8" cy="229.0" r="1.3" fill="#d4784a" opacity="0.52"/><circle cx="389.2" cy="175.1" r="1.0" fill="#8a3a18" opacity="0.77"/><circle cx="240.9" cy="307.1" r="0.6" fill="#c4602c" opacity="0.51"/><circle cx="315.7" cy="153.4" r="1.2" fill="#6a2810" opacity="0.46"/><circle cx="295.1" cy="347.0" r="1.5" fill="#8a3a18" opacity="0.46"/><circle cx="288.0" cy="339.6" r="1.5" fill="#6a2810" opacity="0.86"/><circle cx="424.3" cy="269.4" r="0.9" fill="#c4602c" opacity="0.55"/><circle cx="410.7" cy="195.5" r="0.9" fill="#8a3a18" opacity="0.66"/><circle cx="282.1" cy="341.9" r="1.4" fill="#c4602c" opacity="0.74"/><circle cx="387.0" cy="335.2" r="0.6" fill="#d4784a" opacity="0.68"/><circle cx="258.9" cy="182.8" r="1.3" fill="#8a3a18" opacity="0.44"/><circle cx="231.6" cy="221.9" r="1.5" fill="#c4602c" opacity="0.86"/><circle cx="393.8" cy="326.5" r="0.9" fill="#8a3a18" opacity="0.58"/><circle cx="346.3" cy="350.3" r="0.7" fill="#c4602c" opacity="0.72"/><circle cx="242.1" cy="308.6" r="0.6" fill="#8a3a18" opacity="0.84"/><circle cx="408.4" cy="213.1" r="1.0" fill="#6a2810" opacity="0.65"/><circle cx="275.2" cy="161.8" r="1.4" fill="#d4784a" opacity="0.62"/><circle cx="254.2" cy="326.1" r="0.8" fill="#c4602c" opacity="0.43"/><circle cx="399.3" cy="312.3" r="0.8" fill="#d4784a" opacity="0.75"/><circle cx="226.3" cy="290.6" r="0.7" fill="#8a3a18" opacity="0.82"/><circle cx="244.0" cy="192.6" r="0.7" fill="#6a2810" opacity="0.71"/><circle cx="250.2" cy="308.8" r="1.3" fill="#8a3a18" opacity="0.89"/><circle cx="412.7" cy="213.6" r="1.3" fill="#8a3a18" opacity="0.59"/><circle cx="230.6" cy="202.9" r="1.4" fill="#6a2810" opacity="0.89"/><circle cx="383.5" cy="324.7" r="1.5" fill="#c4602c" opacity="0.44"/><circle cx="421.7" cy="227.5" r="1.1" fill="#d4784a" opacity="0.85"/><circle cx="391.0" cy="318.4" r="0.9" fill="#6a2810" opacity="0.63"/><circle cx="388.1" cy="184.7" r="1.5" fill="#6a2810" opacity="0.48"/><circle cx="390.7" cy="325.3" r="0.7" fill="#c4602c" opacity="0.53"/><circle cx="223.2" cy="218.4" r="1.2" fill="#8a3a18" opacity="0.48"/><circle cx="398.7" cy="185.0" r="1.2" fill="#d4784a" opacity="0.90"/><circle cx="387.1" cy="173.3" r="0.9" fill="#8a3a18" opacity="0.73"/><circle cx="257.6" cy="322.3" r="1.1" fill="#d4784a" opacity="0.74"/><circle cx="348.8" cy="345.1" r="1.3" fill="#d4784a" opacity="0.41"/><circle cx="352.8" cy="347.9" r="1.2" fill="#8a3a18" opacity="0.73"/><circle cx="292.4" cy="345.6" r="1.6" fill="#8a3a18" opacity="0.81"/><circle cx="311.8" cy="357.1" r="1.5" fill="#c4602c" opacity="0.81"/><circle cx="361.7" cy="152.7" r="1.0" fill="#8a3a18" opacity="0.69"/><circle cx="324.2" cy="346.0" r="1.2" fill="#8a3a18" opacity="0.78"/><circle cx="420.3" cy="265.5" r="1.6" fill="#6a2810" opacity="0.65"/><circle cx="374.7" cy="171.4" r="1.6" fill="#d4784a" opacity="0.73"/><circle cx="229.9" cy="289.3" r="1.5" fill="#6a2810" opacity="0.69"/><circle cx="331.8" cy="353.9" r="1.2" fill="#6a2810" opacity="0.87"/><circle cx="420.8" cy="263.9" r="0.8" fill="#8a3a18" opacity="0.61"/><circle cx="357.3" cy="338.7" r="0.7" fill="#c4602c" opacity="0.51"/><circle cx="415.3" cy="199.0" r="1.4" fill="#c4602c" opacity="0.53"/><circle cx="221.0" cy="266.5" r="1.0" fill="#8a3a18" opacity="0.82"/><circle cx="304.5" cy="158.3" r="1.2" fill="#c4602c" opacity="0.64"/><circle cx="308.2" cy="151.5" r="1.3" fill="#6a2810" opacity="0.51"/><circle cx="260.2" cy="326.9" r="0.7" fill="#8a3a18" opacity="0.64"/><circle cx="423.5" cy="250.6" r="1.0" fill="#c4602c" opacity="0.61"/><circle cx="418.6" cy="270.9" r="1.4" fill="#d4784a" opacity="0.81"/><circle cx="294.7" cy="353.5" r="1.0" fill="#c4602c" opacity="0.42"/><circle cx="428.1" cy="229.8" r="0.9" fill="#c4602c" opacity="0.83"/><circle cx="352.7" cy="162.1" r="1.4" fill="#d4784a" opacity="0.55"/><circle cx="318.2" cy="146.4" r="0.9" fill="#c4602c" opacity="0.58"/><circle cx="235.8" cy="307.8" r="0.7" fill="#d4784a" opacity="0.58"/><circle cx="407.5" cy="301.1" r="1.5" fill="#8a3a18" opacity="0.68"/><circle cx="235.9" cy="207.0" r="1.3" fill="#6a2810" opacity="0.74"/><circle cx="327.2" cy="148.1" r="1.4" fill="#d4784a" opacity="0.81"/><circle cx="329.6" cy="151.1" r="1.1" fill="#c4602c" opacity="0.67"/><circle cx="227.9" cy="215.5" r="1.2" fill="#c4602c" opacity="0.65"/><circle cx="244.0" cy="304.6" r="1.2" fill="#d4784a" opacity="0.71"/><circle cx="379.8" cy="164.8" r="1.3" fill="#8a3a18" opacity="0.72"/><circle cx="407.0" cy="207.1" r="1.6" fill="#6a2810" opacity="0.43"/><circle cx="251.2" cy="324.0" r="1.6" fill="#c4602c" opacity="0.51"/><circle cx="379.0" cy="172.8" r="0.7" fill="#d4784a" opacity="0.60"/><circle cx="297.4" cy="154.2" r="1.1" fill="#8a3a18" opacity="0.67"/><circle cx="277.5" cy="336.0" r="0.9" fill="#6a2810" opacity="0.46"/><circle cx="265.4" cy="339.9" r="1.0" fill="#6a2810" opacity="0.76"/><circle cx="400.8" cy="196.4" r="1.4" fill="#c4602c" opacity="0.46"/><circle cx="290.3" cy="157.6" r="1.1" fill="#8a3a18" opacity="0.82"/><circle cx="219.0" cy="246.9" r="0.8" fill="#c4602c" opacity="0.87"/><circle cx="242.4" cy="308.9" r="1.4" fill="#8a3a18" opacity="0.81"/><circle cx="240.6" cy="209.2" r="1.2" fill="#d4784a" opacity="0.42"/><circle cx="345.6" cy="349.6" r="1.1" fill="#c4602c" opacity="0.77"/><circle cx="225.8" cy="282.2" r="1.0" fill="#8a3a18" opacity="0.75"/><circle cx="378.9" cy="336.2" r="1.2" fill="#6a2810" opacity="0.81"/><circle cx="348.9" cy="344.4" r="0.8" fill="#d4784a" opacity="0.47"/><circle cx="280.3" cy="339.4" r="0.8" fill="#8a3a18" opacity="0.42"/><circle cx="382.9" cy="325.9" r="1.1" fill="#6a2810" opacity="0.75"/><circle cx="291.0" cy="160.7" r="1.0" fill="#d4784a" opacity="0.41"/><circle cx="364.1" cy="158.9" r="1.2" fill="#d4784a" opacity="0.72"/><circle cx="400.6" cy="199.0" r="1.3" fill="#d4784a" opacity="0.45"/><circle cx="235.7" cy="303.4" r="1.2" fill="#8a3a18" opacity="0.79"/><circle cx="263.8" cy="333.6" r="0.7" fill="#d4784a" opacity="0.62"/><circle cx="232.1" cy="211.3" r="0.8" fill="#6a2810" opacity="0.64"/><circle cx="422.0" cy="212.6" r="1.4" fill="#8a3a18" opacity="0.57"/><circle cx="285.7" cy="153.7" r="1.1" fill="#8a3a18" opacity="0.87"/><circle cx="375.4" cy="163.6" r="1.5" fill="#6a2810" opacity="0.42"/><circle cx="231.9" cy="303.8" r="0.9" fill="#8a3a18" opacity="0.66"/><circle cx="233.0" cy="227.9" r="1.4" fill="#c4602c" opacity="0.78"/><circle cx="390.8" cy="180.0" r="0.9" fill="#6a2810" opacity="0.65"/><circle cx="250.6" cy="324.7" r="0.6" fill="#c4602c" opacity="0.56"/><circle cx="399.0" cy="184.8" r="1.1" fill="#8a3a18" opacity="0.56"/><circle cx="352.2" cy="350.6" r="1.5" fill="#c4602c" opacity="0.67"/><circle cx="408.6" cy="187.4" r="0.7" fill="#6a2810" opacity="0.83"/><circle cx="374.6" cy="331.7" r="0.8" fill="#8a3a18" opacity="0.42"/><circle cx="298.3" cy="341.4" r="1.0" fill="#6a2810" opacity="0.77"/><circle cx="226.1" cy="268.4" r="0.7" fill="#d4784a" opacity="0.43"/><circle cx="279.2" cy="335.3" r="1.2" fill="#d4784a" opacity="0.64"/><circle cx="380.1" cy="326.7" r="1.0" fill="#c4602c" opacity="0.66"/><circle cx="380.1" cy="337.1" r="1.2" fill="#c4602c" opacity="0.85"/><circle cx="368.6" cy="335.7" r="0.6" fill="#c4602c" opacity="0.87"/><circle cx="222.8" cy="244.7" r="1.0" fill="#c4602c" opacity="0.56"/><circle cx="357.1" cy="163.3" r="1.1" fill="#c4602c" opacity="0.41"/><circle cx="375.8" cy="333.9" r="1.4" fill="#d4784a" opacity="0.69"/><circle cx="427.2" cy="255.8" r="1.1" fill="#8a3a18" opacity="0.67"/><circle cx="392.5" cy="328.8" r="0.6" fill="#d4784a" opacity="0.65"/><circle cx="225.4" cy="245.2" r="0.7" fill="#8a3a18" opacity="0.71"/><circle cx="414.0" cy="220.8" r="1.1" fill="#6a2810" opacity="0.76"/><circle cx="425.2" cy="272.2" r="0.9" fill="#6a2810" opacity="0.74"/><circle cx="327.4" cy="152.8" r="0.7" fill="#6a2810" opacity="0.67"/><circle cx="425.9" cy="256.6" r="0.6" fill="#8a3a18" opacity="0.69"/><circle cx="306.0" cy="349.6" r="1.0" fill="#c4602c" opacity="0.44"/><circle cx="421.1" cy="244.4" r="0.7" fill="#8a3a18" opacity="0.86"/><circle cx="244.3" cy="187.8" r="1.0" fill="#6a2810" opacity="0.64"/><circle cx="418.5" cy="228.2" r="1.6" fill="#d4784a" opacity="0.62"/><circle cx="356.0" cy="348.9" r="1.4" fill="#8a3a18" opacity="0.60"/><circle cx="231.3" cy="279.1" r="0.8" fill="#c4602c" opacity="0.64"/><circle cx="413.4" cy="278.7" r="0.8" fill="#d4784a" opacity="0.70"/><circle cx="421.3" cy="210.0" r="0.8" fill="#6a2810" opacity="0.66"/><circle cx="381.4" cy="164.2" r="0.7" fill="#c4602c" opacity="0.74"/><circle cx="399.6" cy="305.0" r="0.9" fill="#c4602c" opacity="0.60"/><circle cx="416.5" cy="243.3" r="1.2" fill="#8a3a18" opacity="0.68"/><circle cx="237.3" cy="210.0" r="0.8" fill="#8a3a18" opacity="0.74"/><circle cx="420.1" cy="217.3" r="1.1" fill="#d4784a" opacity="0.71"/><circle cx="408.3" cy="298.4" r="0.6" fill="#d4784a" opacity="0.58"/><circle cx="256.2" cy="326.4" r="1.5" fill="#c4602c" opacity="0.82"/><circle cx="275.7" cy="172.0" r="0.8" fill="#6a2810" opacity="0.67"/><circle cx="301.3" cy="152.0" r="1.3" fill="#6a2810" opacity="0.53"/><circle cx="310.6" cy="158.2" r="1.0" fill="#8a3a18" opacity="0.43"/><circle cx="381.0" cy="330.5" r="0.6" fill="#8a3a18" opacity="0.70"/><circle cx="366.6" cy="168.3" r="0.8" fill="#d4784a" opacity="0.42"/><circle cx="225.3" cy="289.6" r="0.9" fill="#d4784a" opacity="0.51"/><circle cx="372.2" cy="333.8" r="1.0" fill="#c4602c" opacity="0.78"/><circle cx="359.2" cy="156.8" r="1.5" fill="#6a2810" opacity="0.54"/><circle cx="385.3" cy="321.2" r="0.9" fill="#8a3a18" opacity="0.56"/><circle cx="234.4" cy="225.5" r="0.9" fill="#8a3a18" opacity="0.52"/><circle cx="286.3" cy="348.4" r="1.2" fill="#6a2810" opacity="0.76"/><circle cx="417.7" cy="219.3" r="0.7" fill="#8a3a18" opacity="0.57"/><circle cx="249.3" cy="323.1" r="0.7" fill="#8a3a18" opacity="0.42"/><circle cx="383.3" cy="324.0" r="1.0" fill="#8a3a18" opacity="0.60"/><circle cx="275.6" cy="166.2" r="0.7" fill="#d4784a" opacity="0.63"/><circle cx="261.9" cy="170.9" r="1.5" fill="#c4602c" opacity="0.63"/><circle cx="228.4" cy="280.5" r="1.1" fill="#d4784a" opacity="0.64"/><circle cx="277.7" cy="160.5" r="1.0" fill="#8a3a18" opacity="0.42"/><circle cx="387.2" cy="183.0" r="0.8" fill="#c4602c" opacity="0.77"/><circle cx="411.0" cy="289.2" r="1.5" fill="#d4784a" opacity="0.57"/><circle cx="338.0" cy="349.1" r="0.8" fill="#c4602c" opacity="0.49"/><circle cx="388.3" cy="319.0" r="1.3" fill="#8a3a18" opacity="0.83"/><circle cx="389.4" cy="335.1" r="1.4" fill="#8a3a18" opacity="0.58"/><circle cx="339.7" cy="152.9" r="1.2" fill="#8a3a18" opacity="0.64"/><circle cx="279.3" cy="164.1" r="1.4" fill="#8a3a18" opacity="0.61"/><circle cx="231.1" cy="210.7" r="1.4" fill="#c4602c" opacity="0.89"/><circle cx="401.1" cy="180.3" r="0.8" fill="#6a2810" opacity="0.59"/><circle cx="283.6" cy="335.9" r="0.6" fill="#6a2810" opacity="0.49"/><circle cx="318.4" cy="155.9" r="1.1" fill="#d4784a" opacity="0.80"/><circle cx="343.8" cy="349.2" r="1.5" fill="#6a2810" opacity="0.55"/><circle cx="424.0" cy="246.0" r="0.5" fill="#8a3a18" opacity="0.50"/><circle cx="385.6" cy="174.0" r="0.8" fill="#6a2810" opacity="0.44"/><circle cx="344.8" cy="159.6" r="0.7" fill="#c4602c" opacity="0.62"/><circle cx="337.8" cy="149.7" r="0.7" fill="#d4784a" opacity="0.60"/><circle cx="297.6" cy="149.3" r="0.9" fill="#6a2810" opacity="0.79"/><circle cx="259.2" cy="325.5" r="1.5" fill="#c4602c" opacity="0.79"/><circle cx="240.4" cy="194.8" r="1.5" fill="#8a3a18" opacity="0.83"/><circle cx="239.0" cy="192.3" r="1.1" fill="#6a2810" opacity="0.70"/><circle cx="357.1" cy="153.9" r="1.3" fill="#d4784a" opacity="0.68"/><circle cx="367.6" cy="160.3" r="0.5" fill="#c4602c" opacity="0.41"/><circle cx="231.9" cy="218.9" r="1.0" fill="#d4784a" opacity="0.44"/><circle cx="300.3" cy="344.4" r="1.3" fill="#c4602c" opacity="0.46"/><circle cx="286.0" cy="343.4" r="1.2" fill="#6a2810" opacity="0.78"/><circle cx="422.0" cy="260.2" r="0.6" fill="#8a3a18" opacity="0.66"/><circle cx="339.3" cy="158.4" r="1.4" fill="#c4602c" opacity="0.62"/><circle cx="311.1" cy="354.3" r="0.9" fill="#d4784a" opacity="0.78"/><circle cx="237.2" cy="200.5" r="0.6" fill="#c4602c" opacity="0.45"/><circle cx="341.8" cy="349.9" r="1.2" fill="#d4784a" opacity="0.52"/><circle cx="422.2" cy="237.6" r="0.9" fill="#c4602c" opacity="0.41"/><circle cx="218.3" cy="243.4" r="1.5" fill="#c4602c" opacity="0.63"/><circle cx="226.0" cy="257.1" r="0.8" fill="#c4602c" opacity="0.52"/><circle cx="395.0" cy="318.1" r="1.6" fill="#d4784a" opacity="0.79"/></g></g><circle cx="322.0" cy="250.0" r="30.0" fill="url(#pg)" filter="url(#rough)"/><circle cx="407.0" cy="171.7" r="0.7" fill="#b46a42" opacity="0.55"/><circle cx="305.3" cy="366.2" r="0.3" fill="#b46a42" opacity="0.55"/><circle cx="296.5" cy="138.1" r="0.5" fill="#b46a42" opacity="0.55"/><circle cx="208.2" cy="238.7" r="0.5" fill="#b46a42" opacity="0.55"/><circle cx="442.6" cy="237.1" r="0.4" fill="#b46a42" opacity="0.55"/><circle cx="398.2" cy="348.1" r="1.1" fill="#b46a42" opacity="0.55"/><circle cx="381.8" cy="355.0" r="0.6" fill="#b46a42" opacity="0.55"/><circle cx="381.8" cy="356.3" r="0.5" fill="#b46a42" opacity="0.55"/><circle cx="244.3" cy="162.9" r="0.8" fill="#b46a42" opacity="0.55"/><circle cx="224.5" cy="305.9" r="1.1" fill="#b46a42" opacity="0.55"/><circle cx="434.2" cy="281.3" r="0.6" fill="#b46a42" opacity="0.55"/><circle cx="431.3" cy="201.4" r="0.6" fill="#b46a42" opacity="0.55"/><circle cx="423.0" cy="310.3" r="0.8" fill="#b46a42" opacity="0.55"/><circle cx="446.8" cy="243.4" r="1.0" fill="#b46a42" opacity="0.55"/><circle cx="435.5" cy="221.4" r="0.4" fill="#b46a42" opacity="0.55"/><circle cx="265.0" cy="155.7" r="0.7" fill="#b46a42" opacity="0.55"/><circle cx="372.7" cy="146.9" r="0.5" fill="#b46a42" opacity="0.55"/><circle cx="337.7" cy="369.4" r="0.8" fill="#b46a42" opacity="0.55"/><circle cx="305.1" cy="371.5" r="0.7" fill="#b46a42" opacity="0.55"/><circle cx="218.4" cy="291.1" r="0.7" fill="#b46a42" opacity="0.55"/><circle cx="259.8" cy="346.2" r="1.0" fill="#b46a42" opacity="0.55"/><circle cx="389.4" cy="156.8" r="0.5" fill="#b46a42" opacity="0.55"/><circle cx="336.7" cy="134.2" r="1.0" fill="#b46a42" opacity="0.55"/><circle cx="433.0" cy="202.1" r="0.6" fill="#b46a42" opacity="0.55"/><circle cx="206.1" cy="235.3" r="1.0" fill="#b46a42" opacity="0.55"/><circle cx="291.8" cy="364.2" r="0.6" fill="#b46a42" opacity="0.55"/><circle cx="345.3" cy="137.8" r="0.6" fill="#b46a42" opacity="0.55"/><circle cx="444.5" cy="270.2" r="0.4" fill="#b46a42" opacity="0.55"/><circle cx="434.6" cy="228.0" r="0.3" fill="#b46a42" opacity="0.55"/><circle cx="265.3" cy="352.4" r="1.0" fill="#b46a42" opacity="0.55"/><circle cx="432.6" cy="217.1" r="0.6" fill="#b46a42" opacity="0.55"/><circle cx="324.6" cy="370.7" r="0.5" fill="#b46a42" opacity="0.55"/><circle cx="307.4" cy="368.3" r="1.0" fill="#b46a42" opacity="0.55"/><circle cx="439.2" cy="220.4" r="0.9" fill="#b46a42" opacity="0.55"/><circle cx="344.7" cy="366.9" r="0.7" fill="#b46a42" opacity="0.55"/><circle cx="336.3" cy="365.1" r="0.3" fill="#b46a42" opacity="0.55"/><circle cx="225.1" cy="185.9" r="0.6" fill="#b46a42" opacity="0.55"/><circle cx="257.3" cy="150.8" r="0.5" fill="#b46a42" opacity="0.55"/><circle cx="246.3" cy="158.6" r="0.5" fill="#b46a42" opacity="0.55"/><circle cx="370.9" cy="147.6" r="0.5" fill="#b46a42" opacity="0.55"/><circle cx="309.9" cy="369.7" r="0.6" fill="#b46a42" opacity="0.55"/><circle cx="204.0" cy="271.2" r="0.4" fill="#b46a42" opacity="0.55"/><circle cx="270.1" cy="152.2" r="0.3" fill="#b46a42" opacity="0.55"/><circle cx="417.2" cy="183.9" r="0.9" fill="#b46a42" opacity="0.55"/><circle cx="441.0" cy="227.4" r="1.0" fill="#b46a42" opacity="0.55"/><circle cx="422" cy="308" r="1.8" fill="#6a2a10" opacity="0.8"/><circle cx="376" cy="154" r="1.3" fill="#6a2a10" opacity="0.7"/><circle cx="385" cy="162" r="1.3" fill="#6a2a10" opacity="0.7"/><circle cx="433" cy="250" r="1.3" fill="#6a2a10" opacity="0.7"/></g></svg>
<div class="a" style="left:111px;top:10.5px;width:99px;height:235px;background:rgba(253,253,253,0.94);border-radius:0 0 4px 4px;box-shadow:0 2px 7px rgba(0,0,0,0.5),0 0 0 0.5px rgba(0,0,0,0.3)"><div class="mi" style="top:1.88px"><span class="t">Mode</span><span class="arr" style="border-left-color:#222"></span></div><div class="sep" style="top:15.25px"></div><div class="mi hl" style="top:20.38px"><span class="t">Adjustments</span><span class="arr" style="border-left-color:#fff"></span></div><div class="sep" style="top:33.75px"></div><div class="mi" style="top:38.88px"><span class="t">Auto Tone</span><span class="k"><svg width="6" height="6" viewBox="0 0 10 10" style="display:inline-block;vertical-align:-0.5px;margin-right:0.1px"><path d="M5,0.7L9.5,5.3H7V9.3H3V5.3H0.5Z" fill="none" stroke="#1a1a1a" stroke-width="1.2" stroke-linejoin="miter"/></svg><svg width="6" height="6" viewBox="0 0 10 10" style="display:inline-block;vertical-align:-0.5px;margin-right:0.1px"><path d="M3.6,3.6H6.4V6.4H3.6Z M3.6,3.6V2.6A1.5,1.5 0 1 0 2.6,3.6H3.6 M6.4,3.6H7.4A1.5,1.5 0 1 0 6.4,2.6V3.6 M6.4,6.4V7.4A1.5,1.5 0 1 0 7.4,6.4H6.4 M3.6,6.4H2.6A1.5,1.5 0 1 0 3.6,7.4V6.4" fill="none" stroke="#1a1a1a" stroke-width="1.2"/></svg><span style="-webkit-text-stroke:0.3px #1a1a1a">L</span></span></div><div class="mi" style="top:48.12px"><span class="t">Auto Contrast</span><span class="k"><svg width="6" height="6" viewBox="0 0 10 10" style="display:inline-block;vertical-align:-0.5px;margin-right:0.1px"><path d="M0.8,2.4H3.8L6.6,8.4H9.4 M5.8,2.4H9.4" fill="none" stroke="#1a1a1a" stroke-width="1.4"/></svg><svg width="6" height="6" viewBox="0 0 10 10" style="display:inline-block;vertical-align:-0.5px;margin-right:0.1px"><path d="M5,0.7L9.5,5.3H7V9.3H3V5.3H0.5Z" fill="none" stroke="#1a1a1a" stroke-width="1.2" stroke-linejoin="miter"/></svg><svg width="6" height="6" viewBox="0 0 10 10" style="display:inline-block;vertical-align:-0.5px;margin-right:0.1px"><path d="M3.6,3.6H6.4V6.4H3.6Z M3.6,3.6V2.6A1.5,1.5 0 1 0 2.6,3.6H3.6 M6.4,3.6H7.4A1.5,1.5 0 1 0 6.4,2.6V3.6 M6.4,6.4V7.4A1.5,1.5 0 1 0 7.4,6.4H6.4 M3.6,6.4H2.6A1.5,1.5 0 1 0 3.6,7.4V6.4" fill="none" stroke="#1a1a1a" stroke-width="1.2"/></svg><span style="-webkit-text-stroke:0.3px #1a1a1a">L</span></span></div><div class="mi" style="top:57.38px"><span class="t">Auto Color</span><span class="k"><svg width="6" height="6" viewBox="0 0 10 10" style="display:inline-block;vertical-align:-0.5px;margin-right:0.1px"><path d="M5,0.7L9.5,5.3H7V9.3H3V5.3H0.5Z" fill="none" stroke="#1a1a1a" stroke-width="1.2" stroke-linejoin="miter"/></svg><svg width="6" height="6" viewBox="0 0 10 10" style="display:inline-block;vertical-align:-0.5px;margin-right:0.1px"><path d="M3.6,3.6H6.4V6.4H3.6Z M3.6,3.6V2.6A1.5,1.5 0 1 0 2.6,3.6H3.6 M6.4,3.6H7.4A1.5,1.5 0 1 0 6.4,2.6V3.6 M6.4,6.4V7.4A1.5,1.5 0 1 0 7.4,6.4H6.4 M3.6,6.4H2.6A1.5,1.5 0 1 0 3.6,7.4V6.4" fill="none" stroke="#1a1a1a" stroke-width="1.2"/></svg><span style="-webkit-text-stroke:0.3px #1a1a1a">B</span></span></div><div class="sep" style="top:70.75px"></div><div class="mi" style="top:75.88px"><span class="t">Image Size...</span><span class="k"><svg width="6" height="6" viewBox="0 0 10 10" style="display:inline-block;vertical-align:-0.5px;margin-right:0.1px"><path d="M0.8,2.4H3.8L6.6,8.4H9.4 M5.8,2.4H9.4" fill="none" stroke="#1a1a1a" stroke-width="1.4"/></svg><svg width="6" height="6" viewBox="0 0 10 10" style="display:inline-block;vertical-align:-0.5px;margin-right:0.1px"><path d="M3.6,3.6H6.4V6.4H3.6Z M3.6,3.6V2.6A1.5,1.5 0 1 0 2.6,3.6H3.6 M6.4,3.6H7.4A1.5,1.5 0 1 0 6.4,2.6V3.6 M6.4,6.4V7.4A1.5,1.5 0 1 0 7.4,6.4H6.4 M3.6,6.4H2.6A1.5,1.5 0 1 0 3.6,7.4V6.4" fill="none" stroke="#1a1a1a" stroke-width="1.2"/></svg><span style="-webkit-text-stroke:0.3px #1a1a1a">I</span></span></div><div class="mi" style="top:85.12px"><span class="t">Canvas Size...</span><span class="k"><svg width="6" height="6" viewBox="0 0 10 10" style="display:inline-block;vertical-align:-0.5px;margin-right:0.1px"><path d="M0.8,2.4H3.8L6.6,8.4H9.4 M5.8,2.4H9.4" fill="none" stroke="#1a1a1a" stroke-width="1.4"/></svg><svg width="6" height="6" viewBox="0 0 10 10" style="display:inline-block;vertical-align:-0.5px;margin-right:0.1px"><path d="M3.6,3.6H6.4V6.4H3.6Z M3.6,3.6V2.6A1.5,1.5 0 1 0 2.6,3.6H3.6 M6.4,3.6H7.4A1.5,1.5 0 1 0 6.4,2.6V3.6 M6.4,6.4V7.4A1.5,1.5 0 1 0 7.4,6.4H6.4 M3.6,6.4H2.6A1.5,1.5 0 1 0 3.6,7.4V6.4" fill="none" stroke="#1a1a1a" stroke-width="1.2"/></svg><span style="-webkit-text-stroke:0.3px #1a1a1a">C</span></span></div><div class="mi" style="top:94.38px"><span class="t">Image Rotation</span><span class="arr" style="border-left-color:#222"></span></div><div class="mi dis" style="top:103.62px"><span class="t">Crop</span></div><div class="mi" style="top:112.88px"><span class="t">Trim...</span></div><div class="mi dis" style="top:122.12px"><span class="t">Reveal All</span></div><div class="sep" style="top:135.50px"></div><div class="mi" style="top:140.62px"><span class="t">Duplicate...</span></div><div class="mi" style="top:149.88px"><span class="t">Apply Image...</span></div><div class="mi" style="top:159.12px"><span class="t">Calculations...</span></div><div class="sep" style="top:172.50px"></div><div class="mi dis" style="top:177.62px"><span class="t">Variables</span><span class="arr" style="border-left-color:#b0b0b0"></span></div><div class="mi dis" style="top:186.88px"><span class="t">Apply Data Set...</span></div><div class="sep" style="top:200.25px"></div><div class="mi dis" style="top:205.38px"><span class="t">Trap...</span></div><div class="sep" style="top:218.75px"></div><div class="mi" style="top:223.88px"><span class="t">Analysis</span><span class="arr" style="border-left-color:#222"></span></div></div>
<div class="a" style="left:210.5px;top:28.8px;width:104px;height:244.7px;background:rgba(253,253,253,0.94);border-radius:0 0 4px 4px;box-shadow:0 2px 7px rgba(0,0,0,0.5),0 0 0 0.5px rgba(0,0,0,0.3)"><div class="mi" style="top:2.57px"><span class="t">Brightness/Contrast...</span></div><div class="mi" style="top:11.82px"><span class="t">Levels...</span><span class="k"><svg width="6" height="6" viewBox="0 0 10 10" style="display:inline-block;vertical-align:-0.5px;margin-right:0.1px"><path d="M3.6,3.6H6.4V6.4H3.6Z M3.6,3.6V2.6A1.5,1.5 0 1 0 2.6,3.6H3.6 M6.4,3.6H7.4A1.5,1.5 0 1 0 6.4,2.6V3.6 M6.4,6.4V7.4A1.5,1.5 0 1 0 7.4,6.4H6.4 M3.6,6.4H2.6A1.5,1.5 0 1 0 3.6,7.4V6.4" fill="none" stroke="#1a1a1a" stroke-width="1.2"/></svg><span style="-webkit-text-stroke:0.3px #1a1a1a">L</span></span></div><div class="mi" style="top:21.06px"><span class="t">Curves...</span><span class="k"><svg width="6" height="6" viewBox="0 0 10 10" style="display:inline-block;vertical-align:-0.5px;margin-right:0.1px"><path d="M3.6,3.6H6.4V6.4H3.6Z M3.6,3.6V2.6A1.5,1.5 0 1 0 2.6,3.6H3.6 M6.4,3.6H7.4A1.5,1.5 0 1 0 6.4,2.6V3.6 M6.4,6.4V7.4A1.5,1.5 0 1 0 7.4,6.4H6.4 M3.6,6.4H2.6A1.5,1.5 0 1 0 3.6,7.4V6.4" fill="none" stroke="#1a1a1a" stroke-width="1.2"/></svg><span style="-webkit-text-stroke:0.3px #1a1a1a">M</span></span></div><div class="mi" style="top:30.30px"><span class="t">Exposure...</span></div><div class="sep" style="top:43.66px"></div><div class="mi" style="top:48.78px"><span class="t">Vibrance...</span></div><div class="mi" style="top:58.02px"><span class="t">Hue/Saturation...</span><span class="k"><svg width="6" height="6" viewBox="0 0 10 10" style="display:inline-block;vertical-align:-0.5px;margin-right:0.1px"><path d="M3.6,3.6H6.4V6.4H3.6Z M3.6,3.6V2.6A1.5,1.5 0 1 0 2.6,3.6H3.6 M6.4,3.6H7.4A1.5,1.5 0 1 0 6.4,2.6V3.6 M6.4,6.4V7.4A1.5,1.5 0 1 0 7.4,6.4H6.4 M3.6,6.4H2.6A1.5,1.5 0 1 0 3.6,7.4V6.4" fill="none" stroke="#1a1a1a" stroke-width="1.2"/></svg><span style="-webkit-text-stroke:0.3px #1a1a1a">U</span></span></div><div class="mi" style="top:67.26px"><span class="t">Color Balance...</span><span class="k"><svg width="6" height="6" viewBox="0 0 10 10" style="display:inline-block;vertical-align:-0.5px;margin-right:0.1px"><path d="M3.6,3.6H6.4V6.4H3.6Z M3.6,3.6V2.6A1.5,1.5 0 1 0 2.6,3.6H3.6 M6.4,3.6H7.4A1.5,1.5 0 1 0 6.4,2.6V3.6 M6.4,6.4V7.4A1.5,1.5 0 1 0 7.4,6.4H6.4 M3.6,6.4H2.6A1.5,1.5 0 1 0 3.6,7.4V6.4" fill="none" stroke="#1a1a1a" stroke-width="1.2"/></svg><span style="-webkit-text-stroke:0.3px #1a1a1a">B</span></span></div><div class="mi" style="top:76.50px"><span class="t">Black &amp; White...</span><span class="k"><svg width="6" height="6" viewBox="0 0 10 10" style="display:inline-block;vertical-align:-0.5px;margin-right:0.1px"><path d="M0.8,2.4H3.8L6.6,8.4H9.4 M5.8,2.4H9.4" fill="none" stroke="#1a1a1a" stroke-width="1.4"/></svg><svg width="6" height="6" viewBox="0 0 10 10" style="display:inline-block;vertical-align:-0.5px;margin-right:0.1px"><path d="M5,0.7L9.5,5.3H7V9.3H3V5.3H0.5Z" fill="none" stroke="#1a1a1a" stroke-width="1.2" stroke-linejoin="miter"/></svg><svg width="6" height="6" viewBox="0 0 10 10" style="display:inline-block;vertical-align:-0.5px;margin-right:0.1px"><path d="M3.6,3.6H6.4V6.4H3.6Z M3.6,3.6V2.6A1.5,1.5 0 1 0 2.6,3.6H3.6 M6.4,3.6H7.4A1.5,1.5 0 1 0 6.4,2.6V3.6 M6.4,6.4V7.4A1.5,1.5 0 1 0 7.4,6.4H6.4 M3.6,6.4H2.6A1.5,1.5 0 1 0 3.6,7.4V6.4" fill="none" stroke="#1a1a1a" stroke-width="1.2"/></svg><span style="-webkit-text-stroke:0.3px #1a1a1a">B</span></span></div><div class="mi" style="top:85.73px"><span class="t">Photo Filter...</span></div><div class="mi" style="top:94.98px"><span class="t">Channel Mixer...</span></div><div class="mi" style="top:104.21px"><span class="t">Color Lookup...</span></div><div class="sep" style="top:117.58px"></div><div class="mi" style="top:122.70px"><span class="t">Invert</span><span class="k"><svg width="6" height="6" viewBox="0 0 10 10" style="display:inline-block;vertical-align:-0.5px;margin-right:0.1px"><path d="M3.6,3.6H6.4V6.4H3.6Z M3.6,3.6V2.6A1.5,1.5 0 1 0 2.6,3.6H3.6 M6.4,3.6H7.4A1.5,1.5 0 1 0 6.4,2.6V3.6 M6.4,6.4V7.4A1.5,1.5 0 1 0 7.4,6.4H6.4 M3.6,6.4H2.6A1.5,1.5 0 1 0 3.6,7.4V6.4" fill="none" stroke="#1a1a1a" stroke-width="1.2"/></svg><span style="-webkit-text-stroke:0.3px #1a1a1a">I</span></span></div><div class="mi" style="top:131.94px"><span class="t">Posterize...</span></div><div class="mi" style="top:141.17px"><span class="t">Threshold...</span></div><div class="mi" style="top:150.41px"><span class="t">Gradient Map...</span></div><div class="mi" style="top:159.66px"><span class="t">Selective Color...</span></div><div class="sep" style="top:173.02px"></div><div class="mi" style="top:178.13px"><span class="t">Shadows/Highlights...</span></div><div class="mi" style="top:187.38px"><span class="t">HDR Toning...</span></div><div class="sep" style="top:200.74px"></div><div class="mi hl" style="top:205.85px"><span class="t">Desaturate</span><span class="k"><svg width="6" height="6" viewBox="0 0 10 10" style="display:inline-block;vertical-align:-0.5px;margin-right:0.1px"><path d="M5,0.7L9.5,5.3H7V9.3H3V5.3H0.5Z" fill="none" stroke="#fff" stroke-width="1.2" stroke-linejoin="miter"/></svg><svg width="6" height="6" viewBox="0 0 10 10" style="display:inline-block;vertical-align:-0.5px;margin-right:0.1px"><path d="M3.6,3.6H6.4V6.4H3.6Z M3.6,3.6V2.6A1.5,1.5 0 1 0 2.6,3.6H3.6 M6.4,3.6H7.4A1.5,1.5 0 1 0 6.4,2.6V3.6 M6.4,6.4V7.4A1.5,1.5 0 1 0 7.4,6.4H6.4 M3.6,6.4H2.6A1.5,1.5 0 1 0 3.6,7.4V6.4" fill="none" stroke="#fff" stroke-width="1.2"/></svg><span style="-webkit-text-stroke:0.3px #fff">U</span></span></div><div class="mi" style="top:215.09px"><span class="t">Match Color...</span></div><div class="mi" style="top:224.33px"><span class="t">Replace Color...</span></div><div class="mi" style="top:233.57px"><span class="t">Equalize</span></div></div>
<div class="a" style="left:0;top:0;width:620px;height:10.9px;background:linear-gradient(#f0f0f0,#d0d0d0);border-bottom:1px solid #333"></div>
<div class="a" style="left:111.2px;top:0;width:29.3px;height:10.5px;background:linear-gradient(#5b8ff2,#2e63df)"></div>
<svg class="a" style="left:10.6px;top:1.4px" width="7.2" height="7.8" viewBox="0 0 16 18"><path d="M11.5,0.5C10.2,0.6 8.8,1.5 8.3,2.9C9.6,3 10.8,2 11.5,0.5Z M8,4.6C6.8,4.6 5.9,3.9 4.6,3.9C2.4,4 0.5,5.9 0.5,9.2C0.5,13 3,17.5 5,17.5C6.1,17.5 6.6,16.8 8,16.8C9.4,16.8 9.8,17.5 11,17.5C12.6,17.5 14.2,15 15,12.8C13,12 12.2,9 14.6,6.4C13.7,4.9 12.3,4 11,4C9.6,4 8.8,4.6 8,4.6Z" fill="#151515"/></svg>
<div class="mb" style="left:26.6px;color:#111;font-weight:bold;">Photoshop</div>
<div class="mb" style="left:73.6px;color:#111;">File</div>
<div class="mb" style="left:93px;color:#111;">Edit</div>
<div class="mb" style="left:114.8px;color:#fff;-webkit-text-stroke:0.1px #fff;">Image</div>
<div class="mb" style="left:145px;color:#111;">Layer</div>
<div class="mb" style="left:171px;color:#111;">Type</div>
<div class="mb" style="left:195.5px;color:#111;">Select</div>
<div class="mb" style="left:223.3px;color:#111;">Filter</div>
<div class="mb" style="left:249px;color:#111;">View</div>
<div class="mb" style="left:273.5px;color:#111;">Window</div>
<div class="mb" style="left:308.5px;color:#111;">Help</div>
<div class="mb" style="left:546.6px">Wed 10:08 AM</div>
<div class="mb" style="left:603px">Andr</div>
<div class="a" style="left:434.4px;top:2.3px;width:7.6px;height:6.4px;background:#1a1a1a"></div>
<svg class="a" style="left:434.4px;top:2.3px" width="7.6" height="6.4" viewBox="0 0 8 7"><path d="M2.8,1L0.8,6.4M4,1L6.4,6.4" stroke="#eee" stroke-width="1"/></svg>
<div class="mb" style="left:446px;font-size:7px">15</div>
<svg class="a" style="left:459.5px;top:2px" width="7" height="7" viewBox="0 0 7 7"><path d="M1,1.5H4V0.5L6.5,1.5V6.5L3,6.2V4.5H1Z" fill="#222"/></svg>
<svg class="a" style="left:472px;top:1.6px" width="8" height="8" viewBox="0 0 8 8"><circle cx="4" cy="4" r="3.2" fill="none" stroke="#666" stroke-width="0.8"/><path d="M4,2.2V4H5.4" stroke="#666" stroke-width="0.7" fill="none"/></svg>
<div class="a" style="left:489.5px;top:2px;width:2.5px;height:7px;background:#b5b5b5"></div>
<svg class="a" style="left:500px;top:2px" width="11" height="7" viewBox="0 0 11 7"><path d="M0.8,2.6A6.5,6.5 0 0 1 10.2,2.6M2.4,4.1A4.3,4.3 0 0 1 8.6,4.1M4,5.5A2.1,2.1 0 0 1 7,5.5" fill="none" stroke="#1a1a1a" stroke-width="1.1"/><circle cx="5.5" cy="6.5" r="0.6" fill="#1a1a1a"/></svg>
<svg class="a" style="left:514.5px;top:2.6px" width="5" height="6" viewBox="0 0 5 6"><path d="M0.3,2H1.8L4.6,0V6L1.8,4H0.3Z" fill="#1a1a1a"/></svg>
<svg class="a" style="left:529px;top:2.8px" width="11.5" height="5" viewBox="0 0 11.5 5"><rect x="0.5" y="0.5" width="9.5" height="4" fill="none" stroke="#333" stroke-width="0.9"/><rect x="10" y="1.5" width="1.2" height="2" fill="#333"/><rect x="1.5" y="1.5" width="7.5" height="2" fill="#777"/></svg></body></html>
